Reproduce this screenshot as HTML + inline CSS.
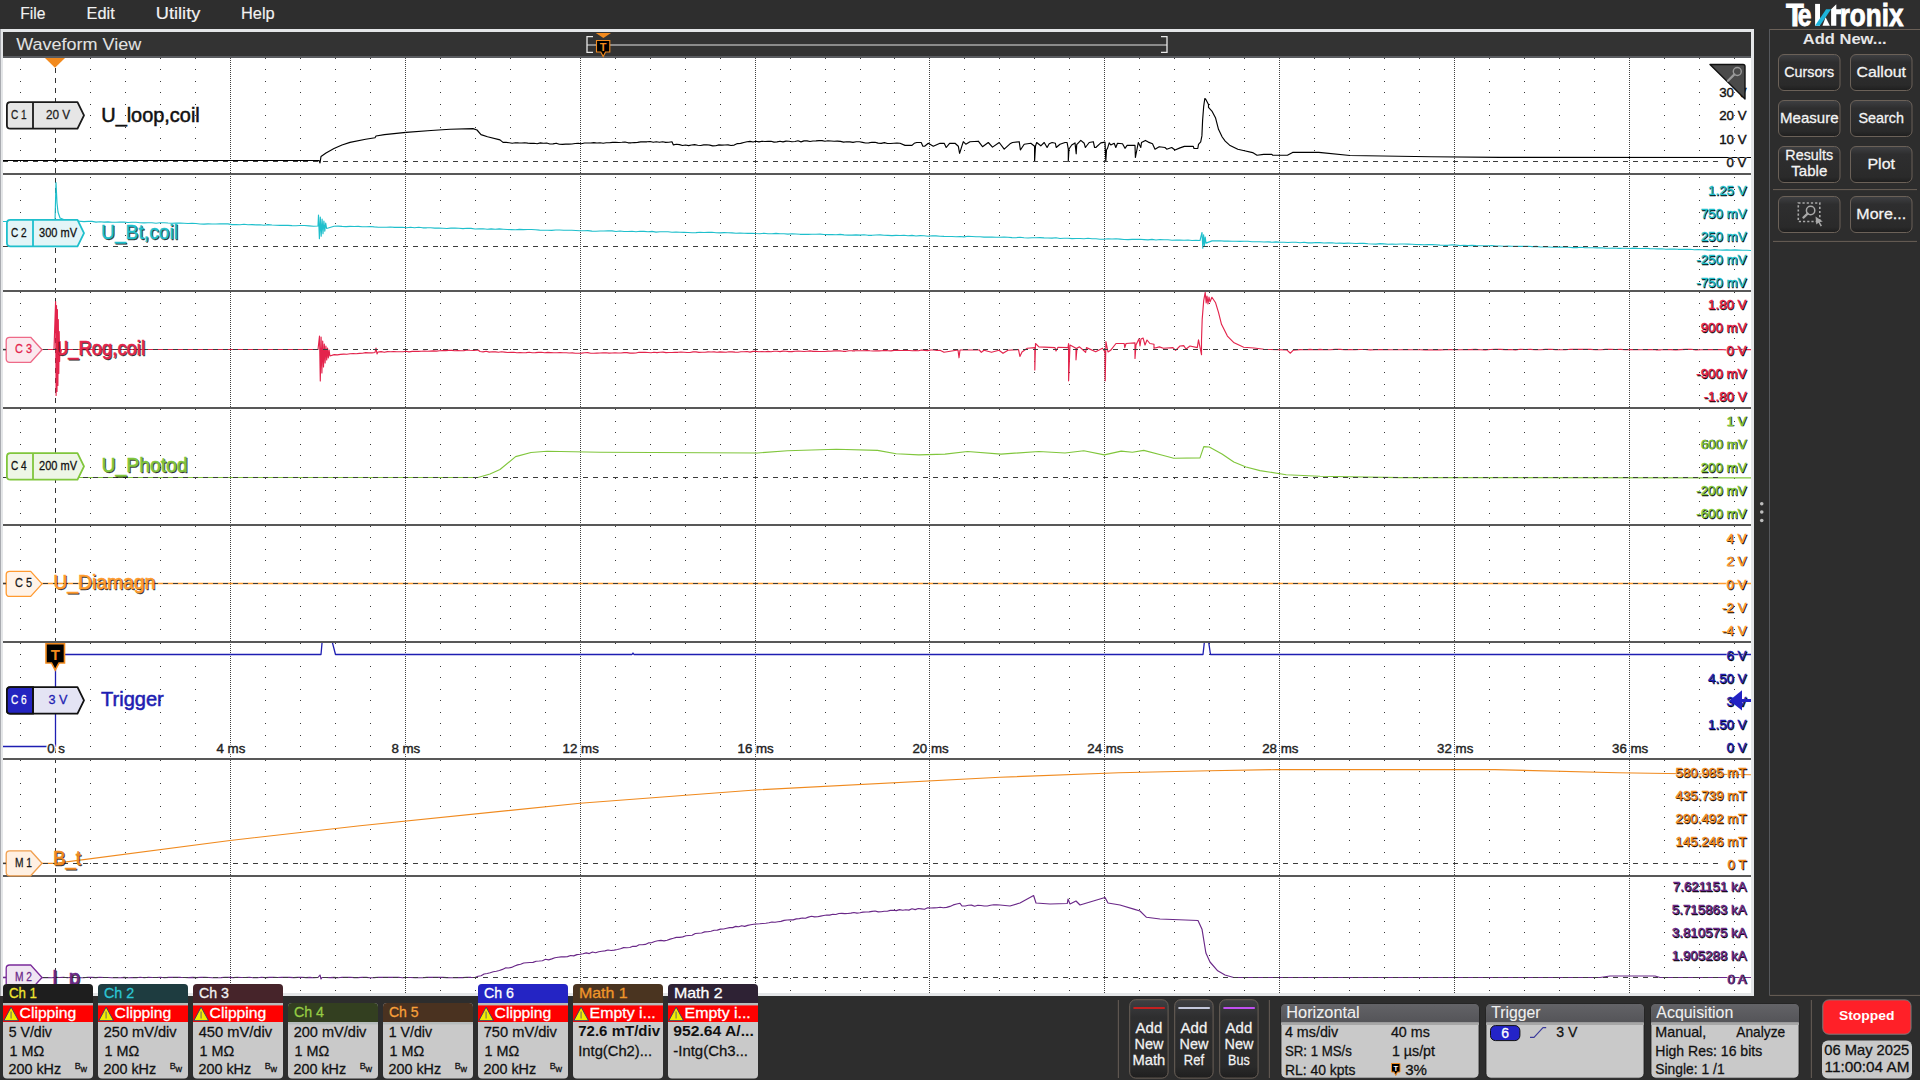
<!DOCTYPE html>
<html><head><meta charset="utf-8"><title>Waveform View</title>
<style>html,body{margin:0;padding:0;background:#2d2d2d;overflow:hidden}svg{display:block}text{font-family:"Liberation Sans", sans-serif}</style></head>
<body><svg width="1920" height="1080" viewBox="0 0 1920 1080" font-family='"Liberation Sans", sans-serif'>
<defs><clipPath id="wv"><rect x="3" y="58" width="1748" height="935"/></clipPath><clipPath id="p6"><rect x="3" y="643" width="1748" height="115"/></clipPath><linearGradient id="btn" x1="0" y1="0" x2="0" y2="1">
<stop offset="0" stop-color="#3f4043"/><stop offset="0.22" stop-color="#2e2e2f"/><stop offset="0.85" stop-color="#2a2a2a"/><stop offset="1" stop-color="#1e1e1e"/></linearGradient>
<linearGradient id="hdr" x1="0" y1="0" x2="0" y2="1"><stop offset="0" stop-color="#636367"/><stop offset="1" stop-color="#545458"/></linearGradient></defs>
<rect x="0" y="0" width="1920" height="1080" fill="#2d2d2d" />
<rect x="0" y="0" width="1920" height="29" fill="#2e2e2e" />
<text x="20.2" y="19" font-size="16" fill="#f2f2f2" font-weight="normal" text-anchor="start" textLength="25.2" lengthAdjust="spacingAndGlyphs" stroke="#f2f2f2" stroke-width="0.15" >File</text>
<text x="86.6" y="19" font-size="16" fill="#f2f2f2" font-weight="normal" text-anchor="start" textLength="28.1" lengthAdjust="spacingAndGlyphs" stroke="#f2f2f2" stroke-width="0.15" >Edit</text>
<text x="155.8" y="19" font-size="16" fill="#f2f2f2" font-weight="normal" text-anchor="start" textLength="44.5" lengthAdjust="spacingAndGlyphs" stroke="#f2f2f2" stroke-width="0.15" >Utility</text>
<text x="241" y="19" font-size="16" fill="#f2f2f2" font-weight="normal" text-anchor="start" textLength="33.7" lengthAdjust="spacingAndGlyphs" stroke="#f2f2f2" stroke-width="0.15" >Help</text>
<rect x="0" y="29" width="1754" height="967" fill="#e4e6e8" />
<rect x="0" y="29" width="1" height="967" fill="#a9abb0" />
<rect x="3" y="32" width="1748" height="24" fill="#333333" />
<rect x="3" y="56" width="1748" height="2" fill="#5a5c60" />
<text x="16.2" y="50" font-size="17" fill="#e2e2e2" font-weight="normal" text-anchor="start" textLength="125" lengthAdjust="spacingAndGlyphs" stroke="#e2e2e2" stroke-width="0.05" >Waveform View</text>
<line x1="587" y1="45" x2="1167" y2="45" stroke="#aaaaaa" stroke-width="1.6" />
<path d="M593,36.7 H587 V52.3 H593" fill="none" stroke="#e8e8e8" stroke-width="1.3"/>
<path d="M1161,36.7 H1167 V52.3 H1161" fill="none" stroke="#e8e8e8" stroke-width="1.3"/>
<path d="M595.8,33 H611 L603.4,38 Z" fill="#f28a1e"/>
<path d="M596.5,40.5 H609.8 V52 H605.5 L603.2,56.5 L600.8,52 H596.5 Z" fill="#000" stroke="#f28a1e" stroke-width="1.1"/>
<text x="603.2" y="50.5" font-size="11" fill="#f28a1e" font-weight="bold" text-anchor="middle" >T</text>
<rect x="3" y="58" width="1748" height="935" fill="#ffffff" />
<path d="M20,173h1v1h-1zM20,161h1v1h-1zM20,150h1v1h-1zM20,138h1v1h-1zM20,127h1v1h-1zM20,115h1v1h-1zM20,104h1v1h-1zM20,92h1v1h-1zM20,81h1v1h-1zM20,69h1v1h-1zM20,58h1v1h-1zM90,173h1v1h-1zM90,161h1v1h-1zM90,150h1v1h-1zM90,138h1v1h-1zM90,127h1v1h-1zM90,115h1v1h-1zM90,104h1v1h-1zM90,92h1v1h-1zM90,81h1v1h-1zM90,69h1v1h-1zM90,58h1v1h-1zM125,173h1v1h-1zM125,161h1v1h-1zM125,150h1v1h-1zM125,138h1v1h-1zM125,127h1v1h-1zM125,115h1v1h-1zM125,104h1v1h-1zM125,92h1v1h-1zM125,81h1v1h-1zM125,69h1v1h-1zM125,58h1v1h-1zM160,173h1v1h-1zM160,161h1v1h-1zM160,150h1v1h-1zM160,138h1v1h-1zM160,127h1v1h-1zM160,115h1v1h-1zM160,104h1v1h-1zM160,92h1v1h-1zM160,81h1v1h-1zM160,69h1v1h-1zM160,58h1v1h-1zM195,173h1v1h-1zM195,161h1v1h-1zM195,150h1v1h-1zM195,138h1v1h-1zM195,127h1v1h-1zM195,115h1v1h-1zM195,104h1v1h-1zM195,92h1v1h-1zM195,81h1v1h-1zM195,69h1v1h-1zM195,58h1v1h-1zM265,173h1v1h-1zM265,161h1v1h-1zM265,150h1v1h-1zM265,138h1v1h-1zM265,127h1v1h-1zM265,115h1v1h-1zM265,104h1v1h-1zM265,92h1v1h-1zM265,81h1v1h-1zM265,69h1v1h-1zM265,58h1v1h-1zM300,173h1v1h-1zM300,161h1v1h-1zM300,150h1v1h-1zM300,138h1v1h-1zM300,127h1v1h-1zM300,115h1v1h-1zM300,104h1v1h-1zM300,92h1v1h-1zM300,81h1v1h-1zM300,69h1v1h-1zM300,58h1v1h-1zM335,173h1v1h-1zM335,161h1v1h-1zM335,150h1v1h-1zM335,138h1v1h-1zM335,127h1v1h-1zM335,115h1v1h-1zM335,104h1v1h-1zM335,92h1v1h-1zM335,81h1v1h-1zM335,69h1v1h-1zM335,58h1v1h-1zM370,173h1v1h-1zM370,161h1v1h-1zM370,150h1v1h-1zM370,138h1v1h-1zM370,127h1v1h-1zM370,115h1v1h-1zM370,104h1v1h-1zM370,92h1v1h-1zM370,81h1v1h-1zM370,69h1v1h-1zM370,58h1v1h-1zM440,173h1v1h-1zM440,161h1v1h-1zM440,150h1v1h-1zM440,138h1v1h-1zM440,127h1v1h-1zM440,115h1v1h-1zM440,104h1v1h-1zM440,92h1v1h-1zM440,81h1v1h-1zM440,69h1v1h-1zM440,58h1v1h-1zM475,173h1v1h-1zM475,161h1v1h-1zM475,150h1v1h-1zM475,138h1v1h-1zM475,127h1v1h-1zM475,115h1v1h-1zM475,104h1v1h-1zM475,92h1v1h-1zM475,81h1v1h-1zM475,69h1v1h-1zM475,58h1v1h-1zM510,173h1v1h-1zM510,161h1v1h-1zM510,150h1v1h-1zM510,138h1v1h-1zM510,127h1v1h-1zM510,115h1v1h-1zM510,104h1v1h-1zM510,92h1v1h-1zM510,81h1v1h-1zM510,69h1v1h-1zM510,58h1v1h-1zM545,173h1v1h-1zM545,161h1v1h-1zM545,150h1v1h-1zM545,138h1v1h-1zM545,127h1v1h-1zM545,115h1v1h-1zM545,104h1v1h-1zM545,92h1v1h-1zM545,81h1v1h-1zM545,69h1v1h-1zM545,58h1v1h-1zM615,173h1v1h-1zM615,161h1v1h-1zM615,150h1v1h-1zM615,138h1v1h-1zM615,127h1v1h-1zM615,115h1v1h-1zM615,104h1v1h-1zM615,92h1v1h-1zM615,81h1v1h-1zM615,69h1v1h-1zM615,58h1v1h-1zM650,173h1v1h-1zM650,161h1v1h-1zM650,150h1v1h-1zM650,138h1v1h-1zM650,127h1v1h-1zM650,115h1v1h-1zM650,104h1v1h-1zM650,92h1v1h-1zM650,81h1v1h-1zM650,69h1v1h-1zM650,58h1v1h-1zM685,173h1v1h-1zM685,161h1v1h-1zM685,150h1v1h-1zM685,138h1v1h-1zM685,127h1v1h-1zM685,115h1v1h-1zM685,104h1v1h-1zM685,92h1v1h-1zM685,81h1v1h-1zM685,69h1v1h-1zM685,58h1v1h-1zM720,173h1v1h-1zM720,161h1v1h-1zM720,150h1v1h-1zM720,138h1v1h-1zM720,127h1v1h-1zM720,115h1v1h-1zM720,104h1v1h-1zM720,92h1v1h-1zM720,81h1v1h-1zM720,69h1v1h-1zM720,58h1v1h-1zM790,173h1v1h-1zM790,161h1v1h-1zM790,150h1v1h-1zM790,138h1v1h-1zM790,127h1v1h-1zM790,115h1v1h-1zM790,104h1v1h-1zM790,92h1v1h-1zM790,81h1v1h-1zM790,69h1v1h-1zM790,58h1v1h-1zM825,173h1v1h-1zM825,161h1v1h-1zM825,150h1v1h-1zM825,138h1v1h-1zM825,127h1v1h-1zM825,115h1v1h-1zM825,104h1v1h-1zM825,92h1v1h-1zM825,81h1v1h-1zM825,69h1v1h-1zM825,58h1v1h-1zM860,173h1v1h-1zM860,161h1v1h-1zM860,150h1v1h-1zM860,138h1v1h-1zM860,127h1v1h-1zM860,115h1v1h-1zM860,104h1v1h-1zM860,92h1v1h-1zM860,81h1v1h-1zM860,69h1v1h-1zM860,58h1v1h-1zM894,173h1v1h-1zM894,161h1v1h-1zM894,150h1v1h-1zM894,138h1v1h-1zM894,127h1v1h-1zM894,115h1v1h-1zM894,104h1v1h-1zM894,92h1v1h-1zM894,81h1v1h-1zM894,69h1v1h-1zM894,58h1v1h-1zM964,173h1v1h-1zM964,161h1v1h-1zM964,150h1v1h-1zM964,138h1v1h-1zM964,127h1v1h-1zM964,115h1v1h-1zM964,104h1v1h-1zM964,92h1v1h-1zM964,81h1v1h-1zM964,69h1v1h-1zM964,58h1v1h-1zM999,173h1v1h-1zM999,161h1v1h-1zM999,150h1v1h-1zM999,138h1v1h-1zM999,127h1v1h-1zM999,115h1v1h-1zM999,104h1v1h-1zM999,92h1v1h-1zM999,81h1v1h-1zM999,69h1v1h-1zM999,58h1v1h-1zM1034,173h1v1h-1zM1034,161h1v1h-1zM1034,150h1v1h-1zM1034,138h1v1h-1zM1034,127h1v1h-1zM1034,115h1v1h-1zM1034,104h1v1h-1zM1034,92h1v1h-1zM1034,81h1v1h-1zM1034,69h1v1h-1zM1034,58h1v1h-1zM1069,173h1v1h-1zM1069,161h1v1h-1zM1069,150h1v1h-1zM1069,138h1v1h-1zM1069,127h1v1h-1zM1069,115h1v1h-1zM1069,104h1v1h-1zM1069,92h1v1h-1zM1069,81h1v1h-1zM1069,69h1v1h-1zM1069,58h1v1h-1zM1139,173h1v1h-1zM1139,161h1v1h-1zM1139,150h1v1h-1zM1139,138h1v1h-1zM1139,127h1v1h-1zM1139,115h1v1h-1zM1139,104h1v1h-1zM1139,92h1v1h-1zM1139,81h1v1h-1zM1139,69h1v1h-1zM1139,58h1v1h-1zM1174,173h1v1h-1zM1174,161h1v1h-1zM1174,150h1v1h-1zM1174,138h1v1h-1zM1174,127h1v1h-1zM1174,115h1v1h-1zM1174,104h1v1h-1zM1174,92h1v1h-1zM1174,81h1v1h-1zM1174,69h1v1h-1zM1174,58h1v1h-1zM1209,173h1v1h-1zM1209,161h1v1h-1zM1209,150h1v1h-1zM1209,138h1v1h-1zM1209,127h1v1h-1zM1209,115h1v1h-1zM1209,104h1v1h-1zM1209,92h1v1h-1zM1209,81h1v1h-1zM1209,69h1v1h-1zM1209,58h1v1h-1zM1244,173h1v1h-1zM1244,161h1v1h-1zM1244,150h1v1h-1zM1244,138h1v1h-1zM1244,127h1v1h-1zM1244,115h1v1h-1zM1244,104h1v1h-1zM1244,92h1v1h-1zM1244,81h1v1h-1zM1244,69h1v1h-1zM1244,58h1v1h-1zM1314,173h1v1h-1zM1314,161h1v1h-1zM1314,150h1v1h-1zM1314,138h1v1h-1zM1314,127h1v1h-1zM1314,115h1v1h-1zM1314,104h1v1h-1zM1314,92h1v1h-1zM1314,81h1v1h-1zM1314,69h1v1h-1zM1314,58h1v1h-1zM1349,173h1v1h-1zM1349,161h1v1h-1zM1349,150h1v1h-1zM1349,138h1v1h-1zM1349,127h1v1h-1zM1349,115h1v1h-1zM1349,104h1v1h-1zM1349,92h1v1h-1zM1349,81h1v1h-1zM1349,69h1v1h-1zM1349,58h1v1h-1zM1384,173h1v1h-1zM1384,161h1v1h-1zM1384,150h1v1h-1zM1384,138h1v1h-1zM1384,127h1v1h-1zM1384,115h1v1h-1zM1384,104h1v1h-1zM1384,92h1v1h-1zM1384,81h1v1h-1zM1384,69h1v1h-1zM1384,58h1v1h-1zM1419,173h1v1h-1zM1419,161h1v1h-1zM1419,150h1v1h-1zM1419,138h1v1h-1zM1419,127h1v1h-1zM1419,115h1v1h-1zM1419,104h1v1h-1zM1419,92h1v1h-1zM1419,81h1v1h-1zM1419,69h1v1h-1zM1419,58h1v1h-1zM1489,173h1v1h-1zM1489,161h1v1h-1zM1489,150h1v1h-1zM1489,138h1v1h-1zM1489,127h1v1h-1zM1489,115h1v1h-1zM1489,104h1v1h-1zM1489,92h1v1h-1zM1489,81h1v1h-1zM1489,69h1v1h-1zM1489,58h1v1h-1zM1524,173h1v1h-1zM1524,161h1v1h-1zM1524,150h1v1h-1zM1524,138h1v1h-1zM1524,127h1v1h-1zM1524,115h1v1h-1zM1524,104h1v1h-1zM1524,92h1v1h-1zM1524,81h1v1h-1zM1524,69h1v1h-1zM1524,58h1v1h-1zM1559,173h1v1h-1zM1559,161h1v1h-1zM1559,150h1v1h-1zM1559,138h1v1h-1zM1559,127h1v1h-1zM1559,115h1v1h-1zM1559,104h1v1h-1zM1559,92h1v1h-1zM1559,81h1v1h-1zM1559,69h1v1h-1zM1559,58h1v1h-1zM1594,173h1v1h-1zM1594,161h1v1h-1zM1594,150h1v1h-1zM1594,138h1v1h-1zM1594,127h1v1h-1zM1594,115h1v1h-1zM1594,104h1v1h-1zM1594,92h1v1h-1zM1594,81h1v1h-1zM1594,69h1v1h-1zM1594,58h1v1h-1zM1664,173h1v1h-1zM1664,161h1v1h-1zM1664,150h1v1h-1zM1664,138h1v1h-1zM1664,127h1v1h-1zM1664,115h1v1h-1zM1664,104h1v1h-1zM1664,92h1v1h-1zM1664,81h1v1h-1zM1664,69h1v1h-1zM1664,58h1v1h-1zM1699,173h1v1h-1zM1699,161h1v1h-1zM1699,150h1v1h-1zM1699,138h1v1h-1zM1699,127h1v1h-1zM1699,115h1v1h-1zM1699,104h1v1h-1zM1699,92h1v1h-1zM1699,81h1v1h-1zM1699,69h1v1h-1zM1699,58h1v1h-1zM1734,173h1v1h-1zM1734,161h1v1h-1zM1734,150h1v1h-1zM1734,138h1v1h-1zM1734,127h1v1h-1zM1734,115h1v1h-1zM1734,104h1v1h-1zM1734,92h1v1h-1zM1734,81h1v1h-1zM1734,69h1v1h-1zM1734,58h1v1h-1zM20,281h1v1h-1zM20,269h1v1h-1zM20,258h1v1h-1zM20,246h1v1h-1zM20,235h1v1h-1zM20,223h1v1h-1zM20,212h1v1h-1zM20,200h1v1h-1zM20,189h1v1h-1zM20,177h1v1h-1zM90,281h1v1h-1zM90,269h1v1h-1zM90,258h1v1h-1zM90,246h1v1h-1zM90,235h1v1h-1zM90,223h1v1h-1zM90,212h1v1h-1zM90,200h1v1h-1zM90,189h1v1h-1zM90,177h1v1h-1zM125,281h1v1h-1zM125,269h1v1h-1zM125,258h1v1h-1zM125,246h1v1h-1zM125,235h1v1h-1zM125,223h1v1h-1zM125,212h1v1h-1zM125,200h1v1h-1zM125,189h1v1h-1zM125,177h1v1h-1zM160,281h1v1h-1zM160,269h1v1h-1zM160,258h1v1h-1zM160,246h1v1h-1zM160,235h1v1h-1zM160,223h1v1h-1zM160,212h1v1h-1zM160,200h1v1h-1zM160,189h1v1h-1zM160,177h1v1h-1zM195,281h1v1h-1zM195,269h1v1h-1zM195,258h1v1h-1zM195,246h1v1h-1zM195,235h1v1h-1zM195,223h1v1h-1zM195,212h1v1h-1zM195,200h1v1h-1zM195,189h1v1h-1zM195,177h1v1h-1zM265,281h1v1h-1zM265,269h1v1h-1zM265,258h1v1h-1zM265,246h1v1h-1zM265,235h1v1h-1zM265,223h1v1h-1zM265,212h1v1h-1zM265,200h1v1h-1zM265,189h1v1h-1zM265,177h1v1h-1zM300,281h1v1h-1zM300,269h1v1h-1zM300,258h1v1h-1zM300,246h1v1h-1zM300,235h1v1h-1zM300,223h1v1h-1zM300,212h1v1h-1zM300,200h1v1h-1zM300,189h1v1h-1zM300,177h1v1h-1zM335,281h1v1h-1zM335,269h1v1h-1zM335,258h1v1h-1zM335,246h1v1h-1zM335,235h1v1h-1zM335,223h1v1h-1zM335,212h1v1h-1zM335,200h1v1h-1zM335,189h1v1h-1zM335,177h1v1h-1zM370,281h1v1h-1zM370,269h1v1h-1zM370,258h1v1h-1zM370,246h1v1h-1zM370,235h1v1h-1zM370,223h1v1h-1zM370,212h1v1h-1zM370,200h1v1h-1zM370,189h1v1h-1zM370,177h1v1h-1zM440,281h1v1h-1zM440,269h1v1h-1zM440,258h1v1h-1zM440,246h1v1h-1zM440,235h1v1h-1zM440,223h1v1h-1zM440,212h1v1h-1zM440,200h1v1h-1zM440,189h1v1h-1zM440,177h1v1h-1zM475,281h1v1h-1zM475,269h1v1h-1zM475,258h1v1h-1zM475,246h1v1h-1zM475,235h1v1h-1zM475,223h1v1h-1zM475,212h1v1h-1zM475,200h1v1h-1zM475,189h1v1h-1zM475,177h1v1h-1zM510,281h1v1h-1zM510,269h1v1h-1zM510,258h1v1h-1zM510,246h1v1h-1zM510,235h1v1h-1zM510,223h1v1h-1zM510,212h1v1h-1zM510,200h1v1h-1zM510,189h1v1h-1zM510,177h1v1h-1zM545,281h1v1h-1zM545,269h1v1h-1zM545,258h1v1h-1zM545,246h1v1h-1zM545,235h1v1h-1zM545,223h1v1h-1zM545,212h1v1h-1zM545,200h1v1h-1zM545,189h1v1h-1zM545,177h1v1h-1zM615,281h1v1h-1zM615,269h1v1h-1zM615,258h1v1h-1zM615,246h1v1h-1zM615,235h1v1h-1zM615,223h1v1h-1zM615,212h1v1h-1zM615,200h1v1h-1zM615,189h1v1h-1zM615,177h1v1h-1zM650,281h1v1h-1zM650,269h1v1h-1zM650,258h1v1h-1zM650,246h1v1h-1zM650,235h1v1h-1zM650,223h1v1h-1zM650,212h1v1h-1zM650,200h1v1h-1zM650,189h1v1h-1zM650,177h1v1h-1zM685,281h1v1h-1zM685,269h1v1h-1zM685,258h1v1h-1zM685,246h1v1h-1zM685,235h1v1h-1zM685,223h1v1h-1zM685,212h1v1h-1zM685,200h1v1h-1zM685,189h1v1h-1zM685,177h1v1h-1zM720,281h1v1h-1zM720,269h1v1h-1zM720,258h1v1h-1zM720,246h1v1h-1zM720,235h1v1h-1zM720,223h1v1h-1zM720,212h1v1h-1zM720,200h1v1h-1zM720,189h1v1h-1zM720,177h1v1h-1zM790,281h1v1h-1zM790,269h1v1h-1zM790,258h1v1h-1zM790,246h1v1h-1zM790,235h1v1h-1zM790,223h1v1h-1zM790,212h1v1h-1zM790,200h1v1h-1zM790,189h1v1h-1zM790,177h1v1h-1zM825,281h1v1h-1zM825,269h1v1h-1zM825,258h1v1h-1zM825,246h1v1h-1zM825,235h1v1h-1zM825,223h1v1h-1zM825,212h1v1h-1zM825,200h1v1h-1zM825,189h1v1h-1zM825,177h1v1h-1zM860,281h1v1h-1zM860,269h1v1h-1zM860,258h1v1h-1zM860,246h1v1h-1zM860,235h1v1h-1zM860,223h1v1h-1zM860,212h1v1h-1zM860,200h1v1h-1zM860,189h1v1h-1zM860,177h1v1h-1zM894,281h1v1h-1zM894,269h1v1h-1zM894,258h1v1h-1zM894,246h1v1h-1zM894,235h1v1h-1zM894,223h1v1h-1zM894,212h1v1h-1zM894,200h1v1h-1zM894,189h1v1h-1zM894,177h1v1h-1zM964,281h1v1h-1zM964,269h1v1h-1zM964,258h1v1h-1zM964,246h1v1h-1zM964,235h1v1h-1zM964,223h1v1h-1zM964,212h1v1h-1zM964,200h1v1h-1zM964,189h1v1h-1zM964,177h1v1h-1zM999,281h1v1h-1zM999,269h1v1h-1zM999,258h1v1h-1zM999,246h1v1h-1zM999,235h1v1h-1zM999,223h1v1h-1zM999,212h1v1h-1zM999,200h1v1h-1zM999,189h1v1h-1zM999,177h1v1h-1zM1034,281h1v1h-1zM1034,269h1v1h-1zM1034,258h1v1h-1zM1034,246h1v1h-1zM1034,235h1v1h-1zM1034,223h1v1h-1zM1034,212h1v1h-1zM1034,200h1v1h-1zM1034,189h1v1h-1zM1034,177h1v1h-1zM1069,281h1v1h-1zM1069,269h1v1h-1zM1069,258h1v1h-1zM1069,246h1v1h-1zM1069,235h1v1h-1zM1069,223h1v1h-1zM1069,212h1v1h-1zM1069,200h1v1h-1zM1069,189h1v1h-1zM1069,177h1v1h-1zM1139,281h1v1h-1zM1139,269h1v1h-1zM1139,258h1v1h-1zM1139,246h1v1h-1zM1139,235h1v1h-1zM1139,223h1v1h-1zM1139,212h1v1h-1zM1139,200h1v1h-1zM1139,189h1v1h-1zM1139,177h1v1h-1zM1174,281h1v1h-1zM1174,269h1v1h-1zM1174,258h1v1h-1zM1174,246h1v1h-1zM1174,235h1v1h-1zM1174,223h1v1h-1zM1174,212h1v1h-1zM1174,200h1v1h-1zM1174,189h1v1h-1zM1174,177h1v1h-1zM1209,281h1v1h-1zM1209,269h1v1h-1zM1209,258h1v1h-1zM1209,246h1v1h-1zM1209,235h1v1h-1zM1209,223h1v1h-1zM1209,212h1v1h-1zM1209,200h1v1h-1zM1209,189h1v1h-1zM1209,177h1v1h-1zM1244,281h1v1h-1zM1244,269h1v1h-1zM1244,258h1v1h-1zM1244,246h1v1h-1zM1244,235h1v1h-1zM1244,223h1v1h-1zM1244,212h1v1h-1zM1244,200h1v1h-1zM1244,189h1v1h-1zM1244,177h1v1h-1zM1314,281h1v1h-1zM1314,269h1v1h-1zM1314,258h1v1h-1zM1314,246h1v1h-1zM1314,235h1v1h-1zM1314,223h1v1h-1zM1314,212h1v1h-1zM1314,200h1v1h-1zM1314,189h1v1h-1zM1314,177h1v1h-1zM1349,281h1v1h-1zM1349,269h1v1h-1zM1349,258h1v1h-1zM1349,246h1v1h-1zM1349,235h1v1h-1zM1349,223h1v1h-1zM1349,212h1v1h-1zM1349,200h1v1h-1zM1349,189h1v1h-1zM1349,177h1v1h-1zM1384,281h1v1h-1zM1384,269h1v1h-1zM1384,258h1v1h-1zM1384,246h1v1h-1zM1384,235h1v1h-1zM1384,223h1v1h-1zM1384,212h1v1h-1zM1384,200h1v1h-1zM1384,189h1v1h-1zM1384,177h1v1h-1zM1419,281h1v1h-1zM1419,269h1v1h-1zM1419,258h1v1h-1zM1419,246h1v1h-1zM1419,235h1v1h-1zM1419,223h1v1h-1zM1419,212h1v1h-1zM1419,200h1v1h-1zM1419,189h1v1h-1zM1419,177h1v1h-1zM1489,281h1v1h-1zM1489,269h1v1h-1zM1489,258h1v1h-1zM1489,246h1v1h-1zM1489,235h1v1h-1zM1489,223h1v1h-1zM1489,212h1v1h-1zM1489,200h1v1h-1zM1489,189h1v1h-1zM1489,177h1v1h-1zM1524,281h1v1h-1zM1524,269h1v1h-1zM1524,258h1v1h-1zM1524,246h1v1h-1zM1524,235h1v1h-1zM1524,223h1v1h-1zM1524,212h1v1h-1zM1524,200h1v1h-1zM1524,189h1v1h-1zM1524,177h1v1h-1zM1559,281h1v1h-1zM1559,269h1v1h-1zM1559,258h1v1h-1zM1559,246h1v1h-1zM1559,235h1v1h-1zM1559,223h1v1h-1zM1559,212h1v1h-1zM1559,200h1v1h-1zM1559,189h1v1h-1zM1559,177h1v1h-1zM1594,281h1v1h-1zM1594,269h1v1h-1zM1594,258h1v1h-1zM1594,246h1v1h-1zM1594,235h1v1h-1zM1594,223h1v1h-1zM1594,212h1v1h-1zM1594,200h1v1h-1zM1594,189h1v1h-1zM1594,177h1v1h-1zM1664,281h1v1h-1zM1664,269h1v1h-1zM1664,258h1v1h-1zM1664,246h1v1h-1zM1664,235h1v1h-1zM1664,223h1v1h-1zM1664,212h1v1h-1zM1664,200h1v1h-1zM1664,189h1v1h-1zM1664,177h1v1h-1zM1699,281h1v1h-1zM1699,269h1v1h-1zM1699,258h1v1h-1zM1699,246h1v1h-1zM1699,235h1v1h-1zM1699,223h1v1h-1zM1699,212h1v1h-1zM1699,200h1v1h-1zM1699,189h1v1h-1zM1699,177h1v1h-1zM1734,281h1v1h-1zM1734,269h1v1h-1zM1734,258h1v1h-1zM1734,246h1v1h-1zM1734,235h1v1h-1zM1734,223h1v1h-1zM1734,212h1v1h-1zM1734,200h1v1h-1zM1734,189h1v1h-1zM1734,177h1v1h-1zM20,407h1v1h-1zM20,395h1v1h-1zM20,384h1v1h-1zM20,372h1v1h-1zM20,361h1v1h-1zM20,349h1v1h-1zM20,338h1v1h-1zM20,326h1v1h-1zM20,315h1v1h-1zM20,303h1v1h-1zM20,292h1v1h-1zM90,407h1v1h-1zM90,395h1v1h-1zM90,384h1v1h-1zM90,372h1v1h-1zM90,361h1v1h-1zM90,349h1v1h-1zM90,338h1v1h-1zM90,326h1v1h-1zM90,315h1v1h-1zM90,303h1v1h-1zM90,292h1v1h-1zM125,407h1v1h-1zM125,395h1v1h-1zM125,384h1v1h-1zM125,372h1v1h-1zM125,361h1v1h-1zM125,349h1v1h-1zM125,338h1v1h-1zM125,326h1v1h-1zM125,315h1v1h-1zM125,303h1v1h-1zM125,292h1v1h-1zM160,407h1v1h-1zM160,395h1v1h-1zM160,384h1v1h-1zM160,372h1v1h-1zM160,361h1v1h-1zM160,349h1v1h-1zM160,338h1v1h-1zM160,326h1v1h-1zM160,315h1v1h-1zM160,303h1v1h-1zM160,292h1v1h-1zM195,407h1v1h-1zM195,395h1v1h-1zM195,384h1v1h-1zM195,372h1v1h-1zM195,361h1v1h-1zM195,349h1v1h-1zM195,338h1v1h-1zM195,326h1v1h-1zM195,315h1v1h-1zM195,303h1v1h-1zM195,292h1v1h-1zM265,407h1v1h-1zM265,395h1v1h-1zM265,384h1v1h-1zM265,372h1v1h-1zM265,361h1v1h-1zM265,349h1v1h-1zM265,338h1v1h-1zM265,326h1v1h-1zM265,315h1v1h-1zM265,303h1v1h-1zM265,292h1v1h-1zM300,407h1v1h-1zM300,395h1v1h-1zM300,384h1v1h-1zM300,372h1v1h-1zM300,361h1v1h-1zM300,349h1v1h-1zM300,338h1v1h-1zM300,326h1v1h-1zM300,315h1v1h-1zM300,303h1v1h-1zM300,292h1v1h-1zM335,407h1v1h-1zM335,395h1v1h-1zM335,384h1v1h-1zM335,372h1v1h-1zM335,361h1v1h-1zM335,349h1v1h-1zM335,338h1v1h-1zM335,326h1v1h-1zM335,315h1v1h-1zM335,303h1v1h-1zM335,292h1v1h-1zM370,407h1v1h-1zM370,395h1v1h-1zM370,384h1v1h-1zM370,372h1v1h-1zM370,361h1v1h-1zM370,349h1v1h-1zM370,338h1v1h-1zM370,326h1v1h-1zM370,315h1v1h-1zM370,303h1v1h-1zM370,292h1v1h-1zM440,407h1v1h-1zM440,395h1v1h-1zM440,384h1v1h-1zM440,372h1v1h-1zM440,361h1v1h-1zM440,349h1v1h-1zM440,338h1v1h-1zM440,326h1v1h-1zM440,315h1v1h-1zM440,303h1v1h-1zM440,292h1v1h-1zM475,407h1v1h-1zM475,395h1v1h-1zM475,384h1v1h-1zM475,372h1v1h-1zM475,361h1v1h-1zM475,349h1v1h-1zM475,338h1v1h-1zM475,326h1v1h-1zM475,315h1v1h-1zM475,303h1v1h-1zM475,292h1v1h-1zM510,407h1v1h-1zM510,395h1v1h-1zM510,384h1v1h-1zM510,372h1v1h-1zM510,361h1v1h-1zM510,349h1v1h-1zM510,338h1v1h-1zM510,326h1v1h-1zM510,315h1v1h-1zM510,303h1v1h-1zM510,292h1v1h-1zM545,407h1v1h-1zM545,395h1v1h-1zM545,384h1v1h-1zM545,372h1v1h-1zM545,361h1v1h-1zM545,349h1v1h-1zM545,338h1v1h-1zM545,326h1v1h-1zM545,315h1v1h-1zM545,303h1v1h-1zM545,292h1v1h-1zM615,407h1v1h-1zM615,395h1v1h-1zM615,384h1v1h-1zM615,372h1v1h-1zM615,361h1v1h-1zM615,349h1v1h-1zM615,338h1v1h-1zM615,326h1v1h-1zM615,315h1v1h-1zM615,303h1v1h-1zM615,292h1v1h-1zM650,407h1v1h-1zM650,395h1v1h-1zM650,384h1v1h-1zM650,372h1v1h-1zM650,361h1v1h-1zM650,349h1v1h-1zM650,338h1v1h-1zM650,326h1v1h-1zM650,315h1v1h-1zM650,303h1v1h-1zM650,292h1v1h-1zM685,407h1v1h-1zM685,395h1v1h-1zM685,384h1v1h-1zM685,372h1v1h-1zM685,361h1v1h-1zM685,349h1v1h-1zM685,338h1v1h-1zM685,326h1v1h-1zM685,315h1v1h-1zM685,303h1v1h-1zM685,292h1v1h-1zM720,407h1v1h-1zM720,395h1v1h-1zM720,384h1v1h-1zM720,372h1v1h-1zM720,361h1v1h-1zM720,349h1v1h-1zM720,338h1v1h-1zM720,326h1v1h-1zM720,315h1v1h-1zM720,303h1v1h-1zM720,292h1v1h-1zM790,407h1v1h-1zM790,395h1v1h-1zM790,384h1v1h-1zM790,372h1v1h-1zM790,361h1v1h-1zM790,349h1v1h-1zM790,338h1v1h-1zM790,326h1v1h-1zM790,315h1v1h-1zM790,303h1v1h-1zM790,292h1v1h-1zM825,407h1v1h-1zM825,395h1v1h-1zM825,384h1v1h-1zM825,372h1v1h-1zM825,361h1v1h-1zM825,349h1v1h-1zM825,338h1v1h-1zM825,326h1v1h-1zM825,315h1v1h-1zM825,303h1v1h-1zM825,292h1v1h-1zM860,407h1v1h-1zM860,395h1v1h-1zM860,384h1v1h-1zM860,372h1v1h-1zM860,361h1v1h-1zM860,349h1v1h-1zM860,338h1v1h-1zM860,326h1v1h-1zM860,315h1v1h-1zM860,303h1v1h-1zM860,292h1v1h-1zM894,407h1v1h-1zM894,395h1v1h-1zM894,384h1v1h-1zM894,372h1v1h-1zM894,361h1v1h-1zM894,349h1v1h-1zM894,338h1v1h-1zM894,326h1v1h-1zM894,315h1v1h-1zM894,303h1v1h-1zM894,292h1v1h-1zM964,407h1v1h-1zM964,395h1v1h-1zM964,384h1v1h-1zM964,372h1v1h-1zM964,361h1v1h-1zM964,349h1v1h-1zM964,338h1v1h-1zM964,326h1v1h-1zM964,315h1v1h-1zM964,303h1v1h-1zM964,292h1v1h-1zM999,407h1v1h-1zM999,395h1v1h-1zM999,384h1v1h-1zM999,372h1v1h-1zM999,361h1v1h-1zM999,349h1v1h-1zM999,338h1v1h-1zM999,326h1v1h-1zM999,315h1v1h-1zM999,303h1v1h-1zM999,292h1v1h-1zM1034,407h1v1h-1zM1034,395h1v1h-1zM1034,384h1v1h-1zM1034,372h1v1h-1zM1034,361h1v1h-1zM1034,349h1v1h-1zM1034,338h1v1h-1zM1034,326h1v1h-1zM1034,315h1v1h-1zM1034,303h1v1h-1zM1034,292h1v1h-1zM1069,407h1v1h-1zM1069,395h1v1h-1zM1069,384h1v1h-1zM1069,372h1v1h-1zM1069,361h1v1h-1zM1069,349h1v1h-1zM1069,338h1v1h-1zM1069,326h1v1h-1zM1069,315h1v1h-1zM1069,303h1v1h-1zM1069,292h1v1h-1zM1139,407h1v1h-1zM1139,395h1v1h-1zM1139,384h1v1h-1zM1139,372h1v1h-1zM1139,361h1v1h-1zM1139,349h1v1h-1zM1139,338h1v1h-1zM1139,326h1v1h-1zM1139,315h1v1h-1zM1139,303h1v1h-1zM1139,292h1v1h-1zM1174,407h1v1h-1zM1174,395h1v1h-1zM1174,384h1v1h-1zM1174,372h1v1h-1zM1174,361h1v1h-1zM1174,349h1v1h-1zM1174,338h1v1h-1zM1174,326h1v1h-1zM1174,315h1v1h-1zM1174,303h1v1h-1zM1174,292h1v1h-1zM1209,407h1v1h-1zM1209,395h1v1h-1zM1209,384h1v1h-1zM1209,372h1v1h-1zM1209,361h1v1h-1zM1209,349h1v1h-1zM1209,338h1v1h-1zM1209,326h1v1h-1zM1209,315h1v1h-1zM1209,303h1v1h-1zM1209,292h1v1h-1zM1244,407h1v1h-1zM1244,395h1v1h-1zM1244,384h1v1h-1zM1244,372h1v1h-1zM1244,361h1v1h-1zM1244,349h1v1h-1zM1244,338h1v1h-1zM1244,326h1v1h-1zM1244,315h1v1h-1zM1244,303h1v1h-1zM1244,292h1v1h-1zM1314,407h1v1h-1zM1314,395h1v1h-1zM1314,384h1v1h-1zM1314,372h1v1h-1zM1314,361h1v1h-1zM1314,349h1v1h-1zM1314,338h1v1h-1zM1314,326h1v1h-1zM1314,315h1v1h-1zM1314,303h1v1h-1zM1314,292h1v1h-1zM1349,407h1v1h-1zM1349,395h1v1h-1zM1349,384h1v1h-1zM1349,372h1v1h-1zM1349,361h1v1h-1zM1349,349h1v1h-1zM1349,338h1v1h-1zM1349,326h1v1h-1zM1349,315h1v1h-1zM1349,303h1v1h-1zM1349,292h1v1h-1zM1384,407h1v1h-1zM1384,395h1v1h-1zM1384,384h1v1h-1zM1384,372h1v1h-1zM1384,361h1v1h-1zM1384,349h1v1h-1zM1384,338h1v1h-1zM1384,326h1v1h-1zM1384,315h1v1h-1zM1384,303h1v1h-1zM1384,292h1v1h-1zM1419,407h1v1h-1zM1419,395h1v1h-1zM1419,384h1v1h-1zM1419,372h1v1h-1zM1419,361h1v1h-1zM1419,349h1v1h-1zM1419,338h1v1h-1zM1419,326h1v1h-1zM1419,315h1v1h-1zM1419,303h1v1h-1zM1419,292h1v1h-1zM1489,407h1v1h-1zM1489,395h1v1h-1zM1489,384h1v1h-1zM1489,372h1v1h-1zM1489,361h1v1h-1zM1489,349h1v1h-1zM1489,338h1v1h-1zM1489,326h1v1h-1zM1489,315h1v1h-1zM1489,303h1v1h-1zM1489,292h1v1h-1zM1524,407h1v1h-1zM1524,395h1v1h-1zM1524,384h1v1h-1zM1524,372h1v1h-1zM1524,361h1v1h-1zM1524,349h1v1h-1zM1524,338h1v1h-1zM1524,326h1v1h-1zM1524,315h1v1h-1zM1524,303h1v1h-1zM1524,292h1v1h-1zM1559,407h1v1h-1zM1559,395h1v1h-1zM1559,384h1v1h-1zM1559,372h1v1h-1zM1559,361h1v1h-1zM1559,349h1v1h-1zM1559,338h1v1h-1zM1559,326h1v1h-1zM1559,315h1v1h-1zM1559,303h1v1h-1zM1559,292h1v1h-1zM1594,407h1v1h-1zM1594,395h1v1h-1zM1594,384h1v1h-1zM1594,372h1v1h-1zM1594,361h1v1h-1zM1594,349h1v1h-1zM1594,338h1v1h-1zM1594,326h1v1h-1zM1594,315h1v1h-1zM1594,303h1v1h-1zM1594,292h1v1h-1zM1664,407h1v1h-1zM1664,395h1v1h-1zM1664,384h1v1h-1zM1664,372h1v1h-1zM1664,361h1v1h-1zM1664,349h1v1h-1zM1664,338h1v1h-1zM1664,326h1v1h-1zM1664,315h1v1h-1zM1664,303h1v1h-1zM1664,292h1v1h-1zM1699,407h1v1h-1zM1699,395h1v1h-1zM1699,384h1v1h-1zM1699,372h1v1h-1zM1699,361h1v1h-1zM1699,349h1v1h-1zM1699,338h1v1h-1zM1699,326h1v1h-1zM1699,315h1v1h-1zM1699,303h1v1h-1zM1699,292h1v1h-1zM1734,407h1v1h-1zM1734,395h1v1h-1zM1734,384h1v1h-1zM1734,372h1v1h-1zM1734,361h1v1h-1zM1734,349h1v1h-1zM1734,338h1v1h-1zM1734,326h1v1h-1zM1734,315h1v1h-1zM1734,303h1v1h-1zM1734,292h1v1h-1zM20,513h1v1h-1zM20,501h1v1h-1zM20,490h1v1h-1zM20,478h1v1h-1zM20,467h1v1h-1zM20,455h1v1h-1zM20,444h1v1h-1zM20,432h1v1h-1zM20,421h1v1h-1zM20,409h1v1h-1zM90,513h1v1h-1zM90,501h1v1h-1zM90,490h1v1h-1zM90,478h1v1h-1zM90,467h1v1h-1zM90,455h1v1h-1zM90,444h1v1h-1zM90,432h1v1h-1zM90,421h1v1h-1zM90,409h1v1h-1zM125,513h1v1h-1zM125,501h1v1h-1zM125,490h1v1h-1zM125,478h1v1h-1zM125,467h1v1h-1zM125,455h1v1h-1zM125,444h1v1h-1zM125,432h1v1h-1zM125,421h1v1h-1zM125,409h1v1h-1zM160,513h1v1h-1zM160,501h1v1h-1zM160,490h1v1h-1zM160,478h1v1h-1zM160,467h1v1h-1zM160,455h1v1h-1zM160,444h1v1h-1zM160,432h1v1h-1zM160,421h1v1h-1zM160,409h1v1h-1zM195,513h1v1h-1zM195,501h1v1h-1zM195,490h1v1h-1zM195,478h1v1h-1zM195,467h1v1h-1zM195,455h1v1h-1zM195,444h1v1h-1zM195,432h1v1h-1zM195,421h1v1h-1zM195,409h1v1h-1zM265,513h1v1h-1zM265,501h1v1h-1zM265,490h1v1h-1zM265,478h1v1h-1zM265,467h1v1h-1zM265,455h1v1h-1zM265,444h1v1h-1zM265,432h1v1h-1zM265,421h1v1h-1zM265,409h1v1h-1zM300,513h1v1h-1zM300,501h1v1h-1zM300,490h1v1h-1zM300,478h1v1h-1zM300,467h1v1h-1zM300,455h1v1h-1zM300,444h1v1h-1zM300,432h1v1h-1zM300,421h1v1h-1zM300,409h1v1h-1zM335,513h1v1h-1zM335,501h1v1h-1zM335,490h1v1h-1zM335,478h1v1h-1zM335,467h1v1h-1zM335,455h1v1h-1zM335,444h1v1h-1zM335,432h1v1h-1zM335,421h1v1h-1zM335,409h1v1h-1zM370,513h1v1h-1zM370,501h1v1h-1zM370,490h1v1h-1zM370,478h1v1h-1zM370,467h1v1h-1zM370,455h1v1h-1zM370,444h1v1h-1zM370,432h1v1h-1zM370,421h1v1h-1zM370,409h1v1h-1zM440,513h1v1h-1zM440,501h1v1h-1zM440,490h1v1h-1zM440,478h1v1h-1zM440,467h1v1h-1zM440,455h1v1h-1zM440,444h1v1h-1zM440,432h1v1h-1zM440,421h1v1h-1zM440,409h1v1h-1zM475,513h1v1h-1zM475,501h1v1h-1zM475,490h1v1h-1zM475,478h1v1h-1zM475,467h1v1h-1zM475,455h1v1h-1zM475,444h1v1h-1zM475,432h1v1h-1zM475,421h1v1h-1zM475,409h1v1h-1zM510,513h1v1h-1zM510,501h1v1h-1zM510,490h1v1h-1zM510,478h1v1h-1zM510,467h1v1h-1zM510,455h1v1h-1zM510,444h1v1h-1zM510,432h1v1h-1zM510,421h1v1h-1zM510,409h1v1h-1zM545,513h1v1h-1zM545,501h1v1h-1zM545,490h1v1h-1zM545,478h1v1h-1zM545,467h1v1h-1zM545,455h1v1h-1zM545,444h1v1h-1zM545,432h1v1h-1zM545,421h1v1h-1zM545,409h1v1h-1zM615,513h1v1h-1zM615,501h1v1h-1zM615,490h1v1h-1zM615,478h1v1h-1zM615,467h1v1h-1zM615,455h1v1h-1zM615,444h1v1h-1zM615,432h1v1h-1zM615,421h1v1h-1zM615,409h1v1h-1zM650,513h1v1h-1zM650,501h1v1h-1zM650,490h1v1h-1zM650,478h1v1h-1zM650,467h1v1h-1zM650,455h1v1h-1zM650,444h1v1h-1zM650,432h1v1h-1zM650,421h1v1h-1zM650,409h1v1h-1zM685,513h1v1h-1zM685,501h1v1h-1zM685,490h1v1h-1zM685,478h1v1h-1zM685,467h1v1h-1zM685,455h1v1h-1zM685,444h1v1h-1zM685,432h1v1h-1zM685,421h1v1h-1zM685,409h1v1h-1zM720,513h1v1h-1zM720,501h1v1h-1zM720,490h1v1h-1zM720,478h1v1h-1zM720,467h1v1h-1zM720,455h1v1h-1zM720,444h1v1h-1zM720,432h1v1h-1zM720,421h1v1h-1zM720,409h1v1h-1zM790,513h1v1h-1zM790,501h1v1h-1zM790,490h1v1h-1zM790,478h1v1h-1zM790,467h1v1h-1zM790,455h1v1h-1zM790,444h1v1h-1zM790,432h1v1h-1zM790,421h1v1h-1zM790,409h1v1h-1zM825,513h1v1h-1zM825,501h1v1h-1zM825,490h1v1h-1zM825,478h1v1h-1zM825,467h1v1h-1zM825,455h1v1h-1zM825,444h1v1h-1zM825,432h1v1h-1zM825,421h1v1h-1zM825,409h1v1h-1zM860,513h1v1h-1zM860,501h1v1h-1zM860,490h1v1h-1zM860,478h1v1h-1zM860,467h1v1h-1zM860,455h1v1h-1zM860,444h1v1h-1zM860,432h1v1h-1zM860,421h1v1h-1zM860,409h1v1h-1zM894,513h1v1h-1zM894,501h1v1h-1zM894,490h1v1h-1zM894,478h1v1h-1zM894,467h1v1h-1zM894,455h1v1h-1zM894,444h1v1h-1zM894,432h1v1h-1zM894,421h1v1h-1zM894,409h1v1h-1zM964,513h1v1h-1zM964,501h1v1h-1zM964,490h1v1h-1zM964,478h1v1h-1zM964,467h1v1h-1zM964,455h1v1h-1zM964,444h1v1h-1zM964,432h1v1h-1zM964,421h1v1h-1zM964,409h1v1h-1zM999,513h1v1h-1zM999,501h1v1h-1zM999,490h1v1h-1zM999,478h1v1h-1zM999,467h1v1h-1zM999,455h1v1h-1zM999,444h1v1h-1zM999,432h1v1h-1zM999,421h1v1h-1zM999,409h1v1h-1zM1034,513h1v1h-1zM1034,501h1v1h-1zM1034,490h1v1h-1zM1034,478h1v1h-1zM1034,467h1v1h-1zM1034,455h1v1h-1zM1034,444h1v1h-1zM1034,432h1v1h-1zM1034,421h1v1h-1zM1034,409h1v1h-1zM1069,513h1v1h-1zM1069,501h1v1h-1zM1069,490h1v1h-1zM1069,478h1v1h-1zM1069,467h1v1h-1zM1069,455h1v1h-1zM1069,444h1v1h-1zM1069,432h1v1h-1zM1069,421h1v1h-1zM1069,409h1v1h-1zM1139,513h1v1h-1zM1139,501h1v1h-1zM1139,490h1v1h-1zM1139,478h1v1h-1zM1139,467h1v1h-1zM1139,455h1v1h-1zM1139,444h1v1h-1zM1139,432h1v1h-1zM1139,421h1v1h-1zM1139,409h1v1h-1zM1174,513h1v1h-1zM1174,501h1v1h-1zM1174,490h1v1h-1zM1174,478h1v1h-1zM1174,467h1v1h-1zM1174,455h1v1h-1zM1174,444h1v1h-1zM1174,432h1v1h-1zM1174,421h1v1h-1zM1174,409h1v1h-1zM1209,513h1v1h-1zM1209,501h1v1h-1zM1209,490h1v1h-1zM1209,478h1v1h-1zM1209,467h1v1h-1zM1209,455h1v1h-1zM1209,444h1v1h-1zM1209,432h1v1h-1zM1209,421h1v1h-1zM1209,409h1v1h-1zM1244,513h1v1h-1zM1244,501h1v1h-1zM1244,490h1v1h-1zM1244,478h1v1h-1zM1244,467h1v1h-1zM1244,455h1v1h-1zM1244,444h1v1h-1zM1244,432h1v1h-1zM1244,421h1v1h-1zM1244,409h1v1h-1zM1314,513h1v1h-1zM1314,501h1v1h-1zM1314,490h1v1h-1zM1314,478h1v1h-1zM1314,467h1v1h-1zM1314,455h1v1h-1zM1314,444h1v1h-1zM1314,432h1v1h-1zM1314,421h1v1h-1zM1314,409h1v1h-1zM1349,513h1v1h-1zM1349,501h1v1h-1zM1349,490h1v1h-1zM1349,478h1v1h-1zM1349,467h1v1h-1zM1349,455h1v1h-1zM1349,444h1v1h-1zM1349,432h1v1h-1zM1349,421h1v1h-1zM1349,409h1v1h-1zM1384,513h1v1h-1zM1384,501h1v1h-1zM1384,490h1v1h-1zM1384,478h1v1h-1zM1384,467h1v1h-1zM1384,455h1v1h-1zM1384,444h1v1h-1zM1384,432h1v1h-1zM1384,421h1v1h-1zM1384,409h1v1h-1zM1419,513h1v1h-1zM1419,501h1v1h-1zM1419,490h1v1h-1zM1419,478h1v1h-1zM1419,467h1v1h-1zM1419,455h1v1h-1zM1419,444h1v1h-1zM1419,432h1v1h-1zM1419,421h1v1h-1zM1419,409h1v1h-1zM1489,513h1v1h-1zM1489,501h1v1h-1zM1489,490h1v1h-1zM1489,478h1v1h-1zM1489,467h1v1h-1zM1489,455h1v1h-1zM1489,444h1v1h-1zM1489,432h1v1h-1zM1489,421h1v1h-1zM1489,409h1v1h-1zM1524,513h1v1h-1zM1524,501h1v1h-1zM1524,490h1v1h-1zM1524,478h1v1h-1zM1524,467h1v1h-1zM1524,455h1v1h-1zM1524,444h1v1h-1zM1524,432h1v1h-1zM1524,421h1v1h-1zM1524,409h1v1h-1zM1559,513h1v1h-1zM1559,501h1v1h-1zM1559,490h1v1h-1zM1559,478h1v1h-1zM1559,467h1v1h-1zM1559,455h1v1h-1zM1559,444h1v1h-1zM1559,432h1v1h-1zM1559,421h1v1h-1zM1559,409h1v1h-1zM1594,513h1v1h-1zM1594,501h1v1h-1zM1594,490h1v1h-1zM1594,478h1v1h-1zM1594,467h1v1h-1zM1594,455h1v1h-1zM1594,444h1v1h-1zM1594,432h1v1h-1zM1594,421h1v1h-1zM1594,409h1v1h-1zM1664,513h1v1h-1zM1664,501h1v1h-1zM1664,490h1v1h-1zM1664,478h1v1h-1zM1664,467h1v1h-1zM1664,455h1v1h-1zM1664,444h1v1h-1zM1664,432h1v1h-1zM1664,421h1v1h-1zM1664,409h1v1h-1zM1699,513h1v1h-1zM1699,501h1v1h-1zM1699,490h1v1h-1zM1699,478h1v1h-1zM1699,467h1v1h-1zM1699,455h1v1h-1zM1699,444h1v1h-1zM1699,432h1v1h-1zM1699,421h1v1h-1zM1699,409h1v1h-1zM1734,513h1v1h-1zM1734,501h1v1h-1zM1734,490h1v1h-1zM1734,478h1v1h-1zM1734,467h1v1h-1zM1734,455h1v1h-1zM1734,444h1v1h-1zM1734,432h1v1h-1zM1734,421h1v1h-1zM1734,409h1v1h-1zM20,629h1v1h-1zM20,618h1v1h-1zM20,606h1v1h-1zM20,595h1v1h-1zM20,583h1v1h-1zM20,572h1v1h-1zM20,560h1v1h-1zM20,549h1v1h-1zM20,537h1v1h-1zM20,526h1v1h-1zM90,629h1v1h-1zM90,618h1v1h-1zM90,606h1v1h-1zM90,595h1v1h-1zM90,583h1v1h-1zM90,572h1v1h-1zM90,560h1v1h-1zM90,549h1v1h-1zM90,537h1v1h-1zM90,526h1v1h-1zM125,629h1v1h-1zM125,618h1v1h-1zM125,606h1v1h-1zM125,595h1v1h-1zM125,583h1v1h-1zM125,572h1v1h-1zM125,560h1v1h-1zM125,549h1v1h-1zM125,537h1v1h-1zM125,526h1v1h-1zM160,629h1v1h-1zM160,618h1v1h-1zM160,606h1v1h-1zM160,595h1v1h-1zM160,583h1v1h-1zM160,572h1v1h-1zM160,560h1v1h-1zM160,549h1v1h-1zM160,537h1v1h-1zM160,526h1v1h-1zM195,629h1v1h-1zM195,618h1v1h-1zM195,606h1v1h-1zM195,595h1v1h-1zM195,583h1v1h-1zM195,572h1v1h-1zM195,560h1v1h-1zM195,549h1v1h-1zM195,537h1v1h-1zM195,526h1v1h-1zM265,629h1v1h-1zM265,618h1v1h-1zM265,606h1v1h-1zM265,595h1v1h-1zM265,583h1v1h-1zM265,572h1v1h-1zM265,560h1v1h-1zM265,549h1v1h-1zM265,537h1v1h-1zM265,526h1v1h-1zM300,629h1v1h-1zM300,618h1v1h-1zM300,606h1v1h-1zM300,595h1v1h-1zM300,583h1v1h-1zM300,572h1v1h-1zM300,560h1v1h-1zM300,549h1v1h-1zM300,537h1v1h-1zM300,526h1v1h-1zM335,629h1v1h-1zM335,618h1v1h-1zM335,606h1v1h-1zM335,595h1v1h-1zM335,583h1v1h-1zM335,572h1v1h-1zM335,560h1v1h-1zM335,549h1v1h-1zM335,537h1v1h-1zM335,526h1v1h-1zM370,629h1v1h-1zM370,618h1v1h-1zM370,606h1v1h-1zM370,595h1v1h-1zM370,583h1v1h-1zM370,572h1v1h-1zM370,560h1v1h-1zM370,549h1v1h-1zM370,537h1v1h-1zM370,526h1v1h-1zM440,629h1v1h-1zM440,618h1v1h-1zM440,606h1v1h-1zM440,595h1v1h-1zM440,583h1v1h-1zM440,572h1v1h-1zM440,560h1v1h-1zM440,549h1v1h-1zM440,537h1v1h-1zM440,526h1v1h-1zM475,629h1v1h-1zM475,618h1v1h-1zM475,606h1v1h-1zM475,595h1v1h-1zM475,583h1v1h-1zM475,572h1v1h-1zM475,560h1v1h-1zM475,549h1v1h-1zM475,537h1v1h-1zM475,526h1v1h-1zM510,629h1v1h-1zM510,618h1v1h-1zM510,606h1v1h-1zM510,595h1v1h-1zM510,583h1v1h-1zM510,572h1v1h-1zM510,560h1v1h-1zM510,549h1v1h-1zM510,537h1v1h-1zM510,526h1v1h-1zM545,629h1v1h-1zM545,618h1v1h-1zM545,606h1v1h-1zM545,595h1v1h-1zM545,583h1v1h-1zM545,572h1v1h-1zM545,560h1v1h-1zM545,549h1v1h-1zM545,537h1v1h-1zM545,526h1v1h-1zM615,629h1v1h-1zM615,618h1v1h-1zM615,606h1v1h-1zM615,595h1v1h-1zM615,583h1v1h-1zM615,572h1v1h-1zM615,560h1v1h-1zM615,549h1v1h-1zM615,537h1v1h-1zM615,526h1v1h-1zM650,629h1v1h-1zM650,618h1v1h-1zM650,606h1v1h-1zM650,595h1v1h-1zM650,583h1v1h-1zM650,572h1v1h-1zM650,560h1v1h-1zM650,549h1v1h-1zM650,537h1v1h-1zM650,526h1v1h-1zM685,629h1v1h-1zM685,618h1v1h-1zM685,606h1v1h-1zM685,595h1v1h-1zM685,583h1v1h-1zM685,572h1v1h-1zM685,560h1v1h-1zM685,549h1v1h-1zM685,537h1v1h-1zM685,526h1v1h-1zM720,629h1v1h-1zM720,618h1v1h-1zM720,606h1v1h-1zM720,595h1v1h-1zM720,583h1v1h-1zM720,572h1v1h-1zM720,560h1v1h-1zM720,549h1v1h-1zM720,537h1v1h-1zM720,526h1v1h-1zM790,629h1v1h-1zM790,618h1v1h-1zM790,606h1v1h-1zM790,595h1v1h-1zM790,583h1v1h-1zM790,572h1v1h-1zM790,560h1v1h-1zM790,549h1v1h-1zM790,537h1v1h-1zM790,526h1v1h-1zM825,629h1v1h-1zM825,618h1v1h-1zM825,606h1v1h-1zM825,595h1v1h-1zM825,583h1v1h-1zM825,572h1v1h-1zM825,560h1v1h-1zM825,549h1v1h-1zM825,537h1v1h-1zM825,526h1v1h-1zM860,629h1v1h-1zM860,618h1v1h-1zM860,606h1v1h-1zM860,595h1v1h-1zM860,583h1v1h-1zM860,572h1v1h-1zM860,560h1v1h-1zM860,549h1v1h-1zM860,537h1v1h-1zM860,526h1v1h-1zM894,629h1v1h-1zM894,618h1v1h-1zM894,606h1v1h-1zM894,595h1v1h-1zM894,583h1v1h-1zM894,572h1v1h-1zM894,560h1v1h-1zM894,549h1v1h-1zM894,537h1v1h-1zM894,526h1v1h-1zM964,629h1v1h-1zM964,618h1v1h-1zM964,606h1v1h-1zM964,595h1v1h-1zM964,583h1v1h-1zM964,572h1v1h-1zM964,560h1v1h-1zM964,549h1v1h-1zM964,537h1v1h-1zM964,526h1v1h-1zM999,629h1v1h-1zM999,618h1v1h-1zM999,606h1v1h-1zM999,595h1v1h-1zM999,583h1v1h-1zM999,572h1v1h-1zM999,560h1v1h-1zM999,549h1v1h-1zM999,537h1v1h-1zM999,526h1v1h-1zM1034,629h1v1h-1zM1034,618h1v1h-1zM1034,606h1v1h-1zM1034,595h1v1h-1zM1034,583h1v1h-1zM1034,572h1v1h-1zM1034,560h1v1h-1zM1034,549h1v1h-1zM1034,537h1v1h-1zM1034,526h1v1h-1zM1069,629h1v1h-1zM1069,618h1v1h-1zM1069,606h1v1h-1zM1069,595h1v1h-1zM1069,583h1v1h-1zM1069,572h1v1h-1zM1069,560h1v1h-1zM1069,549h1v1h-1zM1069,537h1v1h-1zM1069,526h1v1h-1zM1139,629h1v1h-1zM1139,618h1v1h-1zM1139,606h1v1h-1zM1139,595h1v1h-1zM1139,583h1v1h-1zM1139,572h1v1h-1zM1139,560h1v1h-1zM1139,549h1v1h-1zM1139,537h1v1h-1zM1139,526h1v1h-1zM1174,629h1v1h-1zM1174,618h1v1h-1zM1174,606h1v1h-1zM1174,595h1v1h-1zM1174,583h1v1h-1zM1174,572h1v1h-1zM1174,560h1v1h-1zM1174,549h1v1h-1zM1174,537h1v1h-1zM1174,526h1v1h-1zM1209,629h1v1h-1zM1209,618h1v1h-1zM1209,606h1v1h-1zM1209,595h1v1h-1zM1209,583h1v1h-1zM1209,572h1v1h-1zM1209,560h1v1h-1zM1209,549h1v1h-1zM1209,537h1v1h-1zM1209,526h1v1h-1zM1244,629h1v1h-1zM1244,618h1v1h-1zM1244,606h1v1h-1zM1244,595h1v1h-1zM1244,583h1v1h-1zM1244,572h1v1h-1zM1244,560h1v1h-1zM1244,549h1v1h-1zM1244,537h1v1h-1zM1244,526h1v1h-1zM1314,629h1v1h-1zM1314,618h1v1h-1zM1314,606h1v1h-1zM1314,595h1v1h-1zM1314,583h1v1h-1zM1314,572h1v1h-1zM1314,560h1v1h-1zM1314,549h1v1h-1zM1314,537h1v1h-1zM1314,526h1v1h-1zM1349,629h1v1h-1zM1349,618h1v1h-1zM1349,606h1v1h-1zM1349,595h1v1h-1zM1349,583h1v1h-1zM1349,572h1v1h-1zM1349,560h1v1h-1zM1349,549h1v1h-1zM1349,537h1v1h-1zM1349,526h1v1h-1zM1384,629h1v1h-1zM1384,618h1v1h-1zM1384,606h1v1h-1zM1384,595h1v1h-1zM1384,583h1v1h-1zM1384,572h1v1h-1zM1384,560h1v1h-1zM1384,549h1v1h-1zM1384,537h1v1h-1zM1384,526h1v1h-1zM1419,629h1v1h-1zM1419,618h1v1h-1zM1419,606h1v1h-1zM1419,595h1v1h-1zM1419,583h1v1h-1zM1419,572h1v1h-1zM1419,560h1v1h-1zM1419,549h1v1h-1zM1419,537h1v1h-1zM1419,526h1v1h-1zM1489,629h1v1h-1zM1489,618h1v1h-1zM1489,606h1v1h-1zM1489,595h1v1h-1zM1489,583h1v1h-1zM1489,572h1v1h-1zM1489,560h1v1h-1zM1489,549h1v1h-1zM1489,537h1v1h-1zM1489,526h1v1h-1zM1524,629h1v1h-1zM1524,618h1v1h-1zM1524,606h1v1h-1zM1524,595h1v1h-1zM1524,583h1v1h-1zM1524,572h1v1h-1zM1524,560h1v1h-1zM1524,549h1v1h-1zM1524,537h1v1h-1zM1524,526h1v1h-1zM1559,629h1v1h-1zM1559,618h1v1h-1zM1559,606h1v1h-1zM1559,595h1v1h-1zM1559,583h1v1h-1zM1559,572h1v1h-1zM1559,560h1v1h-1zM1559,549h1v1h-1zM1559,537h1v1h-1zM1559,526h1v1h-1zM1594,629h1v1h-1zM1594,618h1v1h-1zM1594,606h1v1h-1zM1594,595h1v1h-1zM1594,583h1v1h-1zM1594,572h1v1h-1zM1594,560h1v1h-1zM1594,549h1v1h-1zM1594,537h1v1h-1zM1594,526h1v1h-1zM1664,629h1v1h-1zM1664,618h1v1h-1zM1664,606h1v1h-1zM1664,595h1v1h-1zM1664,583h1v1h-1zM1664,572h1v1h-1zM1664,560h1v1h-1zM1664,549h1v1h-1zM1664,537h1v1h-1zM1664,526h1v1h-1zM1699,629h1v1h-1zM1699,618h1v1h-1zM1699,606h1v1h-1zM1699,595h1v1h-1zM1699,583h1v1h-1zM1699,572h1v1h-1zM1699,560h1v1h-1zM1699,549h1v1h-1zM1699,537h1v1h-1zM1699,526h1v1h-1zM1734,629h1v1h-1zM1734,618h1v1h-1zM1734,606h1v1h-1zM1734,595h1v1h-1zM1734,583h1v1h-1zM1734,572h1v1h-1zM1734,560h1v1h-1zM1734,549h1v1h-1zM1734,537h1v1h-1zM1734,526h1v1h-1zM20,746h1v1h-1zM20,735h1v1h-1zM20,723h1v1h-1zM20,712h1v1h-1zM20,700h1v1h-1zM20,689h1v1h-1zM20,677h1v1h-1zM20,666h1v1h-1zM20,654h1v1h-1zM20,643h1v1h-1zM90,746h1v1h-1zM90,735h1v1h-1zM90,723h1v1h-1zM90,712h1v1h-1zM90,700h1v1h-1zM90,689h1v1h-1zM90,677h1v1h-1zM90,666h1v1h-1zM90,654h1v1h-1zM90,643h1v1h-1zM125,746h1v1h-1zM125,735h1v1h-1zM125,723h1v1h-1zM125,712h1v1h-1zM125,700h1v1h-1zM125,689h1v1h-1zM125,677h1v1h-1zM125,666h1v1h-1zM125,654h1v1h-1zM125,643h1v1h-1zM160,746h1v1h-1zM160,735h1v1h-1zM160,723h1v1h-1zM160,712h1v1h-1zM160,700h1v1h-1zM160,689h1v1h-1zM160,677h1v1h-1zM160,666h1v1h-1zM160,654h1v1h-1zM160,643h1v1h-1zM195,746h1v1h-1zM195,735h1v1h-1zM195,723h1v1h-1zM195,712h1v1h-1zM195,700h1v1h-1zM195,689h1v1h-1zM195,677h1v1h-1zM195,666h1v1h-1zM195,654h1v1h-1zM195,643h1v1h-1zM265,746h1v1h-1zM265,735h1v1h-1zM265,723h1v1h-1zM265,712h1v1h-1zM265,700h1v1h-1zM265,689h1v1h-1zM265,677h1v1h-1zM265,666h1v1h-1zM265,654h1v1h-1zM265,643h1v1h-1zM300,746h1v1h-1zM300,735h1v1h-1zM300,723h1v1h-1zM300,712h1v1h-1zM300,700h1v1h-1zM300,689h1v1h-1zM300,677h1v1h-1zM300,666h1v1h-1zM300,654h1v1h-1zM300,643h1v1h-1zM335,746h1v1h-1zM335,735h1v1h-1zM335,723h1v1h-1zM335,712h1v1h-1zM335,700h1v1h-1zM335,689h1v1h-1zM335,677h1v1h-1zM335,666h1v1h-1zM335,654h1v1h-1zM335,643h1v1h-1zM370,746h1v1h-1zM370,735h1v1h-1zM370,723h1v1h-1zM370,712h1v1h-1zM370,700h1v1h-1zM370,689h1v1h-1zM370,677h1v1h-1zM370,666h1v1h-1zM370,654h1v1h-1zM370,643h1v1h-1zM440,746h1v1h-1zM440,735h1v1h-1zM440,723h1v1h-1zM440,712h1v1h-1zM440,700h1v1h-1zM440,689h1v1h-1zM440,677h1v1h-1zM440,666h1v1h-1zM440,654h1v1h-1zM440,643h1v1h-1zM475,746h1v1h-1zM475,735h1v1h-1zM475,723h1v1h-1zM475,712h1v1h-1zM475,700h1v1h-1zM475,689h1v1h-1zM475,677h1v1h-1zM475,666h1v1h-1zM475,654h1v1h-1zM475,643h1v1h-1zM510,746h1v1h-1zM510,735h1v1h-1zM510,723h1v1h-1zM510,712h1v1h-1zM510,700h1v1h-1zM510,689h1v1h-1zM510,677h1v1h-1zM510,666h1v1h-1zM510,654h1v1h-1zM510,643h1v1h-1zM545,746h1v1h-1zM545,735h1v1h-1zM545,723h1v1h-1zM545,712h1v1h-1zM545,700h1v1h-1zM545,689h1v1h-1zM545,677h1v1h-1zM545,666h1v1h-1zM545,654h1v1h-1zM545,643h1v1h-1zM615,746h1v1h-1zM615,735h1v1h-1zM615,723h1v1h-1zM615,712h1v1h-1zM615,700h1v1h-1zM615,689h1v1h-1zM615,677h1v1h-1zM615,666h1v1h-1zM615,654h1v1h-1zM615,643h1v1h-1zM650,746h1v1h-1zM650,735h1v1h-1zM650,723h1v1h-1zM650,712h1v1h-1zM650,700h1v1h-1zM650,689h1v1h-1zM650,677h1v1h-1zM650,666h1v1h-1zM650,654h1v1h-1zM650,643h1v1h-1zM685,746h1v1h-1zM685,735h1v1h-1zM685,723h1v1h-1zM685,712h1v1h-1zM685,700h1v1h-1zM685,689h1v1h-1zM685,677h1v1h-1zM685,666h1v1h-1zM685,654h1v1h-1zM685,643h1v1h-1zM720,746h1v1h-1zM720,735h1v1h-1zM720,723h1v1h-1zM720,712h1v1h-1zM720,700h1v1h-1zM720,689h1v1h-1zM720,677h1v1h-1zM720,666h1v1h-1zM720,654h1v1h-1zM720,643h1v1h-1zM790,746h1v1h-1zM790,735h1v1h-1zM790,723h1v1h-1zM790,712h1v1h-1zM790,700h1v1h-1zM790,689h1v1h-1zM790,677h1v1h-1zM790,666h1v1h-1zM790,654h1v1h-1zM790,643h1v1h-1zM825,746h1v1h-1zM825,735h1v1h-1zM825,723h1v1h-1zM825,712h1v1h-1zM825,700h1v1h-1zM825,689h1v1h-1zM825,677h1v1h-1zM825,666h1v1h-1zM825,654h1v1h-1zM825,643h1v1h-1zM860,746h1v1h-1zM860,735h1v1h-1zM860,723h1v1h-1zM860,712h1v1h-1zM860,700h1v1h-1zM860,689h1v1h-1zM860,677h1v1h-1zM860,666h1v1h-1zM860,654h1v1h-1zM860,643h1v1h-1zM894,746h1v1h-1zM894,735h1v1h-1zM894,723h1v1h-1zM894,712h1v1h-1zM894,700h1v1h-1zM894,689h1v1h-1zM894,677h1v1h-1zM894,666h1v1h-1zM894,654h1v1h-1zM894,643h1v1h-1zM964,746h1v1h-1zM964,735h1v1h-1zM964,723h1v1h-1zM964,712h1v1h-1zM964,700h1v1h-1zM964,689h1v1h-1zM964,677h1v1h-1zM964,666h1v1h-1zM964,654h1v1h-1zM964,643h1v1h-1zM999,746h1v1h-1zM999,735h1v1h-1zM999,723h1v1h-1zM999,712h1v1h-1zM999,700h1v1h-1zM999,689h1v1h-1zM999,677h1v1h-1zM999,666h1v1h-1zM999,654h1v1h-1zM999,643h1v1h-1zM1034,746h1v1h-1zM1034,735h1v1h-1zM1034,723h1v1h-1zM1034,712h1v1h-1zM1034,700h1v1h-1zM1034,689h1v1h-1zM1034,677h1v1h-1zM1034,666h1v1h-1zM1034,654h1v1h-1zM1034,643h1v1h-1zM1069,746h1v1h-1zM1069,735h1v1h-1zM1069,723h1v1h-1zM1069,712h1v1h-1zM1069,700h1v1h-1zM1069,689h1v1h-1zM1069,677h1v1h-1zM1069,666h1v1h-1zM1069,654h1v1h-1zM1069,643h1v1h-1zM1139,746h1v1h-1zM1139,735h1v1h-1zM1139,723h1v1h-1zM1139,712h1v1h-1zM1139,700h1v1h-1zM1139,689h1v1h-1zM1139,677h1v1h-1zM1139,666h1v1h-1zM1139,654h1v1h-1zM1139,643h1v1h-1zM1174,746h1v1h-1zM1174,735h1v1h-1zM1174,723h1v1h-1zM1174,712h1v1h-1zM1174,700h1v1h-1zM1174,689h1v1h-1zM1174,677h1v1h-1zM1174,666h1v1h-1zM1174,654h1v1h-1zM1174,643h1v1h-1zM1209,746h1v1h-1zM1209,735h1v1h-1zM1209,723h1v1h-1zM1209,712h1v1h-1zM1209,700h1v1h-1zM1209,689h1v1h-1zM1209,677h1v1h-1zM1209,666h1v1h-1zM1209,654h1v1h-1zM1209,643h1v1h-1zM1244,746h1v1h-1zM1244,735h1v1h-1zM1244,723h1v1h-1zM1244,712h1v1h-1zM1244,700h1v1h-1zM1244,689h1v1h-1zM1244,677h1v1h-1zM1244,666h1v1h-1zM1244,654h1v1h-1zM1244,643h1v1h-1zM1314,746h1v1h-1zM1314,735h1v1h-1zM1314,723h1v1h-1zM1314,712h1v1h-1zM1314,700h1v1h-1zM1314,689h1v1h-1zM1314,677h1v1h-1zM1314,666h1v1h-1zM1314,654h1v1h-1zM1314,643h1v1h-1zM1349,746h1v1h-1zM1349,735h1v1h-1zM1349,723h1v1h-1zM1349,712h1v1h-1zM1349,700h1v1h-1zM1349,689h1v1h-1zM1349,677h1v1h-1zM1349,666h1v1h-1zM1349,654h1v1h-1zM1349,643h1v1h-1zM1384,746h1v1h-1zM1384,735h1v1h-1zM1384,723h1v1h-1zM1384,712h1v1h-1zM1384,700h1v1h-1zM1384,689h1v1h-1zM1384,677h1v1h-1zM1384,666h1v1h-1zM1384,654h1v1h-1zM1384,643h1v1h-1zM1419,746h1v1h-1zM1419,735h1v1h-1zM1419,723h1v1h-1zM1419,712h1v1h-1zM1419,700h1v1h-1zM1419,689h1v1h-1zM1419,677h1v1h-1zM1419,666h1v1h-1zM1419,654h1v1h-1zM1419,643h1v1h-1zM1489,746h1v1h-1zM1489,735h1v1h-1zM1489,723h1v1h-1zM1489,712h1v1h-1zM1489,700h1v1h-1zM1489,689h1v1h-1zM1489,677h1v1h-1zM1489,666h1v1h-1zM1489,654h1v1h-1zM1489,643h1v1h-1zM1524,746h1v1h-1zM1524,735h1v1h-1zM1524,723h1v1h-1zM1524,712h1v1h-1zM1524,700h1v1h-1zM1524,689h1v1h-1zM1524,677h1v1h-1zM1524,666h1v1h-1zM1524,654h1v1h-1zM1524,643h1v1h-1zM1559,746h1v1h-1zM1559,735h1v1h-1zM1559,723h1v1h-1zM1559,712h1v1h-1zM1559,700h1v1h-1zM1559,689h1v1h-1zM1559,677h1v1h-1zM1559,666h1v1h-1zM1559,654h1v1h-1zM1559,643h1v1h-1zM1594,746h1v1h-1zM1594,735h1v1h-1zM1594,723h1v1h-1zM1594,712h1v1h-1zM1594,700h1v1h-1zM1594,689h1v1h-1zM1594,677h1v1h-1zM1594,666h1v1h-1zM1594,654h1v1h-1zM1594,643h1v1h-1zM1664,746h1v1h-1zM1664,735h1v1h-1zM1664,723h1v1h-1zM1664,712h1v1h-1zM1664,700h1v1h-1zM1664,689h1v1h-1zM1664,677h1v1h-1zM1664,666h1v1h-1zM1664,654h1v1h-1zM1664,643h1v1h-1zM1699,746h1v1h-1zM1699,735h1v1h-1zM1699,723h1v1h-1zM1699,712h1v1h-1zM1699,700h1v1h-1zM1699,689h1v1h-1zM1699,677h1v1h-1zM1699,666h1v1h-1zM1699,654h1v1h-1zM1699,643h1v1h-1zM1734,746h1v1h-1zM1734,735h1v1h-1zM1734,723h1v1h-1zM1734,712h1v1h-1zM1734,700h1v1h-1zM1734,689h1v1h-1zM1734,677h1v1h-1zM1734,666h1v1h-1zM1734,654h1v1h-1zM1734,643h1v1h-1zM20,863h1v1h-1zM20,852h1v1h-1zM20,840h1v1h-1zM20,829h1v1h-1zM20,817h1v1h-1zM20,806h1v1h-1zM20,794h1v1h-1zM20,783h1v1h-1zM20,771h1v1h-1zM20,760h1v1h-1zM90,863h1v1h-1zM90,852h1v1h-1zM90,840h1v1h-1zM90,829h1v1h-1zM90,817h1v1h-1zM90,806h1v1h-1zM90,794h1v1h-1zM90,783h1v1h-1zM90,771h1v1h-1zM90,760h1v1h-1zM125,863h1v1h-1zM125,852h1v1h-1zM125,840h1v1h-1zM125,829h1v1h-1zM125,817h1v1h-1zM125,806h1v1h-1zM125,794h1v1h-1zM125,783h1v1h-1zM125,771h1v1h-1zM125,760h1v1h-1zM160,863h1v1h-1zM160,852h1v1h-1zM160,840h1v1h-1zM160,829h1v1h-1zM160,817h1v1h-1zM160,806h1v1h-1zM160,794h1v1h-1zM160,783h1v1h-1zM160,771h1v1h-1zM160,760h1v1h-1zM195,863h1v1h-1zM195,852h1v1h-1zM195,840h1v1h-1zM195,829h1v1h-1zM195,817h1v1h-1zM195,806h1v1h-1zM195,794h1v1h-1zM195,783h1v1h-1zM195,771h1v1h-1zM195,760h1v1h-1zM265,863h1v1h-1zM265,852h1v1h-1zM265,840h1v1h-1zM265,829h1v1h-1zM265,817h1v1h-1zM265,806h1v1h-1zM265,794h1v1h-1zM265,783h1v1h-1zM265,771h1v1h-1zM265,760h1v1h-1zM300,863h1v1h-1zM300,852h1v1h-1zM300,840h1v1h-1zM300,829h1v1h-1zM300,817h1v1h-1zM300,806h1v1h-1zM300,794h1v1h-1zM300,783h1v1h-1zM300,771h1v1h-1zM300,760h1v1h-1zM335,863h1v1h-1zM335,852h1v1h-1zM335,840h1v1h-1zM335,829h1v1h-1zM335,817h1v1h-1zM335,806h1v1h-1zM335,794h1v1h-1zM335,783h1v1h-1zM335,771h1v1h-1zM335,760h1v1h-1zM370,863h1v1h-1zM370,852h1v1h-1zM370,840h1v1h-1zM370,829h1v1h-1zM370,817h1v1h-1zM370,806h1v1h-1zM370,794h1v1h-1zM370,783h1v1h-1zM370,771h1v1h-1zM370,760h1v1h-1zM440,863h1v1h-1zM440,852h1v1h-1zM440,840h1v1h-1zM440,829h1v1h-1zM440,817h1v1h-1zM440,806h1v1h-1zM440,794h1v1h-1zM440,783h1v1h-1zM440,771h1v1h-1zM440,760h1v1h-1zM475,863h1v1h-1zM475,852h1v1h-1zM475,840h1v1h-1zM475,829h1v1h-1zM475,817h1v1h-1zM475,806h1v1h-1zM475,794h1v1h-1zM475,783h1v1h-1zM475,771h1v1h-1zM475,760h1v1h-1zM510,863h1v1h-1zM510,852h1v1h-1zM510,840h1v1h-1zM510,829h1v1h-1zM510,817h1v1h-1zM510,806h1v1h-1zM510,794h1v1h-1zM510,783h1v1h-1zM510,771h1v1h-1zM510,760h1v1h-1zM545,863h1v1h-1zM545,852h1v1h-1zM545,840h1v1h-1zM545,829h1v1h-1zM545,817h1v1h-1zM545,806h1v1h-1zM545,794h1v1h-1zM545,783h1v1h-1zM545,771h1v1h-1zM545,760h1v1h-1zM615,863h1v1h-1zM615,852h1v1h-1zM615,840h1v1h-1zM615,829h1v1h-1zM615,817h1v1h-1zM615,806h1v1h-1zM615,794h1v1h-1zM615,783h1v1h-1zM615,771h1v1h-1zM615,760h1v1h-1zM650,863h1v1h-1zM650,852h1v1h-1zM650,840h1v1h-1zM650,829h1v1h-1zM650,817h1v1h-1zM650,806h1v1h-1zM650,794h1v1h-1zM650,783h1v1h-1zM650,771h1v1h-1zM650,760h1v1h-1zM685,863h1v1h-1zM685,852h1v1h-1zM685,840h1v1h-1zM685,829h1v1h-1zM685,817h1v1h-1zM685,806h1v1h-1zM685,794h1v1h-1zM685,783h1v1h-1zM685,771h1v1h-1zM685,760h1v1h-1zM720,863h1v1h-1zM720,852h1v1h-1zM720,840h1v1h-1zM720,829h1v1h-1zM720,817h1v1h-1zM720,806h1v1h-1zM720,794h1v1h-1zM720,783h1v1h-1zM720,771h1v1h-1zM720,760h1v1h-1zM790,863h1v1h-1zM790,852h1v1h-1zM790,840h1v1h-1zM790,829h1v1h-1zM790,817h1v1h-1zM790,806h1v1h-1zM790,794h1v1h-1zM790,783h1v1h-1zM790,771h1v1h-1zM790,760h1v1h-1zM825,863h1v1h-1zM825,852h1v1h-1zM825,840h1v1h-1zM825,829h1v1h-1zM825,817h1v1h-1zM825,806h1v1h-1zM825,794h1v1h-1zM825,783h1v1h-1zM825,771h1v1h-1zM825,760h1v1h-1zM860,863h1v1h-1zM860,852h1v1h-1zM860,840h1v1h-1zM860,829h1v1h-1zM860,817h1v1h-1zM860,806h1v1h-1zM860,794h1v1h-1zM860,783h1v1h-1zM860,771h1v1h-1zM860,760h1v1h-1zM894,863h1v1h-1zM894,852h1v1h-1zM894,840h1v1h-1zM894,829h1v1h-1zM894,817h1v1h-1zM894,806h1v1h-1zM894,794h1v1h-1zM894,783h1v1h-1zM894,771h1v1h-1zM894,760h1v1h-1zM964,863h1v1h-1zM964,852h1v1h-1zM964,840h1v1h-1zM964,829h1v1h-1zM964,817h1v1h-1zM964,806h1v1h-1zM964,794h1v1h-1zM964,783h1v1h-1zM964,771h1v1h-1zM964,760h1v1h-1zM999,863h1v1h-1zM999,852h1v1h-1zM999,840h1v1h-1zM999,829h1v1h-1zM999,817h1v1h-1zM999,806h1v1h-1zM999,794h1v1h-1zM999,783h1v1h-1zM999,771h1v1h-1zM999,760h1v1h-1zM1034,863h1v1h-1zM1034,852h1v1h-1zM1034,840h1v1h-1zM1034,829h1v1h-1zM1034,817h1v1h-1zM1034,806h1v1h-1zM1034,794h1v1h-1zM1034,783h1v1h-1zM1034,771h1v1h-1zM1034,760h1v1h-1zM1069,863h1v1h-1zM1069,852h1v1h-1zM1069,840h1v1h-1zM1069,829h1v1h-1zM1069,817h1v1h-1zM1069,806h1v1h-1zM1069,794h1v1h-1zM1069,783h1v1h-1zM1069,771h1v1h-1zM1069,760h1v1h-1zM1139,863h1v1h-1zM1139,852h1v1h-1zM1139,840h1v1h-1zM1139,829h1v1h-1zM1139,817h1v1h-1zM1139,806h1v1h-1zM1139,794h1v1h-1zM1139,783h1v1h-1zM1139,771h1v1h-1zM1139,760h1v1h-1zM1174,863h1v1h-1zM1174,852h1v1h-1zM1174,840h1v1h-1zM1174,829h1v1h-1zM1174,817h1v1h-1zM1174,806h1v1h-1zM1174,794h1v1h-1zM1174,783h1v1h-1zM1174,771h1v1h-1zM1174,760h1v1h-1zM1209,863h1v1h-1zM1209,852h1v1h-1zM1209,840h1v1h-1zM1209,829h1v1h-1zM1209,817h1v1h-1zM1209,806h1v1h-1zM1209,794h1v1h-1zM1209,783h1v1h-1zM1209,771h1v1h-1zM1209,760h1v1h-1zM1244,863h1v1h-1zM1244,852h1v1h-1zM1244,840h1v1h-1zM1244,829h1v1h-1zM1244,817h1v1h-1zM1244,806h1v1h-1zM1244,794h1v1h-1zM1244,783h1v1h-1zM1244,771h1v1h-1zM1244,760h1v1h-1zM1314,863h1v1h-1zM1314,852h1v1h-1zM1314,840h1v1h-1zM1314,829h1v1h-1zM1314,817h1v1h-1zM1314,806h1v1h-1zM1314,794h1v1h-1zM1314,783h1v1h-1zM1314,771h1v1h-1zM1314,760h1v1h-1zM1349,863h1v1h-1zM1349,852h1v1h-1zM1349,840h1v1h-1zM1349,829h1v1h-1zM1349,817h1v1h-1zM1349,806h1v1h-1zM1349,794h1v1h-1zM1349,783h1v1h-1zM1349,771h1v1h-1zM1349,760h1v1h-1zM1384,863h1v1h-1zM1384,852h1v1h-1zM1384,840h1v1h-1zM1384,829h1v1h-1zM1384,817h1v1h-1zM1384,806h1v1h-1zM1384,794h1v1h-1zM1384,783h1v1h-1zM1384,771h1v1h-1zM1384,760h1v1h-1zM1419,863h1v1h-1zM1419,852h1v1h-1zM1419,840h1v1h-1zM1419,829h1v1h-1zM1419,817h1v1h-1zM1419,806h1v1h-1zM1419,794h1v1h-1zM1419,783h1v1h-1zM1419,771h1v1h-1zM1419,760h1v1h-1zM1489,863h1v1h-1zM1489,852h1v1h-1zM1489,840h1v1h-1zM1489,829h1v1h-1zM1489,817h1v1h-1zM1489,806h1v1h-1zM1489,794h1v1h-1zM1489,783h1v1h-1zM1489,771h1v1h-1zM1489,760h1v1h-1zM1524,863h1v1h-1zM1524,852h1v1h-1zM1524,840h1v1h-1zM1524,829h1v1h-1zM1524,817h1v1h-1zM1524,806h1v1h-1zM1524,794h1v1h-1zM1524,783h1v1h-1zM1524,771h1v1h-1zM1524,760h1v1h-1zM1559,863h1v1h-1zM1559,852h1v1h-1zM1559,840h1v1h-1zM1559,829h1v1h-1zM1559,817h1v1h-1zM1559,806h1v1h-1zM1559,794h1v1h-1zM1559,783h1v1h-1zM1559,771h1v1h-1zM1559,760h1v1h-1zM1594,863h1v1h-1zM1594,852h1v1h-1zM1594,840h1v1h-1zM1594,829h1v1h-1zM1594,817h1v1h-1zM1594,806h1v1h-1zM1594,794h1v1h-1zM1594,783h1v1h-1zM1594,771h1v1h-1zM1594,760h1v1h-1zM1664,863h1v1h-1zM1664,852h1v1h-1zM1664,840h1v1h-1zM1664,829h1v1h-1zM1664,817h1v1h-1zM1664,806h1v1h-1zM1664,794h1v1h-1zM1664,783h1v1h-1zM1664,771h1v1h-1zM1664,760h1v1h-1zM1699,863h1v1h-1zM1699,852h1v1h-1zM1699,840h1v1h-1zM1699,829h1v1h-1zM1699,817h1v1h-1zM1699,806h1v1h-1zM1699,794h1v1h-1zM1699,783h1v1h-1zM1699,771h1v1h-1zM1699,760h1v1h-1zM1734,863h1v1h-1zM1734,852h1v1h-1zM1734,840h1v1h-1zM1734,829h1v1h-1zM1734,817h1v1h-1zM1734,806h1v1h-1zM1734,794h1v1h-1zM1734,783h1v1h-1zM1734,771h1v1h-1zM1734,760h1v1h-1zM20,990h1v1h-1zM20,978h1v1h-1zM20,967h1v1h-1zM20,955h1v1h-1zM20,944h1v1h-1zM20,932h1v1h-1zM20,921h1v1h-1zM20,909h1v1h-1zM20,898h1v1h-1zM20,886h1v1h-1zM20,875h1v1h-1zM90,990h1v1h-1zM90,978h1v1h-1zM90,967h1v1h-1zM90,955h1v1h-1zM90,944h1v1h-1zM90,932h1v1h-1zM90,921h1v1h-1zM90,909h1v1h-1zM90,898h1v1h-1zM90,886h1v1h-1zM90,875h1v1h-1zM125,990h1v1h-1zM125,978h1v1h-1zM125,967h1v1h-1zM125,955h1v1h-1zM125,944h1v1h-1zM125,932h1v1h-1zM125,921h1v1h-1zM125,909h1v1h-1zM125,898h1v1h-1zM125,886h1v1h-1zM125,875h1v1h-1zM160,990h1v1h-1zM160,978h1v1h-1zM160,967h1v1h-1zM160,955h1v1h-1zM160,944h1v1h-1zM160,932h1v1h-1zM160,921h1v1h-1zM160,909h1v1h-1zM160,898h1v1h-1zM160,886h1v1h-1zM160,875h1v1h-1zM195,990h1v1h-1zM195,978h1v1h-1zM195,967h1v1h-1zM195,955h1v1h-1zM195,944h1v1h-1zM195,932h1v1h-1zM195,921h1v1h-1zM195,909h1v1h-1zM195,898h1v1h-1zM195,886h1v1h-1zM195,875h1v1h-1zM265,990h1v1h-1zM265,978h1v1h-1zM265,967h1v1h-1zM265,955h1v1h-1zM265,944h1v1h-1zM265,932h1v1h-1zM265,921h1v1h-1zM265,909h1v1h-1zM265,898h1v1h-1zM265,886h1v1h-1zM265,875h1v1h-1zM300,990h1v1h-1zM300,978h1v1h-1zM300,967h1v1h-1zM300,955h1v1h-1zM300,944h1v1h-1zM300,932h1v1h-1zM300,921h1v1h-1zM300,909h1v1h-1zM300,898h1v1h-1zM300,886h1v1h-1zM300,875h1v1h-1zM335,990h1v1h-1zM335,978h1v1h-1zM335,967h1v1h-1zM335,955h1v1h-1zM335,944h1v1h-1zM335,932h1v1h-1zM335,921h1v1h-1zM335,909h1v1h-1zM335,898h1v1h-1zM335,886h1v1h-1zM335,875h1v1h-1zM370,990h1v1h-1zM370,978h1v1h-1zM370,967h1v1h-1zM370,955h1v1h-1zM370,944h1v1h-1zM370,932h1v1h-1zM370,921h1v1h-1zM370,909h1v1h-1zM370,898h1v1h-1zM370,886h1v1h-1zM370,875h1v1h-1zM440,990h1v1h-1zM440,978h1v1h-1zM440,967h1v1h-1zM440,955h1v1h-1zM440,944h1v1h-1zM440,932h1v1h-1zM440,921h1v1h-1zM440,909h1v1h-1zM440,898h1v1h-1zM440,886h1v1h-1zM440,875h1v1h-1zM475,990h1v1h-1zM475,978h1v1h-1zM475,967h1v1h-1zM475,955h1v1h-1zM475,944h1v1h-1zM475,932h1v1h-1zM475,921h1v1h-1zM475,909h1v1h-1zM475,898h1v1h-1zM475,886h1v1h-1zM475,875h1v1h-1zM510,990h1v1h-1zM510,978h1v1h-1zM510,967h1v1h-1zM510,955h1v1h-1zM510,944h1v1h-1zM510,932h1v1h-1zM510,921h1v1h-1zM510,909h1v1h-1zM510,898h1v1h-1zM510,886h1v1h-1zM510,875h1v1h-1zM545,990h1v1h-1zM545,978h1v1h-1zM545,967h1v1h-1zM545,955h1v1h-1zM545,944h1v1h-1zM545,932h1v1h-1zM545,921h1v1h-1zM545,909h1v1h-1zM545,898h1v1h-1zM545,886h1v1h-1zM545,875h1v1h-1zM615,990h1v1h-1zM615,978h1v1h-1zM615,967h1v1h-1zM615,955h1v1h-1zM615,944h1v1h-1zM615,932h1v1h-1zM615,921h1v1h-1zM615,909h1v1h-1zM615,898h1v1h-1zM615,886h1v1h-1zM615,875h1v1h-1zM650,990h1v1h-1zM650,978h1v1h-1zM650,967h1v1h-1zM650,955h1v1h-1zM650,944h1v1h-1zM650,932h1v1h-1zM650,921h1v1h-1zM650,909h1v1h-1zM650,898h1v1h-1zM650,886h1v1h-1zM650,875h1v1h-1zM685,990h1v1h-1zM685,978h1v1h-1zM685,967h1v1h-1zM685,955h1v1h-1zM685,944h1v1h-1zM685,932h1v1h-1zM685,921h1v1h-1zM685,909h1v1h-1zM685,898h1v1h-1zM685,886h1v1h-1zM685,875h1v1h-1zM720,990h1v1h-1zM720,978h1v1h-1zM720,967h1v1h-1zM720,955h1v1h-1zM720,944h1v1h-1zM720,932h1v1h-1zM720,921h1v1h-1zM720,909h1v1h-1zM720,898h1v1h-1zM720,886h1v1h-1zM720,875h1v1h-1zM790,990h1v1h-1zM790,978h1v1h-1zM790,967h1v1h-1zM790,955h1v1h-1zM790,944h1v1h-1zM790,932h1v1h-1zM790,921h1v1h-1zM790,909h1v1h-1zM790,898h1v1h-1zM790,886h1v1h-1zM790,875h1v1h-1zM825,990h1v1h-1zM825,978h1v1h-1zM825,967h1v1h-1zM825,955h1v1h-1zM825,944h1v1h-1zM825,932h1v1h-1zM825,921h1v1h-1zM825,909h1v1h-1zM825,898h1v1h-1zM825,886h1v1h-1zM825,875h1v1h-1zM860,990h1v1h-1zM860,978h1v1h-1zM860,967h1v1h-1zM860,955h1v1h-1zM860,944h1v1h-1zM860,932h1v1h-1zM860,921h1v1h-1zM860,909h1v1h-1zM860,898h1v1h-1zM860,886h1v1h-1zM860,875h1v1h-1zM894,990h1v1h-1zM894,978h1v1h-1zM894,967h1v1h-1zM894,955h1v1h-1zM894,944h1v1h-1zM894,932h1v1h-1zM894,921h1v1h-1zM894,909h1v1h-1zM894,898h1v1h-1zM894,886h1v1h-1zM894,875h1v1h-1zM964,990h1v1h-1zM964,978h1v1h-1zM964,967h1v1h-1zM964,955h1v1h-1zM964,944h1v1h-1zM964,932h1v1h-1zM964,921h1v1h-1zM964,909h1v1h-1zM964,898h1v1h-1zM964,886h1v1h-1zM964,875h1v1h-1zM999,990h1v1h-1zM999,978h1v1h-1zM999,967h1v1h-1zM999,955h1v1h-1zM999,944h1v1h-1zM999,932h1v1h-1zM999,921h1v1h-1zM999,909h1v1h-1zM999,898h1v1h-1zM999,886h1v1h-1zM999,875h1v1h-1zM1034,990h1v1h-1zM1034,978h1v1h-1zM1034,967h1v1h-1zM1034,955h1v1h-1zM1034,944h1v1h-1zM1034,932h1v1h-1zM1034,921h1v1h-1zM1034,909h1v1h-1zM1034,898h1v1h-1zM1034,886h1v1h-1zM1034,875h1v1h-1zM1069,990h1v1h-1zM1069,978h1v1h-1zM1069,967h1v1h-1zM1069,955h1v1h-1zM1069,944h1v1h-1zM1069,932h1v1h-1zM1069,921h1v1h-1zM1069,909h1v1h-1zM1069,898h1v1h-1zM1069,886h1v1h-1zM1069,875h1v1h-1zM1139,990h1v1h-1zM1139,978h1v1h-1zM1139,967h1v1h-1zM1139,955h1v1h-1zM1139,944h1v1h-1zM1139,932h1v1h-1zM1139,921h1v1h-1zM1139,909h1v1h-1zM1139,898h1v1h-1zM1139,886h1v1h-1zM1139,875h1v1h-1zM1174,990h1v1h-1zM1174,978h1v1h-1zM1174,967h1v1h-1zM1174,955h1v1h-1zM1174,944h1v1h-1zM1174,932h1v1h-1zM1174,921h1v1h-1zM1174,909h1v1h-1zM1174,898h1v1h-1zM1174,886h1v1h-1zM1174,875h1v1h-1zM1209,990h1v1h-1zM1209,978h1v1h-1zM1209,967h1v1h-1zM1209,955h1v1h-1zM1209,944h1v1h-1zM1209,932h1v1h-1zM1209,921h1v1h-1zM1209,909h1v1h-1zM1209,898h1v1h-1zM1209,886h1v1h-1zM1209,875h1v1h-1zM1244,990h1v1h-1zM1244,978h1v1h-1zM1244,967h1v1h-1zM1244,955h1v1h-1zM1244,944h1v1h-1zM1244,932h1v1h-1zM1244,921h1v1h-1zM1244,909h1v1h-1zM1244,898h1v1h-1zM1244,886h1v1h-1zM1244,875h1v1h-1zM1314,990h1v1h-1zM1314,978h1v1h-1zM1314,967h1v1h-1zM1314,955h1v1h-1zM1314,944h1v1h-1zM1314,932h1v1h-1zM1314,921h1v1h-1zM1314,909h1v1h-1zM1314,898h1v1h-1zM1314,886h1v1h-1zM1314,875h1v1h-1zM1349,990h1v1h-1zM1349,978h1v1h-1zM1349,967h1v1h-1zM1349,955h1v1h-1zM1349,944h1v1h-1zM1349,932h1v1h-1zM1349,921h1v1h-1zM1349,909h1v1h-1zM1349,898h1v1h-1zM1349,886h1v1h-1zM1349,875h1v1h-1zM1384,990h1v1h-1zM1384,978h1v1h-1zM1384,967h1v1h-1zM1384,955h1v1h-1zM1384,944h1v1h-1zM1384,932h1v1h-1zM1384,921h1v1h-1zM1384,909h1v1h-1zM1384,898h1v1h-1zM1384,886h1v1h-1zM1384,875h1v1h-1zM1419,990h1v1h-1zM1419,978h1v1h-1zM1419,967h1v1h-1zM1419,955h1v1h-1zM1419,944h1v1h-1zM1419,932h1v1h-1zM1419,921h1v1h-1zM1419,909h1v1h-1zM1419,898h1v1h-1zM1419,886h1v1h-1zM1419,875h1v1h-1zM1489,990h1v1h-1zM1489,978h1v1h-1zM1489,967h1v1h-1zM1489,955h1v1h-1zM1489,944h1v1h-1zM1489,932h1v1h-1zM1489,921h1v1h-1zM1489,909h1v1h-1zM1489,898h1v1h-1zM1489,886h1v1h-1zM1489,875h1v1h-1zM1524,990h1v1h-1zM1524,978h1v1h-1zM1524,967h1v1h-1zM1524,955h1v1h-1zM1524,944h1v1h-1zM1524,932h1v1h-1zM1524,921h1v1h-1zM1524,909h1v1h-1zM1524,898h1v1h-1zM1524,886h1v1h-1zM1524,875h1v1h-1zM1559,990h1v1h-1zM1559,978h1v1h-1zM1559,967h1v1h-1zM1559,955h1v1h-1zM1559,944h1v1h-1zM1559,932h1v1h-1zM1559,921h1v1h-1zM1559,909h1v1h-1zM1559,898h1v1h-1zM1559,886h1v1h-1zM1559,875h1v1h-1zM1594,990h1v1h-1zM1594,978h1v1h-1zM1594,967h1v1h-1zM1594,955h1v1h-1zM1594,944h1v1h-1zM1594,932h1v1h-1zM1594,921h1v1h-1zM1594,909h1v1h-1zM1594,898h1v1h-1zM1594,886h1v1h-1zM1594,875h1v1h-1zM1664,990h1v1h-1zM1664,978h1v1h-1zM1664,967h1v1h-1zM1664,955h1v1h-1zM1664,944h1v1h-1zM1664,932h1v1h-1zM1664,921h1v1h-1zM1664,909h1v1h-1zM1664,898h1v1h-1zM1664,886h1v1h-1zM1664,875h1v1h-1zM1699,990h1v1h-1zM1699,978h1v1h-1zM1699,967h1v1h-1zM1699,955h1v1h-1zM1699,944h1v1h-1zM1699,932h1v1h-1zM1699,921h1v1h-1zM1699,909h1v1h-1zM1699,898h1v1h-1zM1699,886h1v1h-1zM1699,875h1v1h-1zM1734,990h1v1h-1zM1734,978h1v1h-1zM1734,967h1v1h-1zM1734,955h1v1h-1zM1734,944h1v1h-1zM1734,932h1v1h-1zM1734,921h1v1h-1zM1734,909h1v1h-1zM1734,898h1v1h-1zM1734,886h1v1h-1zM1734,875h1v1h-1z" fill="#3a3a3a"/>
<line x1="230.5" y1="58" x2="230.5" y2="993" stroke="#404040" stroke-width="1" stroke-dasharray="1 1"/>
<line x1="405.5" y1="58" x2="405.5" y2="993" stroke="#404040" stroke-width="1" stroke-dasharray="1 1"/>
<line x1="580.5" y1="58" x2="580.5" y2="993" stroke="#404040" stroke-width="1" stroke-dasharray="1 1"/>
<line x1="755.5" y1="58" x2="755.5" y2="993" stroke="#404040" stroke-width="1" stroke-dasharray="1 1"/>
<line x1="929.5" y1="58" x2="929.5" y2="993" stroke="#404040" stroke-width="1" stroke-dasharray="1 1"/>
<line x1="1104.5" y1="58" x2="1104.5" y2="993" stroke="#404040" stroke-width="1" stroke-dasharray="1 1"/>
<line x1="1279.5" y1="58" x2="1279.5" y2="993" stroke="#404040" stroke-width="1" stroke-dasharray="1 1"/>
<line x1="1454.5" y1="58" x2="1454.5" y2="993" stroke="#404040" stroke-width="1" stroke-dasharray="1 1"/>
<line x1="1629.5" y1="58" x2="1629.5" y2="993" stroke="#404040" stroke-width="1" stroke-dasharray="1 1"/>
<line x1="55.5" y1="68" x2="55.5" y2="993" stroke="#333333" stroke-width="1" stroke-dasharray="5 5"/>
<g clip-path="url(#wv)">
<polyline points="3.0,160.5 319.0,160.5 320.0,163.0 321.0,156.5 326.0,153.0 334.0,148.6 342.0,145.0 350.0,142.4 365.6,139.3 375.0,137.7 376.0,136.0 384.4,134.6 406.0,132.4 431.0,130.5 450.0,129.3 473.0,128.6 477.0,130.0 481.0,134.6 487.5,136.8 500.0,139.9 503.0,142.4 506.1,142.4 509.2,142.7 512.3,143.2 515.4,142.7 518.5,142.9 521.6,143.0 524.7,142.7 527.8,143.1 530.9,143.4 534.0,143.3 537.2,143.7 540.3,142.9 543.5,143.2 546.7,143.0 549.8,144.0 553.0,143.9 556.2,143.2 559.3,144.3 562.5,144.4 565.7,144.1 568.8,144.1 572.0,144.0 575.1,143.5 578.2,143.2 581.3,143.7 584.5,143.0 587.6,143.0 590.7,143.0 593.8,142.6 596.9,143.0 600.0,142.8 603.2,143.2 606.3,142.7 609.4,142.7 612.5,142.4 615.6,142.4 618.8,142.5 621.9,142.3 625.0,142.0 628.2,142.8 631.3,142.8 634.4,142.6 637.6,142.4 640.7,141.9 643.8,141.8 646.9,141.8 650.1,141.5 653.2,142.3 656.3,141.8 659.5,142.3 662.6,141.8 665.7,142.4 668.9,142.2 672.0,141.8 673.4,144.9 676.4,144.3 679.5,144.6 682.5,145.5 685.5,145.0 688.6,145.6 691.6,145.0 694.6,144.6 697.7,145.3 700.7,145.5 703.7,144.9 706.7,144.8 709.8,145.1 712.8,145.9 715.8,145.7 718.9,144.9 721.9,145.1 724.9,145.0 728.0,144.9 731.0,145.5 734.2,145.1 737.4,143.6 740.6,143.4 743.8,142.5 747.0,141.8 750.0,141.4 753.0,142.0 756.0,141.3 759.0,141.9 762.0,141.2 765.0,141.5 768.0,141.3 771.0,141.3 774.0,142.1 777.0,141.9 780.0,141.3 783.0,141.9 786.0,141.1 789.0,141.3 792.0,141.8 795.0,141.5 798.0,140.8 801.0,141.9 804.0,140.9 807.0,140.9 810.0,141.5 813.0,141.0 816.0,140.9 819.0,140.6 822.0,140.6 825.0,141.2 828.0,140.7 831.0,141.0 834.1,141.3 837.3,141.1 840.5,141.4 843.6,142.1 846.8,141.7 849.9,141.9 853.0,142.4 856.2,141.7 859.4,141.8 862.5,142.4 865.6,143.0 868.8,142.9 871.9,142.3 875.0,142.3 878.1,143.1 881.2,143.4 884.4,142.6 887.5,143.5 890.6,143.5 893.8,143.3 896.9,143.1 900.0,143.3 905.0,145.4 912.0,145.4 914.2,143.3 916.7,142.5 921.2,142.5 922.9,146.2 924.6,146.2 928.3,143.3 933.3,146.2 940.0,143.3 944.2,143.3 946.2,147.5 949.6,143.3 955.0,143.3 958.3,146.2 959.6,153.3 961.7,146.7 963.3,141.7 965.8,144.2 970.0,141.7 978.3,141.2 982.5,146.7 988.3,142.5 992.5,147.1 999.2,142.5 1004.2,149.2 1010.0,143.8 1012.5,142.5 1019.2,141.7 1020.4,150.0 1024.2,144.2 1030.8,143.3 1034.6,146.2 1034.6,161.2 1035.5,146.0 1036.7,142.5 1040.8,145.8 1044.2,142.5 1047.1,147.5 1049.2,143.8 1052.1,142.5 1055.4,143.3 1056.2,147.5 1060.0,144.2 1065.0,142.5 1067.1,142.5 1068.3,149.2 1068.3,161.2 1069.0,149.0 1071.7,145.0 1075.0,142.9 1076.2,153.8 1076.7,144.6 1080.8,140.4 1084.2,143.3 1085.4,147.5 1089.2,142.5 1093.3,141.7 1094.6,147.5 1095.8,147.5 1100.8,142.9 1105.0,142.1 1105.8,161.2 1106.5,150.0 1107.5,148.3 1109.2,142.9 1110.8,145.0 1114.2,143.3 1115.8,147.5 1117.5,143.3 1122.5,143.8 1125.0,148.3 1127.1,145.4 1135.0,145.4 1135.4,157.5 1138.3,142.5 1140.8,147.5 1141.5,142.5 1145.4,140.4 1148.3,142.1 1152.5,143.8 1155.0,149.2 1159.2,146.7 1165.0,147.5 1166.7,149.2 1171.7,147.5 1175.0,150.0 1180.0,147.9 1184.4,146.4 1193.3,146.4 1194.0,148.5 1197.8,148.5 1198.5,144.4 1200.7,141.9 1201.9,135.9 1202.6,120.4 1203.7,106.3 1204.8,98.5 1205.6,98.9 1208.5,104.4 1208.5,107.4 1211.9,111.1 1215.6,118.1 1218.5,129.3 1222.2,137.0 1225.2,141.1 1229.6,145.2 1237.8,149.3 1244.4,150.7 1252.6,152.6 1257.0,155.2 1263.7,154.4 1271.9,154.4 1272.6,155.2 1287.4,155.2 1292.6,152.4 1318.8,152.4 1350.0,155.5 1431.0,156.8 1500.0,157.4 1751.0,157.5" fill="none" stroke="#000000" stroke-width="1.15" stroke-linejoin="round" />
<polyline points="3.0,221.5 55.0,221.5 56.0,182.5 57.0,203.0 58.0,212.0 60.0,218.0 65.0,220.0 84.0,221.6 88.0,221.4 92.0,221.4 96.0,222.1 100.0,221.7 104.0,222.1 108.0,221.9 112.0,222.3 116.0,222.2 120.0,222.1 124.0,222.1 128.0,222.5 132.0,222.2 136.0,222.3 140.0,222.7 144.0,222.9 148.0,222.8 152.0,222.7 156.0,223.2 160.0,222.8 164.0,222.7 168.0,223.0 172.0,223.2 176.0,223.0 180.0,223.1 184.0,223.3 188.0,223.5 192.0,223.3 196.0,223.5 200.0,224.0 204.0,224.1 208.0,223.9 212.0,224.0 216.0,224.0 220.0,223.8 224.0,223.8 228.0,223.9 232.0,224.6 236.0,224.5 240.0,224.7 244.0,224.2 248.0,224.7 252.0,224.6 256.0,224.9 260.0,224.7 264.0,225.2 268.0,224.6 272.0,225.0 276.0,225.2 280.0,225.4 284.0,225.4 288.0,225.4 292.0,225.6 296.0,225.7 300.0,225.5 304.5,225.5 309.0,225.9 313.5,226.2 318.0,226.0 318.5,215.0 319.4,238.7 320.3,217.0 321.2,236.2 322.1,219.0 323.0,233.6 323.9,221.0 324.8,231.1 325.7,223.0 326.6,228.5 334.0,226.3 338.1,226.1 342.1,226.4 346.1,226.6 350.1,226.4 354.2,226.5 358.2,226.4 362.2,226.7 366.3,226.7 370.3,226.5 374.3,226.9 378.4,227.2 382.4,227.2 386.4,227.2 390.4,227.0 394.5,227.4 398.5,227.3 402.5,227.3 406.6,227.7 410.6,227.2 414.6,227.7 418.7,227.3 422.7,227.8 426.7,227.8 430.7,227.7 434.8,228.1 438.8,228.0 442.8,228.2 446.9,228.5 450.9,228.1 454.9,228.0 459.0,228.2 463.0,228.6 467.0,228.3 471.0,228.4 475.1,229.0 479.1,228.9 483.1,228.8 487.2,229.2 491.2,228.9 495.2,229.2 499.3,228.9 503.3,229.2 507.3,229.5 511.3,229.6 515.4,229.7 519.4,229.4 523.4,229.6 527.5,229.5 531.5,229.5 535.5,229.8 539.6,230.1 543.6,230.2 547.6,230.2 551.6,230.4 555.7,230.0 559.7,230.0 563.7,230.3 567.8,230.2 571.8,230.3 575.8,230.5 579.9,230.7 583.9,230.7 587.9,230.6 591.9,231.1 596.0,231.3 600.0,231.0 604.0,231.0 608.0,230.8 612.0,230.9 616.0,231.5 620.0,231.0 624.0,231.5 628.0,231.5 632.0,231.3 636.0,231.7 640.0,231.3 644.0,231.4 648.0,231.7 652.0,231.4 656.0,232.1 660.0,231.7 664.0,231.7 668.0,231.7 672.0,232.2 676.0,232.1 680.0,232.3 684.0,232.4 688.0,232.5 692.0,232.7 696.0,232.6 700.0,232.3 704.0,232.5 708.0,232.4 712.0,232.3 716.0,232.7 720.0,232.9 724.0,232.6 728.0,232.8 732.0,232.9 736.0,233.2 740.0,233.1 744.0,233.2 748.0,233.4 752.0,233.2 756.0,233.5 760.0,233.7 764.0,233.2 768.0,233.8 772.0,233.7 776.0,233.4 780.0,233.7 784.0,233.8 788.0,234.1 792.0,233.8 796.0,234.0 800.0,234.3 804.0,234.3 808.0,234.4 812.0,234.2 816.0,234.3 820.0,234.1 824.0,234.5 828.0,234.6 832.0,234.6 836.0,234.7 840.0,234.4 844.0,234.9 848.0,235.1 852.0,235.1 856.0,234.9 860.0,235.1 864.0,234.8 868.0,235.3 872.0,235.3 876.0,235.0 880.0,234.9 884.0,235.2 888.0,235.4 892.0,235.6 896.0,235.4 900.0,235.5 904.0,235.2 908.0,235.8 912.0,235.4 916.0,236.0 920.0,235.6 924.0,235.8 928.0,236.2 932.0,235.8 936.0,235.9 940.0,236.2 944.0,236.4 948.0,236.5 952.0,236.5 956.0,236.7 960.0,236.5 964.0,236.9 968.0,236.3 972.0,236.5 976.0,236.8 980.0,236.7 984.0,237.1 988.0,237.1 992.0,237.0 996.0,237.3 1000.0,237.2 1004.0,237.1 1008.0,237.2 1012.0,237.6 1016.0,237.7 1020.0,237.3 1024.0,237.8 1028.0,238.0 1032.0,237.7 1036.0,237.8 1040.0,237.6 1044.0,237.9 1048.0,238.0 1052.0,238.1 1056.0,237.8 1060.0,238.5 1064.0,238.2 1068.0,238.2 1072.0,238.6 1076.0,238.5 1080.0,238.5 1084.0,238.7 1088.0,238.3 1092.0,238.7 1096.0,238.7 1100.0,239.2 1104.0,239.2 1108.0,238.8 1112.0,239.0 1116.0,238.8 1120.0,239.1 1124.0,239.5 1128.0,239.6 1132.0,239.4 1136.0,239.3 1140.0,239.3 1144.0,239.6 1148.0,239.9 1152.0,239.4 1156.0,240.0 1160.0,239.5 1164.0,239.7 1168.0,239.8 1172.0,240.2 1176.0,240.0 1180.0,240.1 1184.0,240.3 1188.0,240.0 1192.0,240.5 1196.0,240.2 1200.0,240.5 1202.0,232.5 1202.8,248.2 1203.6,234.8 1204.4,245.6 1205.2,237.1 1206.0,243.1 1212.0,240.9 1216.0,240.8 1220.0,240.8 1224.0,241.1 1228.0,241.1 1232.0,241.2 1236.0,241.2 1240.0,241.4 1244.0,241.2 1248.0,241.3 1252.0,241.7 1256.0,241.7 1260.0,241.7 1264.0,242.0 1268.0,241.9 1272.0,242.2 1276.0,241.9 1280.0,242.2 1284.0,242.3 1288.0,242.5 1292.0,242.2 1296.0,242.3 1300.0,242.7 1304.0,242.3 1308.0,242.9 1312.0,242.9 1316.0,242.5 1320.0,242.6 1324.0,243.0 1328.0,242.8 1332.0,242.8 1336.0,243.3 1340.0,243.1 1344.0,243.4 1348.0,243.1 1352.0,243.3 1356.0,243.5 1360.0,243.2 1364.0,243.4 1368.0,243.8 1372.0,244.0 1376.0,244.1 1380.0,243.6 1384.0,243.9 1388.0,244.2 1392.0,244.1 1396.0,244.3 1400.0,244.0 1404.0,244.0 1408.0,244.1 1412.0,244.2 1416.0,244.5 1420.0,244.6 1424.0,244.7 1428.0,244.5 1432.0,244.6 1436.0,244.7 1440.0,245.1 1444.0,245.3 1448.0,245.3 1452.0,244.9 1456.0,245.0 1460.0,245.6 1464.0,245.3 1468.0,245.6 1472.0,245.4 1476.0,245.6 1480.0,245.7 1484.0,245.7 1488.0,245.8 1492.0,245.6 1496.0,246.0 1500.0,246.0 1504.0,246.3 1508.1,246.0 1512.1,246.2 1516.2,246.4 1520.2,246.3 1524.3,246.3 1528.3,246.3 1532.4,246.6 1536.4,246.4 1540.5,247.0 1544.5,247.0 1548.6,247.0 1552.6,247.2 1556.7,247.1 1560.7,247.0 1564.8,247.2 1568.8,247.2 1572.9,247.6 1576.9,247.6 1581.0,247.3 1585.0,247.8 1589.1,247.7 1593.1,247.8 1597.2,247.9 1601.2,247.8 1605.3,248.1 1609.3,248.2 1613.4,248.1 1617.4,248.3 1621.5,248.3 1625.5,248.2 1629.5,248.5 1633.6,248.1 1637.6,248.4 1641.7,248.5 1645.7,248.3 1649.8,248.6 1653.8,248.8 1657.9,248.9 1661.9,248.7 1666.0,249.2 1670.0,249.1 1674.1,249.0 1678.1,249.3 1682.2,249.3 1686.2,249.4 1690.3,249.3 1694.3,249.8 1698.4,249.6 1702.4,249.7 1706.5,249.9 1710.5,250.1 1714.6,249.6 1718.6,250.0 1722.7,250.1 1726.7,249.9 1730.8,250.1 1734.8,249.9 1738.9,250.1 1742.9,250.3 1747.0,250.2 1751.0,250.5" fill="none" stroke="#1fbfcc" stroke-width="1.15" stroke-linejoin="round" />
<polyline points="3.0,349.5 54.0,349.5 55.6,301.5 56.1,395.5 56.5,305.5 57.0,391.5 57.4,309.5 57.9,385.5 58.3,319.5 58.8,373.5 59.2,331.5 59.6,361.5 60.1,341.5 60.6,354.5 61.5,349.5 318.0,349.5 319.5,336.0 320.3,381.0 321.1,337.0 321.9,373.0 322.7,341.0 323.5,367.0 324.3,344.0 325.1,363.0 325.9,346.0 326.7,360.0 327.5,348.0 328.3,358.0 329.1,350.0 329.9,356.0 334.2,354.6 337.3,354.9 340.5,354.4 343.7,354.1 346.8,354.3 350.0,353.7 353.1,353.6 356.2,353.8 359.4,353.4 362.5,353.3 365.6,352.6 368.8,352.9 371.9,352.9 375.0,352.5 376.0,348.0 377.0,354.0 378.0,352.0 381.1,351.6 384.3,352.3 387.4,351.6 390.6,351.8 393.7,351.5 396.9,351.7 400.0,351.7 403.0,351.7 406.1,351.2 409.1,351.9 412.2,351.4 415.2,351.4 418.3,351.4 421.3,351.2 424.3,351.0 427.4,351.3 430.4,351.1 433.5,350.9 436.5,351.1 439.6,350.7 442.6,350.5 445.7,350.6 448.7,350.4 451.7,350.4 454.8,350.8 457.8,350.5 460.9,350.8 463.9,350.6 467.0,350.0 470.0,350.3 474.0,350.5 478.0,350.0 480.0,351.5 483.1,351.9 486.2,351.3 489.2,352.1 492.3,351.8 495.4,351.9 498.5,352.3 501.5,351.8 504.6,352.1 507.7,352.5 510.8,352.4 513.8,352.3 516.9,352.8 520.0,352.5 523.1,352.8 526.2,352.6 529.2,352.2 532.3,352.7 535.4,352.6 538.5,352.4 541.5,352.3 544.6,352.7 547.7,352.4 550.8,352.6 553.8,352.8 556.9,352.7 560.0,352.6 563.1,352.8 566.2,352.7 569.2,353.0 572.3,352.9 575.4,353.2 578.5,353.2 581.5,353.1 584.6,352.7 587.7,352.6 590.8,353.3 593.8,353.2 596.9,353.1 600.0,353.0 603.0,352.9 606.0,352.8 609.0,353.1 612.0,353.0 615.0,352.9 618.0,353.0 621.0,353.0 624.0,352.6 627.0,352.6 630.0,353.1 633.0,353.1 636.0,353.0 639.0,352.3 642.0,352.3 645.0,352.4 648.0,352.5 651.0,352.7 654.0,352.2 657.0,352.6 660.0,352.2 663.0,352.1 666.0,352.6 669.0,352.5 672.0,352.5 675.0,352.3 678.0,352.3 681.0,352.1 684.0,352.2 687.0,352.5 690.0,352.5 693.0,351.9 696.0,351.9 699.0,352.4 702.0,352.2 705.0,352.3 708.0,351.9 711.0,352.0 714.0,351.9 717.0,352.3 720.0,351.9 723.0,352.1 726.0,352.3 729.0,351.8 732.0,351.9 735.0,352.1 738.0,352.2 741.0,351.8 744.0,351.7 747.0,351.5 750.0,352.1 753.0,351.4 756.0,351.4 759.0,351.7 762.0,351.6 765.0,351.8 768.0,351.4 771.0,351.8 774.0,351.2 777.0,351.3 780.0,351.6 783.0,351.1 786.0,351.3 789.0,351.6 792.0,351.6 795.0,351.2 798.0,351.1 801.0,351.2 804.0,351.5 807.0,351.2 810.0,350.9 813.0,351.4 816.0,351.3 819.0,351.5 822.0,351.5 825.0,351.5 828.0,351.1 831.0,351.3 834.0,350.9 837.0,350.9 840.0,350.9 843.0,351.3 846.0,351.3 849.0,350.7 852.0,350.8 855.0,350.8 858.0,350.7 861.0,350.7 864.0,350.7 867.0,350.5 870.0,350.8 873.0,351.0 876.0,350.7 879.0,350.9 882.0,350.7 885.0,350.4 888.0,350.8 891.0,350.9 894.0,350.4 897.0,350.1 900.0,350.5 903.1,350.5 906.2,350.5 909.2,350.5 912.3,350.8 915.4,350.5 918.5,350.7 921.5,350.0 924.6,350.4 927.7,350.6 930.8,350.0 933.8,350.0 936.9,350.5 940.0,350.3 944.0,352.3 958.0,350.0 959.0,357.8 960.0,350.0 979.3,350.0 981.3,352.3 984.0,350.3 991.5,352.3 999.0,350.3 1003.0,353.3 1008.0,350.3 1018.5,349.6 1019.9,356.4 1022.0,352.0 1027.3,348.3 1034.8,347.6 1034.8,370.0 1035.5,343.5 1038.9,346.9 1055.0,347.6 1056.0,351.0 1058.0,347.3 1068.0,347.6 1068.6,343.5 1068.6,380.8 1070.0,345.0 1076.0,348.3 1076.0,359.8 1077.0,348.0 1079.5,346.9 1085.6,352.3 1086.5,347.6 1095.7,351.7 1102.5,348.3 1105.0,352.0 1105.2,380.8 1105.9,341.5 1108.0,352.0 1110.6,350.3 1116.0,343.5 1124.2,343.5 1124.8,347.6 1126.0,343.5 1135.0,342.9 1135.0,358.4 1136.0,345.0 1139.0,338.8 1140.0,346.0 1141.0,339.0 1143.1,338.1 1145.0,345.0 1147.0,340.0 1149.9,343.5 1154.0,344.2 1154.0,348.3 1159.4,346.9 1163.4,348.3 1172.9,347.6 1175.6,350.3 1180.0,346.0 1183.7,345.6 1186.0,349.0 1190.0,346.0 1197.3,347.6 1198.5,339.9 1201.5,354.7 1201.5,340.0 1202.2,319.1 1203.7,300.6 1205.2,292.4 1206.2,303.0 1207.0,296.0 1208.0,304.0 1209.0,297.0 1210.0,302.0 1211.9,297.3 1215.6,302.8 1218.5,312.4 1221.5,324.3 1227.4,336.1 1234.1,342.8 1243.7,347.3 1254.1,348.0 1263.7,349.3 1286.7,349.9 1290.4,353.2 1293.3,350.2 1300.0,349.6 1305.0,349.8 1310.0,349.4 1315.0,349.7 1320.0,349.4 1325.1,349.7 1330.1,349.7 1335.1,349.4 1340.1,349.4 1345.1,349.8 1350.1,349.6 1355.1,349.8 1360.1,349.5 1365.1,349.5 1370.2,349.9 1375.2,349.7 1380.2,349.6 1385.2,349.6 1390.2,349.7 1395.2,349.7 1400.2,349.8 1405.2,349.5 1410.2,349.8 1415.3,349.7 1420.3,349.8 1425.3,349.8 1430.3,349.8 1435.3,349.8 1440.3,349.9 1445.3,349.7 1450.3,349.6 1455.3,349.7 1460.4,349.8 1465.4,349.6 1470.4,349.6 1475.4,349.4 1480.4,349.7 1485.4,349.9 1490.4,349.5 1495.4,349.4 1500.4,349.4 1505.5,349.6 1510.5,349.5 1515.5,349.9 1520.5,349.3 1525.5,349.5 1530.5,349.4 1535.5,349.7 1540.5,349.8 1545.5,349.4 1550.6,349.3 1555.6,349.6 1560.6,349.7 1565.6,349.8 1570.6,349.3 1575.6,349.4 1580.6,349.4 1585.6,349.4 1590.6,349.4 1595.7,349.7 1600.7,349.7 1605.7,349.4 1610.7,349.4 1615.7,349.5 1620.7,349.4 1625.7,349.8 1630.7,349.5 1635.7,349.6 1640.8,349.8 1645.8,349.6 1650.8,349.5 1655.8,349.8 1660.8,349.8 1665.8,349.5 1670.8,349.6 1675.8,349.9 1680.8,349.6 1685.9,349.4 1690.9,349.3 1695.9,349.9 1700.9,349.8 1705.9,349.5 1710.9,349.6 1715.9,349.6 1720.9,349.5 1725.9,349.9 1731.0,349.7 1736.0,349.4 1741.0,349.3 1746.0,349.6 1751.0,349.6" fill="none" stroke="#e3244c" stroke-width="1.15" stroke-linejoin="round" />
<polyline points="3.0,477.5 478.0,477.5 490.0,474.0 500.0,469.5 515.6,456.6 531.0,452.5 547.0,451.2 600.0,452.2 757.5,453.0 787.5,450.8 836.2,449.2 877.5,450.4 896.2,453.8 918.8,454.9 945.0,454.1 967.5,451.5 1001.0,454.1 1038.8,451.5 1065.0,453.0 1083.8,450.8 1104.3,454.9 1121.2,451.1 1132.4,452.2 1143.8,450.4 1162.5,455.2 1173.8,458.2 1200.0,457.9 1203.8,446.6 1209.3,447.0 1222.0,454.0 1233.8,462.0 1246.0,467.0 1260.0,470.6 1286.2,474.8 1320.0,476.2 1400.0,477.6 1751.0,477.8" fill="none" stroke="#80c63c" stroke-width="1.15" stroke-linejoin="round" />
<polyline points="3.0,583.5 1751.0,583.5" fill="none" stroke="#ff9c2e" stroke-width="1.3" stroke-linejoin="round" />
<g clip-path="url(#p6)">
<polyline points="3.0,746.5 55.5,746.5 55.5,654.5 321.0,654.5 322.2,641.0 332.0,641.0 335.5,654.5 632.0,654.5 633.0,653.0 634.0,654.5 1203.0,654.5 1204.5,641.0 1208.5,641.0 1210.5,654.5 1751.0,654.5" fill="none" stroke="#1e1eb2" stroke-width="1.3" stroke-linejoin="round" />
</g>
<polyline points="3.0,863.4 55.0,863.4 230.0,840.5 360.0,825.7 580.0,803.3 755.0,790.0 1000.0,777.3 1118.8,772.8 1209.8,770.8 1277.0,769.6 1494.8,769.6 1617.6,772.8 1751.0,774.8" fill="none" stroke="#f08a1e" stroke-width="1.15" stroke-linejoin="round" />
<polyline points="3.0,977.5 7.0,977.4 11.1,977.7 15.1,977.6 19.2,977.6 23.2,977.3 27.2,977.3 31.3,977.4 35.3,977.4 39.3,977.7 43.4,977.5 47.4,977.6 51.5,977.8 55.5,977.4 59.5,977.5 63.6,977.3 67.6,977.7 71.7,977.2 75.7,977.7 79.7,977.7 83.8,977.7 87.8,977.2 91.8,977.4 95.9,977.6 99.9,977.3 104.0,977.5 108.0,977.5 112.0,977.8 116.1,977.6 120.1,977.7 124.2,977.4 128.2,977.7 132.2,977.5 136.3,977.8 140.3,977.3 144.3,977.7 148.4,977.3 152.4,977.5 156.5,977.5 160.5,977.3 164.5,977.7 168.6,977.4 172.6,977.4 176.7,977.2 180.7,977.4 184.7,977.5 188.8,977.6 192.8,977.4 196.8,977.6 200.9,977.3 204.9,977.4 209.0,977.5 213.0,977.8 217.0,977.7 221.1,977.6 225.1,977.2 229.2,977.4 233.2,977.6 237.2,977.3 241.3,977.5 245.3,977.5 249.3,977.2 253.4,977.8 257.4,977.7 261.5,977.3 265.5,977.6 269.5,977.4 273.6,977.4 277.6,977.5 281.7,977.4 285.7,977.4 289.7,977.4 293.8,977.6 297.8,977.4 301.8,977.3 305.9,977.6 309.9,977.4 314.0,977.8 318.0,977.5 320.0,975.0 321.0,979.0 322.0,977.5 326.0,977.5 330.1,977.6 334.1,977.4 338.1,977.7 342.1,977.3 346.2,977.3 350.2,977.3 354.2,977.6 358.2,977.6 362.3,977.3 366.3,977.4 370.3,977.7 374.3,977.6 378.4,977.3 382.4,977.3 386.4,977.3 390.4,977.3 394.5,977.4 398.5,977.2 402.5,977.8 406.6,977.5 410.6,977.5 414.6,977.6 418.6,977.7 422.7,977.7 426.7,977.4 430.7,977.4 434.7,977.4 438.8,977.2 442.8,977.4 446.8,977.6 450.8,977.8 454.9,977.7 458.9,977.6 462.9,977.6 466.9,977.2 471.0,977.4 475.0,977.5 478.1,976.3 481.1,975.8 484.1,974.0 487.2,973.5 490.2,972.7 493.3,971.7 496.3,971.3 499.4,970.5 502.4,969.4 505.4,967.9 508.5,968.0 511.5,967.4 514.6,966.0 517.6,964.9 520.6,964.3 523.7,963.0 526.7,962.7 529.8,962.5 533.0,962.4 536.1,961.2 539.2,961.0 542.4,960.7 545.5,959.3 548.6,959.9 551.8,958.9 554.9,957.8 558.1,957.2 561.2,956.9 564.3,956.9 567.5,956.6 570.6,955.5 573.7,955.9 576.9,954.6 580.0,954.3 583.1,953.8 586.2,952.9 589.3,953.6 592.5,952.0 595.6,952.7 598.7,951.7 601.8,951.3 604.9,950.9 608.0,950.0 611.1,950.5 614.2,950.1 617.4,949.5 620.5,948.7 623.6,947.6 626.7,947.7 629.8,947.5 632.9,946.2 636.0,946.4 639.1,944.8 642.2,944.7 645.3,944.4 648.4,942.9 651.6,942.8 654.7,941.5 657.8,940.8 660.9,940.4 664.0,940.9 667.1,940.2 670.2,939.1 673.3,938.3 676.4,937.4 679.6,937.4 682.7,936.9 685.9,935.8 689.0,935.5 692.1,935.2 695.3,933.5 698.4,933.2 701.6,933.0 704.7,931.9 707.9,931.7 711.0,931.3 714.1,930.2 717.3,930.1 720.4,929.1 723.6,929.0 726.7,928.3 729.7,927.6 732.7,927.6 735.7,926.4 738.7,926.8 741.7,925.7 744.7,926.4 747.7,925.4 750.7,924.8 753.7,924.3 756.7,924.0 759.7,923.8 762.8,923.5 765.8,923.2 768.9,922.8 771.9,922.0 775.0,922.3 778.0,921.7 781.0,921.4 784.1,920.4 787.1,920.0 790.2,919.8 793.2,919.9 796.3,918.9 799.3,918.6 802.4,918.0 805.4,918.3 808.4,917.1 811.5,916.3 814.5,916.9 817.6,916.7 820.6,916.1 823.7,915.5 826.7,915.0 829.7,915.1 832.8,914.3 835.8,914.5 838.8,913.5 841.8,913.4 844.9,913.6 847.9,913.5 850.9,913.1 853.9,912.5 857.0,913.1 860.0,912.7 863.0,912.1 866.1,912.0 869.1,911.9 872.1,911.4 875.1,911.0 878.2,911.9 881.2,911.8 884.2,911.2 887.2,911.2 890.3,910.4 893.3,910.3 896.4,910.6 899.5,909.6 902.7,910.2 905.8,909.7 908.9,910.1 912.0,908.8 915.2,909.6 918.3,908.5 921.4,908.9 924.5,909.3 927.7,907.8 930.8,908.0 933.9,907.9 937.0,907.8 940.2,907.3 943.3,907.7 946.6,907.4 950.0,906.4 953.3,904.9 956.7,904.0 960.0,903.3 962.0,906.0 965.2,906.0 968.3,905.2 971.5,905.1 974.7,906.2 977.8,905.3 981.0,905.5 984.2,906.0 987.3,906.0 990.5,905.2 993.7,904.8 996.8,904.8 1000.0,905.0 1010.0,906.0 1020.0,903.0 1033.6,895.5 1036.0,903.0 1050.0,904.0 1067.3,903.5 1068.0,899.0 1070.0,904.0 1076.0,901.0 1080.0,905.0 1105.0,897.5 1108.0,903.0 1120.0,905.0 1134.6,909.4 1140.0,911.0 1146.5,917.3 1160.0,919.0 1198.0,920.5 1202.0,929.2 1205.9,953.0 1210.0,962.0 1217.7,970.8 1225.0,975.0 1233.6,977.5 1600.0,977.5 1610.0,976.0 1655.0,976.0 1660.0,977.5 1751.0,977.5" fill="none" stroke="#6a2888" stroke-width="1.15" stroke-linejoin="round" />
<line x1="3" y1="161.5" x2="1718" y2="161.5" stroke="#3c3c3c" stroke-width="1" stroke-dasharray="5 5"/>
<line x1="3" y1="246.5" x2="1718" y2="246.5" stroke="#3c3c3c" stroke-width="1" stroke-dasharray="5 5"/>
<line x1="3" y1="349.5" x2="1718" y2="349.5" stroke="#3c3c3c" stroke-width="1" stroke-dasharray="5 5"/>
<line x1="3" y1="477.5" x2="1718" y2="477.5" stroke="#3c3c3c" stroke-width="1" stroke-dasharray="5 5"/>
<line x1="3" y1="583.5" x2="1718" y2="583.5" stroke="#3c3c3c" stroke-width="1" stroke-dasharray="5 5"/>
<line x1="3" y1="863.5" x2="1718" y2="863.5" stroke="#3c3c3c" stroke-width="1" stroke-dasharray="5 5"/>
<line x1="3" y1="977.5" x2="1718" y2="977.5" stroke="#3c3c3c" stroke-width="1" stroke-dasharray="5 5"/>
</g>
<rect x="3" y="173" width="1748" height="2" fill="#585858" />
<rect x="3" y="290" width="1748" height="2" fill="#585858" />
<rect x="3" y="407" width="1748" height="2" fill="#585858" />
<rect x="3" y="524" width="1748" height="2" fill="#585858" />
<rect x="3" y="641" width="1748" height="2" fill="#585858" />
<rect x="3" y="758" width="1748" height="2" fill="#585858" />
<rect x="3" y="875" width="1748" height="2" fill="#585858" />
<text x="1746.5" y="97.3" font-size="13.3" text-anchor="end" fill="none" stroke="#fff" stroke-width="1.2" stroke-linejoin="round">30 V</text>
<text x="1746.5" y="97.3" font-size="13.3" text-anchor="end" fill="#111111" stroke="#111111" stroke-width="0.4">30 V</text>
<text x="1746.5" y="120.39999999999999" font-size="13.3" text-anchor="end" fill="none" stroke="#fff" stroke-width="1.2" stroke-linejoin="round">20 V</text>
<text x="1746.5" y="120.39999999999999" font-size="13.3" text-anchor="end" fill="#111111" stroke="#111111" stroke-width="0.4">20 V</text>
<text x="1746.5" y="143.5" font-size="13.3" text-anchor="end" fill="none" stroke="#fff" stroke-width="1.2" stroke-linejoin="round">10 V</text>
<text x="1746.5" y="143.5" font-size="13.3" text-anchor="end" fill="#111111" stroke="#111111" stroke-width="0.4">10 V</text>
<text x="1746.5" y="166.6" font-size="13.3" text-anchor="end" fill="none" stroke="#fff" stroke-width="1.2" stroke-linejoin="round">0 V</text>
<text x="1746.5" y="166.6" font-size="13.3" text-anchor="end" fill="#111111" stroke="#111111" stroke-width="0.4">0 V</text>
<text x="1746.5" y="194.79999999999998" font-size="13.3" text-anchor="end" fill="none" stroke="#fff" stroke-width="1.2" stroke-linejoin="round">1.25 V</text>
<text x="1747.3" y="195.6" font-size="13.3" text-anchor="end" fill="#000" stroke="#000" stroke-width="0.3">1.25 V</text>
<text x="1746.5" y="194.79999999999998" font-size="13.3" text-anchor="end" fill="#1fbfcc" stroke="#1fbfcc" stroke-width="0.4">1.25 V</text>
<text x="1746.5" y="217.79999999999998" font-size="13.3" text-anchor="end" fill="none" stroke="#fff" stroke-width="1.2" stroke-linejoin="round">750 mV</text>
<text x="1747.3" y="218.6" font-size="13.3" text-anchor="end" fill="#000" stroke="#000" stroke-width="0.3">750 mV</text>
<text x="1746.5" y="217.79999999999998" font-size="13.3" text-anchor="end" fill="#1fbfcc" stroke="#1fbfcc" stroke-width="0.4">750 mV</text>
<text x="1746.5" y="240.9" font-size="13.3" text-anchor="end" fill="none" stroke="#fff" stroke-width="1.2" stroke-linejoin="round">250 mV</text>
<text x="1747.3" y="241.70000000000002" font-size="13.3" text-anchor="end" fill="#000" stroke="#000" stroke-width="0.3">250 mV</text>
<text x="1746.5" y="240.9" font-size="13.3" text-anchor="end" fill="#1fbfcc" stroke="#1fbfcc" stroke-width="0.4">250 mV</text>
<text x="1746.5" y="263.90000000000003" font-size="13.3" text-anchor="end" fill="none" stroke="#fff" stroke-width="1.2" stroke-linejoin="round">-250 mV</text>
<text x="1747.3" y="264.70000000000005" font-size="13.3" text-anchor="end" fill="#000" stroke="#000" stroke-width="0.3">-250 mV</text>
<text x="1746.5" y="263.90000000000003" font-size="13.3" text-anchor="end" fill="#1fbfcc" stroke="#1fbfcc" stroke-width="0.4">-250 mV</text>
<text x="1746.5" y="287.0" font-size="13.3" text-anchor="end" fill="none" stroke="#fff" stroke-width="1.2" stroke-linejoin="round">-750 mV</text>
<text x="1747.3" y="287.8" font-size="13.3" text-anchor="end" fill="#000" stroke="#000" stroke-width="0.3">-750 mV</text>
<text x="1746.5" y="287.0" font-size="13.3" text-anchor="end" fill="#1fbfcc" stroke="#1fbfcc" stroke-width="0.4">-750 mV</text>
<text x="1746.5" y="308.70000000000005" font-size="13.3" text-anchor="end" fill="none" stroke="#fff" stroke-width="1.2" stroke-linejoin="round">1.80 V</text>
<text x="1747.3" y="309.50000000000006" font-size="13.3" text-anchor="end" fill="#000" stroke="#000" stroke-width="0.3">1.80 V</text>
<text x="1746.5" y="308.70000000000005" font-size="13.3" text-anchor="end" fill="#e3244c" stroke="#e3244c" stroke-width="0.4">1.80 V</text>
<text x="1746.5" y="331.70000000000005" font-size="13.3" text-anchor="end" fill="none" stroke="#fff" stroke-width="1.2" stroke-linejoin="round">900 mV</text>
<text x="1747.3" y="332.50000000000006" font-size="13.3" text-anchor="end" fill="#000" stroke="#000" stroke-width="0.3">900 mV</text>
<text x="1746.5" y="331.70000000000005" font-size="13.3" text-anchor="end" fill="#e3244c" stroke="#e3244c" stroke-width="0.4">900 mV</text>
<text x="1746.5" y="354.85" font-size="13.3" text-anchor="end" fill="none" stroke="#fff" stroke-width="1.2" stroke-linejoin="round">0 V</text>
<text x="1747.3" y="355.65000000000003" font-size="13.3" text-anchor="end" fill="#000" stroke="#000" stroke-width="0.3">0 V</text>
<text x="1746.5" y="354.85" font-size="13.3" text-anchor="end" fill="#e3244c" stroke="#e3244c" stroke-width="0.4">0 V</text>
<text x="1746.5" y="378.0" font-size="13.3" text-anchor="end" fill="none" stroke="#fff" stroke-width="1.2" stroke-linejoin="round">-900 mV</text>
<text x="1747.3" y="378.8" font-size="13.3" text-anchor="end" fill="#000" stroke="#000" stroke-width="0.3">-900 mV</text>
<text x="1746.5" y="378.0" font-size="13.3" text-anchor="end" fill="#e3244c" stroke="#e3244c" stroke-width="0.4">-900 mV</text>
<text x="1746.5" y="401.1" font-size="13.3" text-anchor="end" fill="none" stroke="#fff" stroke-width="1.2" stroke-linejoin="round">-1.80 V</text>
<text x="1747.3" y="401.90000000000003" font-size="13.3" text-anchor="end" fill="#000" stroke="#000" stroke-width="0.3">-1.80 V</text>
<text x="1746.5" y="401.1" font-size="13.3" text-anchor="end" fill="#e3244c" stroke="#e3244c" stroke-width="0.4">-1.80 V</text>
<text x="1746.5" y="425.5" font-size="13.3" text-anchor="end" fill="none" stroke="#fff" stroke-width="1.2" stroke-linejoin="round">1 V</text>
<text x="1747.3" y="426.3" font-size="13.3" text-anchor="end" fill="#000" stroke="#000" stroke-width="0.3">1 V</text>
<text x="1746.5" y="425.5" font-size="13.3" text-anchor="end" fill="#80c63c" stroke="#80c63c" stroke-width="0.4">1 V</text>
<text x="1746.5" y="448.6" font-size="13.3" text-anchor="end" fill="none" stroke="#fff" stroke-width="1.2" stroke-linejoin="round">600 mV</text>
<text x="1747.3" y="449.40000000000003" font-size="13.3" text-anchor="end" fill="#000" stroke="#000" stroke-width="0.3">600 mV</text>
<text x="1746.5" y="448.6" font-size="13.3" text-anchor="end" fill="#80c63c" stroke="#80c63c" stroke-width="0.4">600 mV</text>
<text x="1746.5" y="471.85" font-size="13.3" text-anchor="end" fill="none" stroke="#fff" stroke-width="1.2" stroke-linejoin="round">200 mV</text>
<text x="1747.3" y="472.65000000000003" font-size="13.3" text-anchor="end" fill="#000" stroke="#000" stroke-width="0.3">200 mV</text>
<text x="1746.5" y="471.85" font-size="13.3" text-anchor="end" fill="#80c63c" stroke="#80c63c" stroke-width="0.4">200 mV</text>
<text x="1746.5" y="494.85" font-size="13.3" text-anchor="end" fill="none" stroke="#fff" stroke-width="1.2" stroke-linejoin="round">-200 mV</text>
<text x="1747.3" y="495.65000000000003" font-size="13.3" text-anchor="end" fill="#000" stroke="#000" stroke-width="0.3">-200 mV</text>
<text x="1746.5" y="494.85" font-size="13.3" text-anchor="end" fill="#80c63c" stroke="#80c63c" stroke-width="0.4">-200 mV</text>
<text x="1746.5" y="518.0" font-size="13.3" text-anchor="end" fill="none" stroke="#fff" stroke-width="1.2" stroke-linejoin="round">-600 mV</text>
<text x="1747.3" y="518.8" font-size="13.3" text-anchor="end" fill="#000" stroke="#000" stroke-width="0.3">-600 mV</text>
<text x="1746.5" y="518.0" font-size="13.3" text-anchor="end" fill="#80c63c" stroke="#80c63c" stroke-width="0.4">-600 mV</text>
<text x="1746.5" y="542.7" font-size="13.3" text-anchor="end" fill="none" stroke="#fff" stroke-width="1.2" stroke-linejoin="round">4 V</text>
<text x="1747.3" y="543.5" font-size="13.3" text-anchor="end" fill="#000" stroke="#000" stroke-width="0.3">4 V</text>
<text x="1746.5" y="542.7" font-size="13.3" text-anchor="end" fill="#ff9c2e" stroke="#ff9c2e" stroke-width="0.4">4 V</text>
<text x="1746.5" y="565.5" font-size="13.3" text-anchor="end" fill="none" stroke="#fff" stroke-width="1.2" stroke-linejoin="round">2 V</text>
<text x="1747.3" y="566.3" font-size="13.3" text-anchor="end" fill="#000" stroke="#000" stroke-width="0.3">2 V</text>
<text x="1746.5" y="565.5" font-size="13.3" text-anchor="end" fill="#ff9c2e" stroke="#ff9c2e" stroke-width="0.4">2 V</text>
<text x="1746.5" y="588.7" font-size="13.3" text-anchor="end" fill="none" stroke="#fff" stroke-width="1.2" stroke-linejoin="round">0 V</text>
<text x="1747.3" y="589.5" font-size="13.3" text-anchor="end" fill="#000" stroke="#000" stroke-width="0.3">0 V</text>
<text x="1746.5" y="588.7" font-size="13.3" text-anchor="end" fill="#ff9c2e" stroke="#ff9c2e" stroke-width="0.4">0 V</text>
<text x="1746.5" y="611.85" font-size="13.3" text-anchor="end" fill="none" stroke="#fff" stroke-width="1.2" stroke-linejoin="round">-2 V</text>
<text x="1747.3" y="612.65" font-size="13.3" text-anchor="end" fill="#000" stroke="#000" stroke-width="0.3">-2 V</text>
<text x="1746.5" y="611.85" font-size="13.3" text-anchor="end" fill="#ff9c2e" stroke="#ff9c2e" stroke-width="0.4">-2 V</text>
<text x="1746.5" y="634.85" font-size="13.3" text-anchor="end" fill="none" stroke="#fff" stroke-width="1.2" stroke-linejoin="round">-4 V</text>
<text x="1747.3" y="635.65" font-size="13.3" text-anchor="end" fill="#000" stroke="#000" stroke-width="0.3">-4 V</text>
<text x="1746.5" y="634.85" font-size="13.3" text-anchor="end" fill="#ff9c2e" stroke="#ff9c2e" stroke-width="0.4">-4 V</text>
<text x="1746.5" y="659.85" font-size="13.3" text-anchor="end" fill="none" stroke="#fff" stroke-width="1.2" stroke-linejoin="round">6 V</text>
<text x="1747.3" y="660.65" font-size="13.3" text-anchor="end" fill="#000" stroke="#000" stroke-width="0.3">6 V</text>
<text x="1746.5" y="659.85" font-size="13.3" text-anchor="end" fill="#1e1eb2" stroke="#1e1eb2" stroke-width="0.4">6 V</text>
<text x="1746.5" y="683.0" font-size="13.3" text-anchor="end" fill="none" stroke="#fff" stroke-width="1.2" stroke-linejoin="round">4.50 V</text>
<text x="1747.3" y="683.8" font-size="13.3" text-anchor="end" fill="#000" stroke="#000" stroke-width="0.3">4.50 V</text>
<text x="1746.5" y="683.0" font-size="13.3" text-anchor="end" fill="#1e1eb2" stroke="#1e1eb2" stroke-width="0.4">4.50 V</text>
<text x="1746.5" y="706.1" font-size="13.3" text-anchor="end" fill="none" stroke="#fff" stroke-width="1.2" stroke-linejoin="round">3 V</text>
<text x="1747.3" y="706.9" font-size="13.3" text-anchor="end" fill="#000" stroke="#000" stroke-width="0.3">3 V</text>
<text x="1746.5" y="706.1" font-size="13.3" text-anchor="end" fill="#1e1eb2" stroke="#1e1eb2" stroke-width="0.4">3 V</text>
<text x="1746.5" y="728.7" font-size="13.3" text-anchor="end" fill="none" stroke="#fff" stroke-width="1.2" stroke-linejoin="round">1.50 V</text>
<text x="1747.3" y="729.5" font-size="13.3" text-anchor="end" fill="#000" stroke="#000" stroke-width="0.3">1.50 V</text>
<text x="1746.5" y="728.7" font-size="13.3" text-anchor="end" fill="#1e1eb2" stroke="#1e1eb2" stroke-width="0.4">1.50 V</text>
<text x="1746.5" y="751.85" font-size="13.3" text-anchor="end" fill="none" stroke="#fff" stroke-width="1.2" stroke-linejoin="round">0 V</text>
<text x="1747.3" y="752.65" font-size="13.3" text-anchor="end" fill="#000" stroke="#000" stroke-width="0.3">0 V</text>
<text x="1746.5" y="751.85" font-size="13.3" text-anchor="end" fill="#1e1eb2" stroke="#1e1eb2" stroke-width="0.4">0 V</text>
<text x="1746.5" y="776.85" font-size="13.3" text-anchor="end" fill="none" stroke="#fff" stroke-width="1.2" stroke-linejoin="round">580.985 mT</text>
<text x="1747.3" y="777.65" font-size="13.3" text-anchor="end" fill="#000" stroke="#000" stroke-width="0.3">580.985 mT</text>
<text x="1746.5" y="776.85" font-size="13.3" text-anchor="end" fill="#f08a1e" stroke="#f08a1e" stroke-width="0.4">580.985 mT</text>
<text x="1746.5" y="799.85" font-size="13.3" text-anchor="end" fill="none" stroke="#fff" stroke-width="1.2" stroke-linejoin="round">435.739 mT</text>
<text x="1747.3" y="800.65" font-size="13.3" text-anchor="end" fill="#000" stroke="#000" stroke-width="0.3">435.739 mT</text>
<text x="1746.5" y="799.85" font-size="13.3" text-anchor="end" fill="#f08a1e" stroke="#f08a1e" stroke-width="0.4">435.739 mT</text>
<text x="1746.5" y="823.0" font-size="13.3" text-anchor="end" fill="none" stroke="#fff" stroke-width="1.2" stroke-linejoin="round">290.492 mT</text>
<text x="1747.3" y="823.8" font-size="13.3" text-anchor="end" fill="#000" stroke="#000" stroke-width="0.3">290.492 mT</text>
<text x="1746.5" y="823.0" font-size="13.3" text-anchor="end" fill="#f08a1e" stroke="#f08a1e" stroke-width="0.4">290.492 mT</text>
<text x="1746.5" y="846.1" font-size="13.3" text-anchor="end" fill="none" stroke="#fff" stroke-width="1.2" stroke-linejoin="round">145.246 mT</text>
<text x="1747.3" y="846.9" font-size="13.3" text-anchor="end" fill="#000" stroke="#000" stroke-width="0.3">145.246 mT</text>
<text x="1746.5" y="846.1" font-size="13.3" text-anchor="end" fill="#f08a1e" stroke="#f08a1e" stroke-width="0.4">145.246 mT</text>
<text x="1746.5" y="869.2" font-size="13.3" text-anchor="end" fill="none" stroke="#fff" stroke-width="1.2" stroke-linejoin="round">0 T</text>
<text x="1747.3" y="870.0" font-size="13.3" text-anchor="end" fill="#000" stroke="#000" stroke-width="0.3">0 T</text>
<text x="1746.5" y="869.2" font-size="13.3" text-anchor="end" fill="#f08a1e" stroke="#f08a1e" stroke-width="0.4">0 T</text>
<text x="1746.5" y="891.2" font-size="13.3" text-anchor="end" fill="none" stroke="#fff" stroke-width="1.2" stroke-linejoin="round">7.621151 kA</text>
<text x="1747.3" y="892.0" font-size="13.3" text-anchor="end" fill="#000" stroke="#000" stroke-width="0.3">7.621151 kA</text>
<text x="1746.5" y="891.2" font-size="13.3" text-anchor="end" fill="#6a2888" stroke="#6a2888" stroke-width="0.4">7.621151 kA</text>
<text x="1746.5" y="914.3000000000001" font-size="13.3" text-anchor="end" fill="none" stroke="#fff" stroke-width="1.2" stroke-linejoin="round">5.715863 kA</text>
<text x="1747.3" y="915.1" font-size="13.3" text-anchor="end" fill="#000" stroke="#000" stroke-width="0.3">5.715863 kA</text>
<text x="1746.5" y="914.3000000000001" font-size="13.3" text-anchor="end" fill="#6a2888" stroke="#6a2888" stroke-width="0.4">5.715863 kA</text>
<text x="1746.5" y="937.4" font-size="13.3" text-anchor="end" fill="none" stroke="#fff" stroke-width="1.2" stroke-linejoin="round">3.810575 kA</text>
<text x="1747.3" y="938.1999999999999" font-size="13.3" text-anchor="end" fill="#000" stroke="#000" stroke-width="0.3">3.810575 kA</text>
<text x="1746.5" y="937.4" font-size="13.3" text-anchor="end" fill="#6a2888" stroke="#6a2888" stroke-width="0.4">3.810575 kA</text>
<text x="1746.5" y="960.4" font-size="13.3" text-anchor="end" fill="none" stroke="#fff" stroke-width="1.2" stroke-linejoin="round">1.905288 kA</text>
<text x="1747.3" y="961.1999999999999" font-size="13.3" text-anchor="end" fill="#000" stroke="#000" stroke-width="0.3">1.905288 kA</text>
<text x="1746.5" y="960.4" font-size="13.3" text-anchor="end" fill="#6a2888" stroke="#6a2888" stroke-width="0.4">1.905288 kA</text>
<text x="1746.5" y="983.5" font-size="13.3" text-anchor="end" fill="none" stroke="#fff" stroke-width="1.2" stroke-linejoin="round">0 A</text>
<text x="1747.3" y="984.3" font-size="13.3" text-anchor="end" fill="#000" stroke="#000" stroke-width="0.3">0 A</text>
<text x="1746.5" y="983.5" font-size="13.3" text-anchor="end" fill="#6a2888" stroke="#6a2888" stroke-width="0.4">0 A</text>
<text x="56.0" y="752.9" font-size="13.3" text-anchor="middle" fill="none" stroke="#fff" stroke-width="3" stroke-linejoin="round">0 s</text>
<text x="56.0" y="752.9" font-size="13.3" text-anchor="middle" fill="#222222" stroke="#222222" stroke-width="0.4">0 s</text>
<text x="230.9" y="752.9" font-size="13.3" text-anchor="middle" fill="none" stroke="#fff" stroke-width="3" stroke-linejoin="round">4 ms</text>
<text x="230.9" y="752.9" font-size="13.3" text-anchor="middle" fill="#222222" stroke="#222222" stroke-width="0.4">4 ms</text>
<text x="405.8" y="752.9" font-size="13.3" text-anchor="middle" fill="none" stroke="#fff" stroke-width="3" stroke-linejoin="round">8 ms</text>
<text x="405.8" y="752.9" font-size="13.3" text-anchor="middle" fill="#222222" stroke="#222222" stroke-width="0.4">8 ms</text>
<text x="580.7" y="752.9" font-size="13.3" text-anchor="middle" fill="none" stroke="#fff" stroke-width="3" stroke-linejoin="round">12 ms</text>
<text x="580.7" y="752.9" font-size="13.3" text-anchor="middle" fill="#222222" stroke="#222222" stroke-width="0.4">12 ms</text>
<text x="755.6" y="752.9" font-size="13.3" text-anchor="middle" fill="none" stroke="#fff" stroke-width="3" stroke-linejoin="round">16 ms</text>
<text x="755.6" y="752.9" font-size="13.3" text-anchor="middle" fill="#222222" stroke="#222222" stroke-width="0.4">16 ms</text>
<text x="930.5" y="752.9" font-size="13.3" text-anchor="middle" fill="none" stroke="#fff" stroke-width="3" stroke-linejoin="round">20 ms</text>
<text x="930.5" y="752.9" font-size="13.3" text-anchor="middle" fill="#222222" stroke="#222222" stroke-width="0.4">20 ms</text>
<text x="1105.4" y="752.9" font-size="13.3" text-anchor="middle" fill="none" stroke="#fff" stroke-width="3" stroke-linejoin="round">24 ms</text>
<text x="1105.4" y="752.9" font-size="13.3" text-anchor="middle" fill="#222222" stroke="#222222" stroke-width="0.4">24 ms</text>
<text x="1280.3" y="752.9" font-size="13.3" text-anchor="middle" fill="none" stroke="#fff" stroke-width="3" stroke-linejoin="round">28 ms</text>
<text x="1280.3" y="752.9" font-size="13.3" text-anchor="middle" fill="#222222" stroke="#222222" stroke-width="0.4">28 ms</text>
<text x="1455.2" y="752.9" font-size="13.3" text-anchor="middle" fill="none" stroke="#fff" stroke-width="3" stroke-linejoin="round">32 ms</text>
<text x="1455.2" y="752.9" font-size="13.3" text-anchor="middle" fill="#222222" stroke="#222222" stroke-width="0.4">32 ms</text>
<text x="1630.1000000000001" y="752.9" font-size="13.3" text-anchor="middle" fill="none" stroke="#fff" stroke-width="3" stroke-linejoin="round">36 ms</text>
<text x="1630.1000000000001" y="752.9" font-size="13.3" text-anchor="middle" fill="#222222" stroke="#222222" stroke-width="0.4">36 ms</text>
<path d="M1710,64.5 H1743 Q1745,64.5 1745,66.5 V99 Z" fill="#4a4a4a" stroke="#111" stroke-width="1.4" stroke-linejoin="round"/>
<circle cx="1737.3" cy="71.5" r="4" fill="none" stroke="#9a9a9a" stroke-width="1.4"/>
<line x1="1734.4" y1="74.4" x2="1728" y2="80.8" stroke="#9a9a9a" stroke-width="2.2" stroke-linecap="round"/>
<path d="M1729.4,700.4 L1742,690.3 V710.5 Z" fill="#2222c4"/>
<rect x="1741" y="699" width="10" height="3" fill="#2222c4" />
<path d="M45,58 H65 L55,67.7 Z" fill="#f28a1e"/>
<path d="M46,643.8 H64.5 V663 H59 L55.2,670 L51.5,663 H46 Z" fill="#000" stroke="#f28a1e" stroke-width="1.6"/>
<text x="55.3" y="660" font-size="15" fill="#f28a1e" font-weight="bold" text-anchor="middle" >T</text>
<path d="M10.4,102.2 H77.5 L84,115.44999999999999 L77.5,128.7 H10.4 Q6.9,128.7 6.9,125.19999999999999 V105.7 Q6.9,102.2 10.4,102.2 Z" fill="#e6e6e6" stroke="#1a1a1a" stroke-width="1.8" stroke-linejoin="round"/>
<rect x="32.1" y="102.2" width="1.8" height="26.5" fill="#1a1a1a" />
<text x="10.9" y="119.2" font-size="12.5" fill="#222" font-weight="normal" text-anchor="start" textLength="15.7" lengthAdjust="spacingAndGlyphs" stroke="#222" stroke-width="0.28" >C 1</text>
<text x="58" y="119.2" font-size="12.5" fill="#222" font-weight="normal" text-anchor="middle" textLength="24.2" lengthAdjust="spacingAndGlyphs" stroke="#222" stroke-width="0.28" >20 V</text>
<path d="M10.4,219.8 H77.5 L84,233.05 L77.5,246.3 H10.4 Q6.9,246.3 6.9,242.8 V223.3 Q6.9,219.8 10.4,219.8 Z" fill="#e3f5f7" stroke="#1fbfcc" stroke-width="1.8" stroke-linejoin="round"/>
<rect x="32.1" y="219.8" width="1.8" height="26.5" fill="#1fbfcc" />
<text x="10.9" y="236.8" font-size="12.5" fill="#111" font-weight="normal" text-anchor="start" textLength="15.7" lengthAdjust="spacingAndGlyphs" stroke="#111" stroke-width="0.28" >C 2</text>
<text x="58" y="236.8" font-size="12.5" fill="#111" font-weight="normal" text-anchor="middle" textLength="38" lengthAdjust="spacingAndGlyphs" stroke="#111" stroke-width="0.28" >300 mV</text>
<path d="M10.4,453.2 H77.5 L84,466.45 L77.5,479.7 H10.4 Q6.9,479.7 6.9,476.2 V456.7 Q6.9,453.2 10.4,453.2 Z" fill="#eef6e6" stroke="#80c63c" stroke-width="1.8" stroke-linejoin="round"/>
<rect x="32.1" y="453.2" width="1.8" height="26.5" fill="#80c63c" />
<text x="10.9" y="470.2" font-size="12.5" fill="#111" font-weight="normal" text-anchor="start" textLength="15.7" lengthAdjust="spacingAndGlyphs" stroke="#111" stroke-width="0.28" >C 4</text>
<text x="58" y="470.2" font-size="12.5" fill="#111" font-weight="normal" text-anchor="middle" textLength="38" lengthAdjust="spacingAndGlyphs" stroke="#111" stroke-width="0.28" >200 mV</text>
<path d="M10.4,687.2 H77.5 L84,700.45 L77.5,713.7 H10.4 Q6.9,713.7 6.9,710.2 V690.7 Q6.9,687.2 10.4,687.2 Z" fill="#e4e4f4" stroke="#111111" stroke-width="1.8" stroke-linejoin="round"/>
<path d="M10.4,687.2 H33 V713.7 H10.4 Q6.9,713.7 6.9,710.2 V690.7 Q6.9,687.2 10.4,687.2 Z" fill="#2424c0" stroke="#111111" stroke-width="1.8"/>
<rect x="32.1" y="687.2" width="1.8" height="26.5" fill="#111111" />
<text x="10.9" y="704.2" font-size="12.5" fill="#ffffff" font-weight="normal" text-anchor="start" textLength="15.7" lengthAdjust="spacingAndGlyphs" stroke="#ffffff" stroke-width="0.28" >C 6</text>
<text x="58" y="704.2" font-size="12.5" fill="#1e1eb2" font-weight="normal" text-anchor="middle" textLength="19" lengthAdjust="spacingAndGlyphs" stroke="#1e1eb2" stroke-width="0.28" >3 V</text>
<path d="M9.7,337.3 H30.7 L42,349.8 L30.7,362.3 H9.7 Q6.2,362.3 6.2,358.8 V340.8 Q6.2,337.3 9.7,337.3 Z" fill="#fbe9ee" stroke="#ee6a88" stroke-width="1.3" stroke-linejoin="round"/>
<text x="15" y="353.0" font-size="12.5" fill="#e3244c" font-weight="normal" text-anchor="start" textLength="17" lengthAdjust="spacingAndGlyphs" stroke="#e3244c" stroke-width="0.28" >C 3</text>
<path d="M9.7,571.4 H30.7 L42,583.9 L30.7,596.4 H9.7 Q6.2,596.4 6.2,592.9 V574.9 Q6.2,571.4 9.7,571.4 Z" fill="#fff3e8" stroke="#ff9a30" stroke-width="1.3" stroke-linejoin="round"/>
<text x="15" y="587.1" font-size="12.5" fill="#1a1a1a" font-weight="normal" text-anchor="start" textLength="17" lengthAdjust="spacingAndGlyphs" stroke="#1a1a1a" stroke-width="0.28" >C 5</text>
<path d="M9.7,850.8 H30.7 L42,863.3 L30.7,875.8 H9.7 Q6.2,875.8 6.2,872.3 V854.3 Q6.2,850.8 9.7,850.8 Z" fill="#fff0e2" stroke="#f0a050" stroke-width="1.3" stroke-linejoin="round"/>
<text x="15" y="866.5" font-size="12.5" fill="#1a1a1a" font-weight="normal" text-anchor="start" textLength="17" lengthAdjust="spacingAndGlyphs" stroke="#1a1a1a" stroke-width="0.28" >M 1</text>
<path d="M9.7,965.0 H30.7 L42,977.5 L30.7,990.0 H9.7 Q6.2,990.0 6.2,986.5 V968.5 Q6.2,965.0 9.7,965.0 Z" fill="#f0e6f2" stroke="#7a2a9a" stroke-width="1.3" stroke-linejoin="round"/>
<text x="15" y="980.7" font-size="12.5" fill="#6a2888" font-weight="normal" text-anchor="start" textLength="17" lengthAdjust="spacingAndGlyphs" stroke="#6a2888" stroke-width="0.28" >M 2</text>
<line x1="3" y1="349.6" x2="6" y2="349.6" stroke="#3c3c3c" stroke-width="1.5" />
<line x1="3" y1="583.5" x2="6" y2="583.5" stroke="#3c3c3c" stroke-width="1.5" />
<line x1="3" y1="863.4" x2="6" y2="863.4" stroke="#3c3c3c" stroke-width="1.5" />
<line x1="3" y1="977.5" x2="6" y2="977.5" stroke="#6a2888" stroke-width="1.5" />
<text x="101.25" y="121.75" font-size="21" fill="#111111" stroke="#111111" stroke-width="0.55" textLength="98.5" lengthAdjust="spacingAndGlyphs">U_loop,coil</text>
<text x="102" y="239.75" font-size="21" fill="#000" fill-opacity="0.75" stroke="#000" stroke-opacity="0.75" stroke-width="0.4" textLength="77" lengthAdjust="spacingAndGlyphs">U_Bt,coil</text>
<text x="101" y="238.75" font-size="21" fill="#1fbfcc" stroke="#1fbfcc" stroke-width="0.55" textLength="77" lengthAdjust="spacingAndGlyphs">U_Bt,coil</text>
<text x="56" y="356.4" font-size="21" fill="#000" fill-opacity="0.75" stroke="#000" stroke-opacity="0.75" stroke-width="0.4" textLength="90" lengthAdjust="spacingAndGlyphs">U_Rog,coil</text>
<text x="55" y="355.4" font-size="21" fill="#e3244c" stroke="#e3244c" stroke-width="0.55" textLength="90" lengthAdjust="spacingAndGlyphs">U_Rog,coil</text>
<text x="102.6" y="473.2" font-size="21" fill="#000" fill-opacity="0.75" stroke="#000" stroke-opacity="0.75" stroke-width="0.4" textLength="86" lengthAdjust="spacingAndGlyphs">U_Photod</text>
<text x="101.6" y="472.2" font-size="21" fill="#80c63c" stroke="#80c63c" stroke-width="0.55" textLength="86" lengthAdjust="spacingAndGlyphs">U_Photod</text>
<text x="54.3" y="590.3" font-size="21" fill="#000" fill-opacity="0.75" stroke="#000" stroke-opacity="0.75" stroke-width="0.4" textLength="102" lengthAdjust="spacingAndGlyphs">U_Diamagn</text>
<text x="53.3" y="589.3" font-size="21" fill="#ff9c2e" stroke="#ff9c2e" stroke-width="0.55" textLength="102" lengthAdjust="spacingAndGlyphs">U_Diamagn</text>
<text x="101" y="706.2" font-size="21" fill="#1e1eb2" stroke="#1e1eb2" stroke-width="0.55" textLength="62.8" lengthAdjust="spacingAndGlyphs">Trigger</text>
<text x="54" y="866" font-size="21" fill="#000" fill-opacity="0.75" stroke="#000" stroke-opacity="0.75" stroke-width="0.4" textLength="28" lengthAdjust="spacingAndGlyphs">B_t</text>
<text x="53" y="865" font-size="21" fill="#f08a1e" stroke="#f08a1e" stroke-width="0.55" textLength="28" lengthAdjust="spacingAndGlyphs">B_t</text>
<text x="53" y="985" font-size="21" fill="#000" fill-opacity="0.75" stroke="#000" stroke-opacity="0.75" stroke-width="0.4" textLength="28" lengthAdjust="spacingAndGlyphs">I_p</text>
<text x="52" y="984" font-size="21" fill="#6a2888" stroke="#6a2888" stroke-width="0.55" textLength="28" lengthAdjust="spacingAndGlyphs">I_p</text>
<line x1="1769.5" y1="29.5" x2="1920" y2="29.5" stroke="#6b6158" stroke-width="1" />
<line x1="1769.5" y1="29" x2="1769.5" y2="995.4" stroke="#56585c" stroke-width="1" />
<line x1="1769.5" y1="995.4" x2="1920" y2="995.4" stroke="#6b6158" stroke-width="1" />
<text x="1786" y="26" font-size="31.5" fill="#ffffff" font-weight="bold" text-anchor="start" textLength="17.8" lengthAdjust="spacingAndGlyphs" stroke="#ffffff" stroke-width="0.9" >T</text>
<text x="1797.8" y="26" font-size="31.5" fill="#ffffff" font-weight="bold" text-anchor="start" textLength="13.7" lengthAdjust="spacingAndGlyphs" stroke="#ffffff" stroke-width="0.9" >e</text>
<text x="1839.7" y="26" font-size="31.5" fill="#ffffff" font-weight="bold" text-anchor="start" textLength="63.7" lengthAdjust="spacingAndGlyphs" stroke="#ffffff" stroke-width="0.9" >ronix</text>
<rect x="1815.1" y="3.9" width="4.9" height="21.9" fill="#ffffff" />
<path d="M1822.5,25.8 L1829.9,25.8 L1825.6,17.2 Z" fill="#ffffff"/>
<path d="M1831.1,9.3 L1836.3,4.3 V9.3 H1841 V14.3 H1836.3 V25.8 H1831.1 Z" fill="#ffffff"/>
<path d="M1815,25.8 L1819.8,25.8 L1831.1,9.2 L1826.1,9.2 Z" fill="#1db4dc"/>
<text x="1802.8" y="43.5" font-size="15" fill="#e6e6e8" font-weight="bold" text-anchor="start" textLength="83.8" lengthAdjust="spacingAndGlyphs" >Add New...</text>
<rect x="1778.5" y="54.5" width="61.5" height="36" rx="5.5" fill="url(#btn)" stroke="#6b6158" stroke-width="1"/>
<text x="1809.25" y="76.9" font-size="15" fill="#f4f4f4" font-weight="normal" text-anchor="middle" textLength="50" lengthAdjust="spacingAndGlyphs" stroke="#f4f4f4" stroke-width="0.28" >Cursors</text>
<rect x="1850.5" y="54.5" width="61.5" height="36" rx="5.5" fill="url(#btn)" stroke="#6b6158" stroke-width="1"/>
<text x="1881.25" y="76.9" font-size="15" fill="#f4f4f4" font-weight="normal" text-anchor="middle" textLength="49.5" lengthAdjust="spacingAndGlyphs" stroke="#f4f4f4" stroke-width="0.28" >Callout</text>
<rect x="1778.5" y="100.5" width="61.5" height="36" rx="5.5" fill="url(#btn)" stroke="#6b6158" stroke-width="1"/>
<text x="1809.25" y="122.6" font-size="15" fill="#f4f4f4" font-weight="normal" text-anchor="middle" textLength="58.5" lengthAdjust="spacingAndGlyphs" stroke="#f4f4f4" stroke-width="0.28" >Measure</text>
<rect x="1850.5" y="100.5" width="61.5" height="36" rx="5.5" fill="url(#btn)" stroke="#6b6158" stroke-width="1"/>
<text x="1881.25" y="122.6" font-size="15" fill="#f4f4f4" font-weight="normal" text-anchor="middle" textLength="45.5" lengthAdjust="spacingAndGlyphs" stroke="#f4f4f4" stroke-width="0.28" >Search</text>
<rect x="1778.5" y="146.5" width="61.5" height="36" rx="5.5" fill="url(#btn)" stroke="#6b6158" stroke-width="1"/>
<text x="1809.25" y="160.4" font-size="15" fill="#f4f4f4" font-weight="normal" text-anchor="middle" textLength="47.8" lengthAdjust="spacingAndGlyphs" stroke="#f4f4f4" stroke-width="0.28" >Results</text>
<text x="1809.25" y="176" font-size="15" fill="#f4f4f4" font-weight="normal" text-anchor="middle" textLength="36" lengthAdjust="spacingAndGlyphs" stroke="#f4f4f4" stroke-width="0.28" >Table</text>
<rect x="1850.5" y="146.5" width="61.5" height="36" rx="5.5" fill="url(#btn)" stroke="#6b6158" stroke-width="1"/>
<text x="1881.25" y="168.5" font-size="15" fill="#f4f4f4" font-weight="normal" text-anchor="middle" textLength="27.6" lengthAdjust="spacingAndGlyphs" stroke="#f4f4f4" stroke-width="0.28" >Plot</text>
<rect x="1778.5" y="196.5" width="61.5" height="36" rx="5.5" fill="url(#btn)" stroke="#6b6158" stroke-width="1"/>
<rect x="1850.5" y="196.5" width="61.5" height="36" rx="5.5" fill="url(#btn)" stroke="#6b6158" stroke-width="1"/>
<text x="1881.25" y="218.9" font-size="15" fill="#f4f4f4" font-weight="normal" text-anchor="middle" textLength="49.8" lengthAdjust="spacingAndGlyphs" stroke="#f4f4f4" stroke-width="0.28" >More...</text>
<line x1="1773" y1="189.6" x2="1917" y2="189.6" stroke="#6b6158" stroke-width="1" />
<line x1="1773" y1="241.4" x2="1917" y2="241.4" stroke="#6b6158" stroke-width="1" />
<rect x="1798.3" y="203" width="21.5" height="18.5" fill="none" stroke="#a8a8a8" stroke-width="1.6" stroke-dasharray="2.2 2"/>
<circle cx="1810.6" cy="210.5" r="4.2" fill="none" stroke="#a8a8a8" stroke-width="1.5"/>
<line x1="1807.6" y1="213.6" x2="1803.4" y2="217.6" stroke="#a8a8a8" stroke-width="2.2" stroke-linecap="round"/>
<path d="M1815.5,216.5 L1822.8,221.5 L1819.8,222 L1822,225.8 L1820.6,226.5 L1818.5,222.8 L1816.3,224.6 Z" fill="#a8a8a8"/>
<circle cx="1761.75" cy="503.75" r="1.8" fill="#bdbdbd"/>
<circle cx="1761.75" cy="512" r="1.8" fill="#bdbdbd"/>
<circle cx="1761.75" cy="520.5" r="1.8" fill="#bdbdbd"/>
<path d="M7,984 H89 Q93,984 93,988 V1074.5 Q93,1078.5 89,1078.5 H7 Q3,1078.5 3,1074.5 V988 Q3,984 7,984 Z" fill="#c9c9c9"/>
<path d="M7,984 H89 Q93,984 93,988 V1003 H3 V988 Q3,984 7,984 Z" fill="#1e1e1e"/>
<rect x="3" y="1003" width="90" height="2.4" fill="#b6bcbc" />
<text x="8.9" y="997.8" font-size="14.5" fill="#f2e630" font-weight="normal" text-anchor="start" textLength="28.1" lengthAdjust="spacingAndGlyphs" stroke="#f2e630" stroke-width="0.28" >Ch 1</text>
<rect x="3" y="1005.4" width="90" height="16.6" fill="#ff0000" />
<path d="M11.1,1007.0 L18.6,1020.7 H3.8 Z" fill="#f2ee00" stroke="#3c3c64" stroke-width="1" stroke-linejoin="round"/>
<line x1="11.1" y1="1011.5" x2="11.1" y2="1018.5" stroke="#8a8a50" stroke-width="1.4" />
<text x="19.6" y="1018.0" font-size="14.5" fill="#ffffff" font-weight="normal" text-anchor="start" textLength="56.7" lengthAdjust="spacingAndGlyphs" stroke="#ffffff" stroke-width="0.28" >Clipping</text>
<text x="8.7" y="1036.7" font-size="15" fill="#111111" font-weight="normal" text-anchor="start" textLength="43.2" lengthAdjust="spacingAndGlyphs" stroke="#111111" stroke-width="0.28" >5 V/div</text>
<text x="9.6" y="1055.6" font-size="15" fill="#111111" font-weight="normal" text-anchor="start" textLength="34.7" lengthAdjust="spacingAndGlyphs" stroke="#111111" stroke-width="0.28" >1 MΩ</text>
<text x="8.5" y="1074.4" font-size="15" fill="#111111" font-weight="normal" text-anchor="start" textLength="52.6" lengthAdjust="spacingAndGlyphs" stroke="#111111" stroke-width="0.28" >200 kHz</text>
<text x="74.8" y="1068.9" font-size="9" fill="#111111" font-weight="normal" text-anchor="start" stroke="#111111" stroke-width="0.28" >B</text>
<text x="80.4" y="1071.9" font-size="9" fill="#111111" font-weight="normal" text-anchor="start" stroke="#111111" stroke-width="0.28" >w</text>
<path d="M102,984 H184 Q188,984 188,988 V1074.5 Q188,1078.5 184,1078.5 H102 Q98,1078.5 98,1074.5 V988 Q98,984 102,984 Z" fill="#c9c9c9"/>
<path d="M102,984 H184 Q188,984 188,988 V1003 H98 V988 Q98,984 102,984 Z" fill="#1e3c40"/>
<rect x="98" y="1003" width="90" height="2.4" fill="#b6bcbc" />
<text x="103.9" y="997.8" font-size="14.5" fill="#2cc6d4" font-weight="normal" text-anchor="start" textLength="30.2" lengthAdjust="spacingAndGlyphs" stroke="#2cc6d4" stroke-width="0.28" >Ch 2</text>
<rect x="98" y="1005.4" width="90" height="16.6" fill="#ff0000" />
<path d="M106.1,1007.0 L113.6,1020.7 H98.8 Z" fill="#f2ee00" stroke="#3c3c64" stroke-width="1" stroke-linejoin="round"/>
<line x1="106.1" y1="1011.5" x2="106.1" y2="1018.5" stroke="#8a8a50" stroke-width="1.4" />
<text x="114.6" y="1018.0" font-size="14.5" fill="#ffffff" font-weight="normal" text-anchor="start" textLength="56.7" lengthAdjust="spacingAndGlyphs" stroke="#ffffff" stroke-width="0.28" >Clipping</text>
<text x="103.7" y="1036.7" font-size="15" fill="#111111" font-weight="normal" text-anchor="start" textLength="72.9" lengthAdjust="spacingAndGlyphs" stroke="#111111" stroke-width="0.28" >250 mV/div</text>
<text x="104.6" y="1055.6" font-size="15" fill="#111111" font-weight="normal" text-anchor="start" textLength="34.7" lengthAdjust="spacingAndGlyphs" stroke="#111111" stroke-width="0.28" >1 MΩ</text>
<text x="103.5" y="1074.4" font-size="15" fill="#111111" font-weight="normal" text-anchor="start" textLength="52.6" lengthAdjust="spacingAndGlyphs" stroke="#111111" stroke-width="0.28" >200 kHz</text>
<text x="169.8" y="1068.9" font-size="9" fill="#111111" font-weight="normal" text-anchor="start" stroke="#111111" stroke-width="0.28" >B</text>
<text x="175.4" y="1071.9" font-size="9" fill="#111111" font-weight="normal" text-anchor="start" stroke="#111111" stroke-width="0.28" >w</text>
<path d="M197,984 H279 Q283,984 283,988 V1074.5 Q283,1078.5 279,1078.5 H197 Q193,1078.5 193,1074.5 V988 Q193,984 197,984 Z" fill="#c9c9c9"/>
<path d="M197,984 H279 Q283,984 283,988 V1003 H193 V988 Q193,984 197,984 Z" fill="#46242a"/>
<rect x="193" y="1003" width="90" height="2.4" fill="#b6bcbc" />
<text x="198.9" y="997.8" font-size="14.5" fill="#f2f2f2" font-weight="normal" text-anchor="start" textLength="30" lengthAdjust="spacingAndGlyphs" stroke="#f2f2f2" stroke-width="0.28" >Ch 3</text>
<rect x="193" y="1005.4" width="90" height="16.6" fill="#ff0000" />
<path d="M201.10000000000002,1007.0 L208.60000000000002,1020.7 H193.8 Z" fill="#f2ee00" stroke="#3c3c64" stroke-width="1" stroke-linejoin="round"/>
<line x1="201.10000000000002" y1="1011.5" x2="201.10000000000002" y2="1018.5" stroke="#8a8a50" stroke-width="1.4" />
<text x="209.6" y="1018.0" font-size="14.5" fill="#ffffff" font-weight="normal" text-anchor="start" textLength="56.7" lengthAdjust="spacingAndGlyphs" stroke="#ffffff" stroke-width="0.28" >Clipping</text>
<text x="198.7" y="1036.7" font-size="15" fill="#111111" font-weight="normal" text-anchor="start" textLength="73.4" lengthAdjust="spacingAndGlyphs" stroke="#111111" stroke-width="0.28" >450 mV/div</text>
<text x="199.6" y="1055.6" font-size="15" fill="#111111" font-weight="normal" text-anchor="start" textLength="34.7" lengthAdjust="spacingAndGlyphs" stroke="#111111" stroke-width="0.28" >1 MΩ</text>
<text x="198.5" y="1074.4" font-size="15" fill="#111111" font-weight="normal" text-anchor="start" textLength="52.6" lengthAdjust="spacingAndGlyphs" stroke="#111111" stroke-width="0.28" >200 kHz</text>
<text x="264.8" y="1068.9" font-size="9" fill="#111111" font-weight="normal" text-anchor="start" stroke="#111111" stroke-width="0.28" >B</text>
<text x="270.4" y="1071.9" font-size="9" fill="#111111" font-weight="normal" text-anchor="start" stroke="#111111" stroke-width="0.28" >w</text>
<path d="M292,1003 H374 Q378,1003 378,1007 V1074.5 Q378,1078.5 374,1078.5 H292 Q288,1078.5 288,1074.5 V1007 Q288,1003 292,1003 Z" fill="#c9c9c9"/>
<path d="M292,1003 H374 Q378,1003 378,1007 V1022 H288 V1007 Q288,1003 292,1003 Z" fill="#333f20"/>
<rect x="288" y="1022" width="90" height="2.4" fill="#b6bcbc" />
<text x="293.9" y="1016.8" font-size="14.5" fill="#96cc44" font-weight="normal" text-anchor="start" textLength="30.1" lengthAdjust="spacingAndGlyphs" stroke="#96cc44" stroke-width="0.28" >Ch 4</text>
<text x="293.7" y="1036.7" font-size="15" fill="#111111" font-weight="normal" text-anchor="start" textLength="72.7" lengthAdjust="spacingAndGlyphs" stroke="#111111" stroke-width="0.28" >200 mV/div</text>
<text x="294.6" y="1055.6" font-size="15" fill="#111111" font-weight="normal" text-anchor="start" textLength="34.7" lengthAdjust="spacingAndGlyphs" stroke="#111111" stroke-width="0.28" >1 MΩ</text>
<text x="293.5" y="1074.4" font-size="15" fill="#111111" font-weight="normal" text-anchor="start" textLength="52.6" lengthAdjust="spacingAndGlyphs" stroke="#111111" stroke-width="0.28" >200 kHz</text>
<text x="359.8" y="1068.9" font-size="9" fill="#111111" font-weight="normal" text-anchor="start" stroke="#111111" stroke-width="0.28" >B</text>
<text x="365.4" y="1071.9" font-size="9" fill="#111111" font-weight="normal" text-anchor="start" stroke="#111111" stroke-width="0.28" >w</text>
<path d="M387,1003 H469 Q473,1003 473,1007 V1074.5 Q473,1078.5 469,1078.5 H387 Q383,1078.5 383,1074.5 V1007 Q383,1003 387,1003 Z" fill="#c9c9c9"/>
<path d="M387,1003 H469 Q473,1003 473,1007 V1022 H383 V1007 Q383,1003 387,1003 Z" fill="#4a3220"/>
<rect x="383" y="1022" width="90" height="2.4" fill="#b6bcbc" />
<text x="388.9" y="1016.8" font-size="14.5" fill="#f8a03a" font-weight="normal" text-anchor="start" textLength="29.7" lengthAdjust="spacingAndGlyphs" stroke="#f8a03a" stroke-width="0.28" >Ch 5</text>
<text x="388.7" y="1036.7" font-size="15" fill="#111111" font-weight="normal" text-anchor="start" textLength="43.3" lengthAdjust="spacingAndGlyphs" stroke="#111111" stroke-width="0.28" >1 V/div</text>
<text x="389.6" y="1055.6" font-size="15" fill="#111111" font-weight="normal" text-anchor="start" textLength="34.7" lengthAdjust="spacingAndGlyphs" stroke="#111111" stroke-width="0.28" >1 MΩ</text>
<text x="388.5" y="1074.4" font-size="15" fill="#111111" font-weight="normal" text-anchor="start" textLength="52.6" lengthAdjust="spacingAndGlyphs" stroke="#111111" stroke-width="0.28" >200 kHz</text>
<text x="454.8" y="1068.9" font-size="9" fill="#111111" font-weight="normal" text-anchor="start" stroke="#111111" stroke-width="0.28" >B</text>
<text x="460.4" y="1071.9" font-size="9" fill="#111111" font-weight="normal" text-anchor="start" stroke="#111111" stroke-width="0.28" >w</text>
<path d="M482,984 H564 Q568,984 568,988 V1074.5 Q568,1078.5 564,1078.5 H482 Q478,1078.5 478,1074.5 V988 Q478,984 482,984 Z" fill="#c9c9c9"/>
<path d="M482,984 H564 Q568,984 568,988 V1003 H478 V988 Q478,984 482,984 Z" fill="#2424c4"/>
<rect x="478" y="1003" width="90" height="2.4" fill="#b6bcbc" />
<text x="483.9" y="997.8" font-size="14.5" fill="#ffffff" font-weight="normal" text-anchor="start" textLength="30" lengthAdjust="spacingAndGlyphs" stroke="#ffffff" stroke-width="0.28" >Ch 6</text>
<rect x="478" y="1005.4" width="90" height="16.6" fill="#ff0000" />
<path d="M486.1,1007.0 L493.6,1020.7 H478.8 Z" fill="#f2ee00" stroke="#3c3c64" stroke-width="1" stroke-linejoin="round"/>
<line x1="486.1" y1="1011.5" x2="486.1" y2="1018.5" stroke="#8a8a50" stroke-width="1.4" />
<text x="494.6" y="1018.0" font-size="14.5" fill="#ffffff" font-weight="normal" text-anchor="start" textLength="56.7" lengthAdjust="spacingAndGlyphs" stroke="#ffffff" stroke-width="0.28" >Clipping</text>
<text x="483.7" y="1036.7" font-size="15" fill="#111111" font-weight="normal" text-anchor="start" textLength="73.25" lengthAdjust="spacingAndGlyphs" stroke="#111111" stroke-width="0.28" >750 mV/div</text>
<text x="484.6" y="1055.6" font-size="15" fill="#111111" font-weight="normal" text-anchor="start" textLength="34.7" lengthAdjust="spacingAndGlyphs" stroke="#111111" stroke-width="0.28" >1 MΩ</text>
<text x="483.5" y="1074.4" font-size="15" fill="#111111" font-weight="normal" text-anchor="start" textLength="52.6" lengthAdjust="spacingAndGlyphs" stroke="#111111" stroke-width="0.28" >200 kHz</text>
<text x="549.8" y="1068.9" font-size="9" fill="#111111" font-weight="normal" text-anchor="start" stroke="#111111" stroke-width="0.28" >B</text>
<text x="555.4" y="1071.9" font-size="9" fill="#111111" font-weight="normal" text-anchor="start" stroke="#111111" stroke-width="0.28" >w</text>
<path d="M577,984 H659 Q663,984 663,988 V1074.5 Q663,1078.5 659,1078.5 H577 Q573,1078.5 573,1074.5 V988 Q573,984 577,984 Z" fill="#c9c9c9"/>
<path d="M577,984 H659 Q663,984 663,988 V1003 H573 V988 Q573,984 577,984 Z" fill="#4a3420"/>
<rect x="573" y="1003" width="90" height="2.4" fill="#b6bcbc" />
<text x="578.9" y="997.8" font-size="14.5" fill="#f0962a" font-weight="normal" text-anchor="start" textLength="48.75" lengthAdjust="spacingAndGlyphs" stroke="#f0962a" stroke-width="0.28" >Math 1</text>
<rect x="573" y="1005.4" width="90" height="16.6" fill="#ff0000" />
<path d="M581.0999999999999,1007.0 L588.5999999999999,1020.7 H573.8 Z" fill="#f2ee00" stroke="#3c3c64" stroke-width="1" stroke-linejoin="round"/>
<line x1="581.0999999999999" y1="1011.5" x2="581.0999999999999" y2="1018.5" stroke="#8a8a50" stroke-width="1.4" />
<text x="589.6" y="1018.0" font-size="14.5" fill="#ffffff" font-weight="normal" text-anchor="start" textLength="66.2" lengthAdjust="spacingAndGlyphs" stroke="#ffffff" stroke-width="0.28" >Empty i...</text>
<text x="578.25" y="1036.4" font-size="15" fill="#111111" font-weight="bold" text-anchor="start" textLength="81.75" lengthAdjust="spacingAndGlyphs" >72.6 mT/div</text>
<text x="578.25" y="1056.2" font-size="15" fill="#111111" font-weight="normal" text-anchor="start" textLength="73.75" lengthAdjust="spacingAndGlyphs" stroke="#111111" stroke-width="0.28" >Intg(Ch2)...</text>
<path d="M672,984 H754 Q758,984 758,988 V1074.5 Q758,1078.5 754,1078.5 H672 Q668,1078.5 668,1074.5 V988 Q668,984 672,984 Z" fill="#c9c9c9"/>
<path d="M672,984 H754 Q758,984 758,988 V1003 H668 V988 Q668,984 672,984 Z" fill="#2e2234"/>
<rect x="668" y="1003" width="90" height="2.4" fill="#b6bcbc" />
<text x="673.9" y="997.8" font-size="14.5" fill="#ffffff" font-weight="normal" text-anchor="start" textLength="48.75" lengthAdjust="spacingAndGlyphs" stroke="#ffffff" stroke-width="0.28" >Math 2</text>
<rect x="668" y="1005.4" width="90" height="16.6" fill="#ff0000" />
<path d="M676.0999999999999,1007.0 L683.5999999999999,1020.7 H668.8 Z" fill="#f2ee00" stroke="#3c3c64" stroke-width="1" stroke-linejoin="round"/>
<line x1="676.0999999999999" y1="1011.5" x2="676.0999999999999" y2="1018.5" stroke="#8a8a50" stroke-width="1.4" />
<text x="684.6" y="1018.0" font-size="14.5" fill="#ffffff" font-weight="normal" text-anchor="start" textLength="66.2" lengthAdjust="spacingAndGlyphs" stroke="#ffffff" stroke-width="0.28" >Empty i...</text>
<text x="673.25" y="1036.4" font-size="15" fill="#111111" font-weight="bold" text-anchor="start" textLength="80.5" lengthAdjust="spacingAndGlyphs" >952.64 A/...</text>
<text x="673.25" y="1056.2" font-size="15" fill="#111111" font-weight="normal" text-anchor="start" textLength="74.75" lengthAdjust="spacingAndGlyphs" stroke="#111111" stroke-width="0.28" >-Intg(Ch3...</text>
<line x1="1118.4" y1="1000" x2="1118.4" y2="1078" stroke="#5e5650" stroke-width="1.2" />
<line x1="1269.4" y1="1000" x2="1269.4" y2="1078" stroke="#5e5650" stroke-width="1.2" />
<line x1="1811.4" y1="1000" x2="1811.4" y2="1078" stroke="#5e5650" stroke-width="1.2" />
<rect x="1129.7" y="999.7" width="38.4" height="78.4" rx="6" fill="url(#btn)" stroke="#6b6158" stroke-width="1"/>
<rect x="1133.4" y="1007" width="31.4" height="2" fill="#c42020" />
<text x="1148.9" y="1032.7" font-size="15.5" fill="#f2f2f2" font-weight="normal" text-anchor="middle" textLength="26.7" lengthAdjust="spacingAndGlyphs" stroke="#f2f2f2" stroke-width="0.28" >Add</text>
<text x="1148.9" y="1048.6" font-size="15.5" fill="#f2f2f2" font-weight="normal" text-anchor="middle" textLength="28.8" lengthAdjust="spacingAndGlyphs" stroke="#f2f2f2" stroke-width="0.28" >New</text>
<text x="1148.9" y="1064.5" font-size="15.5" fill="#f2f2f2" font-weight="normal" text-anchor="middle" textLength="32.8" lengthAdjust="spacingAndGlyphs" stroke="#f2f2f2" stroke-width="0.28" >Math</text>
<rect x="1174.7" y="999.7" width="38.4" height="78.4" rx="6" fill="url(#btn)" stroke="#6b6158" stroke-width="1"/>
<rect x="1178.4" y="1007" width="31.4" height="2" fill="#c4c8dc" />
<text x="1193.9" y="1032.7" font-size="15.5" fill="#f2f2f2" font-weight="normal" text-anchor="middle" textLength="26.7" lengthAdjust="spacingAndGlyphs" stroke="#f2f2f2" stroke-width="0.28" >Add</text>
<text x="1193.9" y="1048.6" font-size="15.5" fill="#f2f2f2" font-weight="normal" text-anchor="middle" textLength="28.8" lengthAdjust="spacingAndGlyphs" stroke="#f2f2f2" stroke-width="0.28" >New</text>
<text x="1193.9" y="1064.5" font-size="15.5" fill="#f2f2f2" font-weight="normal" text-anchor="middle" textLength="20.2" lengthAdjust="spacingAndGlyphs" stroke="#f2f2f2" stroke-width="0.28" >Ref</text>
<rect x="1219.7" y="999.7" width="38.4" height="78.4" rx="6" fill="url(#btn)" stroke="#6b6158" stroke-width="1"/>
<rect x="1223.4" y="1007" width="31.4" height="2" fill="#c050f0" />
<text x="1238.9" y="1032.7" font-size="15.5" fill="#f2f2f2" font-weight="normal" text-anchor="middle" textLength="26.7" lengthAdjust="spacingAndGlyphs" stroke="#f2f2f2" stroke-width="0.28" >Add</text>
<text x="1238.9" y="1048.6" font-size="15.5" fill="#f2f2f2" font-weight="normal" text-anchor="middle" textLength="28.8" lengthAdjust="spacingAndGlyphs" stroke="#f2f2f2" stroke-width="0.28" >New</text>
<text x="1238.9" y="1064.5" font-size="15.5" fill="#f2f2f2" font-weight="normal" text-anchor="middle" textLength="21.6" lengthAdjust="spacingAndGlyphs" stroke="#f2f2f2" stroke-width="0.28" >Bus</text>
<rect x="1281" y="1004" width="198" height="74.20000000000005" rx="5" fill="#c9c9c9" stroke="#1a1a1a" stroke-width="0.8"/>
<path d="M1286,1004 H1474 Q1479,1004 1479,1009 V1022.5 H1281 V1009 Q1281,1004 1286,1004 Z" fill="url(#hdr)"/>
<rect x="1281" y="1022.5" width="198" height="2.5" fill="#a6a6a6" />
<text x="1286.3" y="1018" font-size="16" fill="#f0f0f0" font-weight="normal" text-anchor="start" textLength="73.4" lengthAdjust="spacingAndGlyphs" stroke="#f0f0f0" stroke-width="0.1" >Horizontal</text>
<text x="1284.9" y="1036.8" font-size="15" fill="#111111" font-weight="normal" text-anchor="start" textLength="53.3" lengthAdjust="spacingAndGlyphs" stroke="#111111" stroke-width="0.28" >4 ms/div</text>
<text x="1390.9" y="1036.8" font-size="15" fill="#111111" font-weight="normal" text-anchor="start" textLength="38.9" lengthAdjust="spacingAndGlyphs" stroke="#111111" stroke-width="0.28" >40 ms</text>
<text x="1284.9" y="1055.7" font-size="15" fill="#111111" font-weight="normal" text-anchor="start" textLength="67" lengthAdjust="spacingAndGlyphs" stroke="#111111" stroke-width="0.28" >SR: 1 MS/s</text>
<text x="1392" y="1055.7" font-size="15" fill="#111111" font-weight="normal" text-anchor="start" textLength="43" lengthAdjust="spacingAndGlyphs" stroke="#111111" stroke-width="0.28" >1 µs/pt</text>
<text x="1284.9" y="1074.6" font-size="15" fill="#111111" font-weight="normal" text-anchor="start" textLength="70.5" lengthAdjust="spacingAndGlyphs" stroke="#111111" stroke-width="0.28" >RL: 40 kpts</text>
<text x="1405.2" y="1074.6" font-size="15" fill="#111111" font-weight="normal" text-anchor="start" textLength="21.8" lengthAdjust="spacingAndGlyphs" stroke="#111111" stroke-width="0.28" >3%</text>
<path d="M1391.5,1063.5 H1400 V1072 H1397.4 L1395.8,1075.5 L1394.2,1072 H1391.5 Z" fill="#000" stroke="#f28a1e" stroke-width="1"/>
<text x="1395.8" y="1070.8" font-size="7.5" fill="#ffffff" font-weight="bold" text-anchor="middle" >T</text>
<rect x="1486" y="1004" width="158" height="74.20000000000005" rx="5" fill="#c9c9c9" stroke="#1a1a1a" stroke-width="0.8"/>
<path d="M1491,1004 H1639 Q1644,1004 1644,1009 V1022.5 H1486 V1009 Q1486,1004 1491,1004 Z" fill="url(#hdr)"/>
<rect x="1486" y="1022.5" width="158" height="2.5" fill="#a6a6a6" />
<text x="1491.3" y="1018" font-size="16" fill="#f0f0f0" font-weight="normal" text-anchor="start" textLength="49.3" lengthAdjust="spacingAndGlyphs" stroke="#f0f0f0" stroke-width="0.1" >Trigger</text>
<rect x="1490.5" y="1025.6" width="29.4" height="15" rx="5" fill="#2424c8" stroke="#111" stroke-width="1"/>
<text x="1505.2" y="1038.2" font-size="14" fill="#ffffff" font-weight="normal" text-anchor="middle" stroke="#ffffff" stroke-width="0.28" >6</text>
<polyline points="1530.0,1037.3 1534.0,1037.3 1543.0,1027.6 1546.2,1027.6" fill="none" stroke="#3a3a9a" stroke-width="1.2" stroke-linejoin="round" />
<text x="1556.2" y="1036.8" font-size="15" fill="#111111" font-weight="normal" text-anchor="start" textLength="21.2" lengthAdjust="spacingAndGlyphs" stroke="#111111" stroke-width="0.28" >3 V</text>
<rect x="1651" y="1004" width="148" height="74.20000000000005" rx="5" fill="#c9c9c9" stroke="#1a1a1a" stroke-width="0.8"/>
<path d="M1656,1004 H1794 Q1799,1004 1799,1009 V1022.5 H1651 V1009 Q1651,1004 1656,1004 Z" fill="url(#hdr)"/>
<rect x="1651" y="1022.5" width="148" height="2.5" fill="#a6a6a6" />
<text x="1656.3" y="1018" font-size="16" fill="#f0f0f0" font-weight="normal" text-anchor="start" textLength="77" lengthAdjust="spacingAndGlyphs" stroke="#f0f0f0" stroke-width="0.1" >Acquisition</text>
<text x="1655.3" y="1036.8" font-size="15" fill="#111111" font-weight="normal" text-anchor="start" textLength="51" lengthAdjust="spacingAndGlyphs" stroke="#111111" stroke-width="0.28" >Manual,</text>
<text x="1736.25" y="1036.8" font-size="15" fill="#111111" font-weight="normal" text-anchor="start" textLength="48.9" lengthAdjust="spacingAndGlyphs" stroke="#111111" stroke-width="0.28" >Analyze</text>
<text x="1655.3" y="1055.5" font-size="15" fill="#111111" font-weight="normal" text-anchor="start" textLength="106.9" lengthAdjust="spacingAndGlyphs" stroke="#111111" stroke-width="0.28" >High Res: 16 bits</text>
<text x="1655.3" y="1073.75" font-size="15" fill="#111111" font-weight="normal" text-anchor="start" textLength="69.3" lengthAdjust="spacingAndGlyphs" stroke="#111111" stroke-width="0.28" >Single: 1 /1</text>
<rect x="1822.8" y="999.9" width="88.2" height="34.3" rx="6" fill="#ff2028" stroke="#7c7c7c" stroke-width="1"/>
<text x="1866.7" y="1019.8" font-size="13.5" fill="#ffffff" font-weight="bold" text-anchor="middle" textLength="55.5" lengthAdjust="spacingAndGlyphs" >Stopped</text>
<rect x="1822" y="1040.5" width="90" height="37.9" rx="6" fill="#c9c9c9"/>
<text x="1866.8" y="1054.5" font-size="14.5" fill="#111111" font-weight="normal" text-anchor="middle" textLength="85" lengthAdjust="spacingAndGlyphs" stroke="#111111" stroke-width="0.28" >06 May 2025</text>
<text x="1867" y="1071.6" font-size="14.5" fill="#111111" font-weight="normal" text-anchor="middle" textLength="85" lengthAdjust="spacingAndGlyphs" stroke="#111111" stroke-width="0.28" >11:00:04 AM</text>
</svg></body></html>
